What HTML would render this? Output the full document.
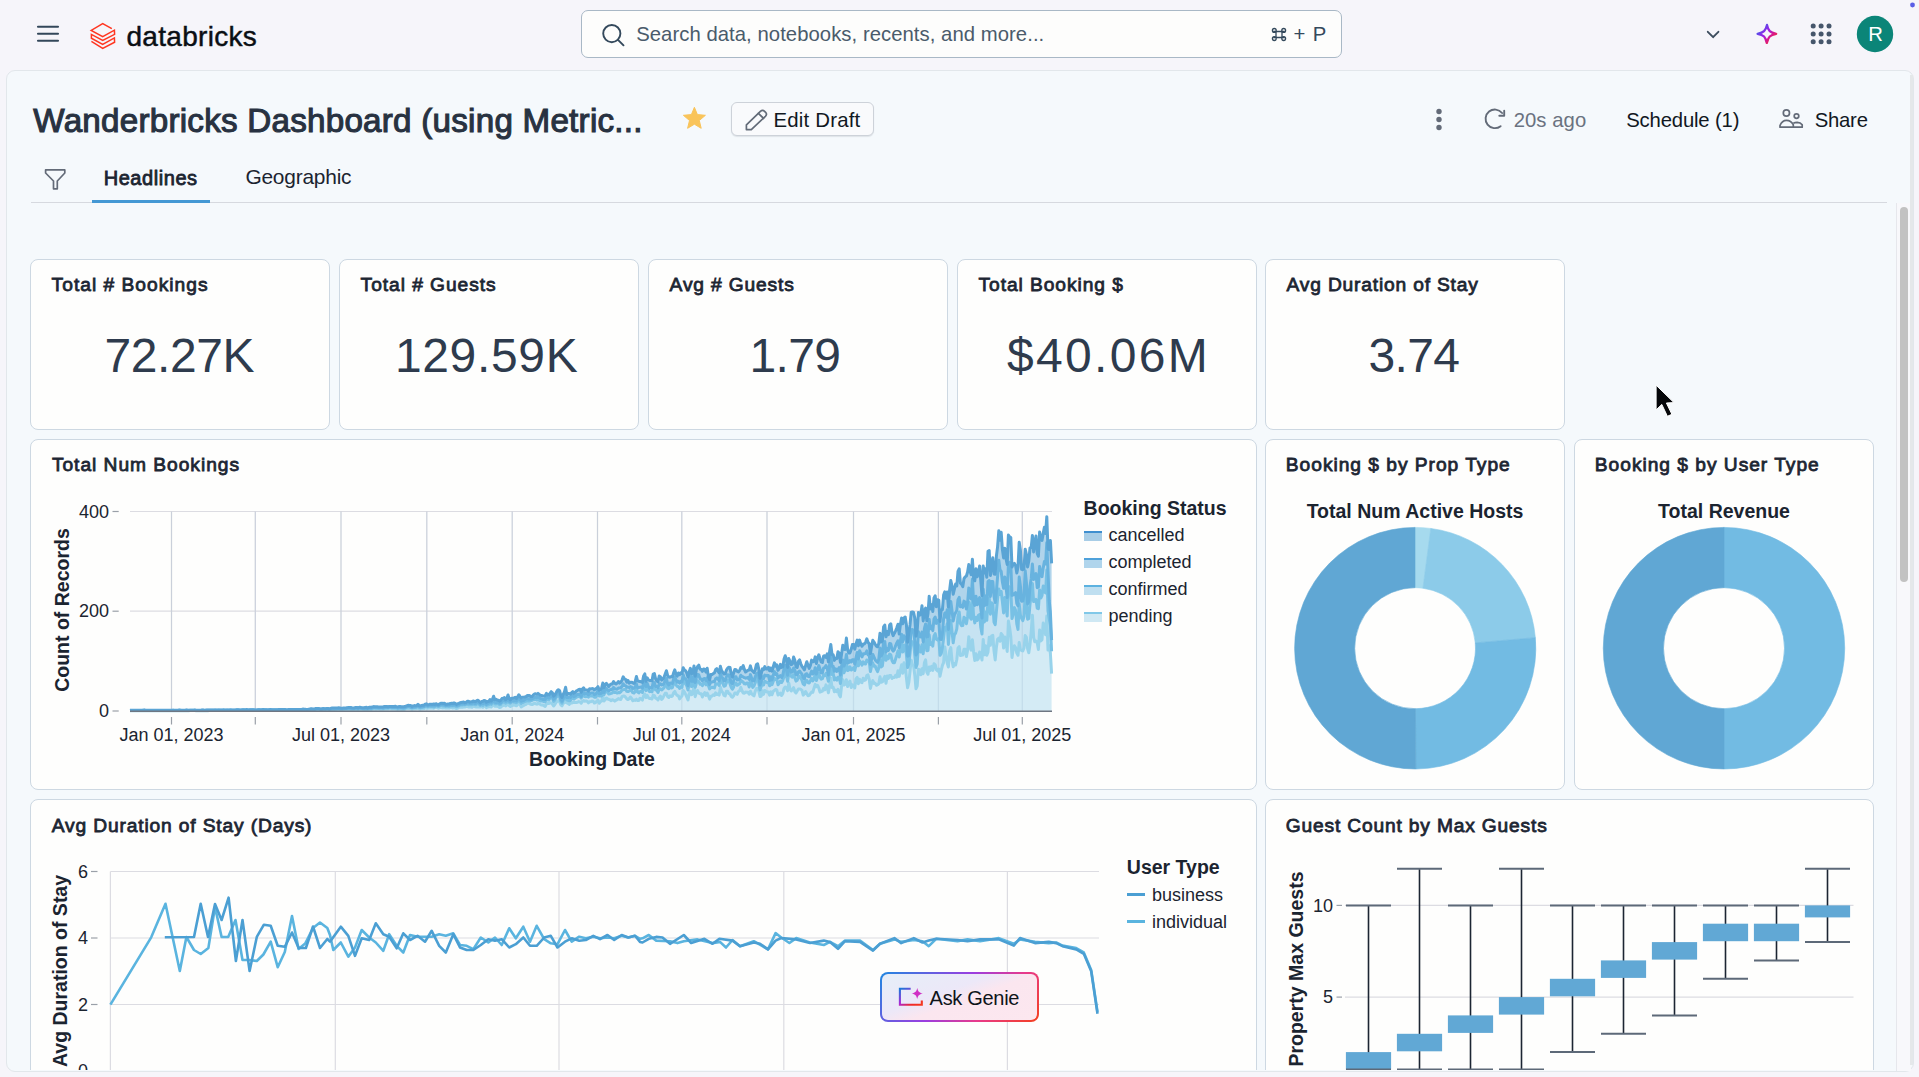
<!DOCTYPE html><html><head><meta charset="utf-8"><title>Wanderbricks Dashboard</title><style>
*{margin:0;padding:0;box-sizing:border-box}
html,body{width:1919px;height:1077px;overflow:hidden;background:#f6f5fa;font-family:"Liberation Sans",sans-serif}
.t{position:absolute;white-space:nowrap;line-height:1}
.a{position:absolute}
.card{position:absolute;background:#fefefd;border:1px solid #cdd8e2;border-radius:8px}
svg{position:absolute;left:0;top:0;overflow:visible}
</style></head><body>
<svg width="1919" height="70"><g stroke="#33475a" stroke-width="2.1" stroke-linecap="round"><line x1="38" y1="26.8" x2="58" y2="26.8"/><line x1="38" y1="33.8" x2="58" y2="33.8"/><line x1="38" y1="40.8" x2="58" y2="40.8"/></g><path d="M111.8,28.7 L102.7,23.5 L91.2,30.4 L102.7,36.6 L114.4,30.2 L114.6,34.4 L102.7,40.4 L91.4,34.4 L91.4,38.2 L102.7,44.4 L114.4,37.9 L114.6,42.2 L102.7,48.3 L91.4,41.4" fill="none" stroke="#ff3621" stroke-width="1.5" stroke-linejoin="miter"/></svg>
<div class="t" style="left:126.40px;top:23.00px;font-size:28px;font-weight:400;letter-spacing:0.31px;color:#0b0f14;-webkit-text-stroke:0.45px #0b0f14;">databricks</div>
<div class="a" style="left:581px;top:10px;width:761px;height:48px;border:1.5px solid #a9b8c6;border-radius:7px;background:#fdfdfc"></div>
<svg width="1919" height="70"><circle cx="611.8" cy="33.6" r="8.6" fill="none" stroke="#34495c" stroke-width="1.9"/><line x1="618" y1="39.8" x2="623.5" y2="45.3" stroke="#34495c" stroke-width="1.9" stroke-linecap="round"/><g fill="none" stroke="#34495c" stroke-width="1.3"><path d="M1276,30.9 V38.1 M1282,30.9 V38.1 M1273.2,31.5 H1284.8 M1273.2,37.5 H1284.8"/><circle cx="1274.3" cy="30.4" r="1.9"/><circle cx="1283.7" cy="30.4" r="1.9"/><circle cx="1274.3" cy="38.6" r="1.9"/><circle cx="1283.7" cy="38.6" r="1.9"/></g></svg>
<div class="t" style="left:636.20px;top:24.22px;font-size:20.3px;font-weight:400;letter-spacing:0.05px;color:#4a5b6b;">Search data, notebooks, recents, and more...</div>
<div class="t" style="left:1293.50px;top:24.22px;font-size:20.3px;font-weight:400;letter-spacing:0.9px;color:#34495c;">+ P</div>
<svg width="1919" height="70"><polyline points="1707.8,31.8 1713.1,37.2 1718.4,31.8" fill="none" stroke="#3d4d5e" stroke-width="1.9" stroke-linecap="round" stroke-linejoin="round"/><defs><linearGradient id="spk" gradientUnits="userSpaceOnUse" x1="1758" y1="26" x2="1775" y2="42"><stop offset="0" stop-color="#2a6de8"/><stop offset="0.45" stop-color="#9a1fe6"/><stop offset="0.7" stop-color="#d8188a"/><stop offset="1" stop-color="#f5301a"/></linearGradient><linearGradient id="gb" x1="0" y1="0" x2="1" y2="1"><stop offset="0" stop-color="#1f86e0"/><stop offset="0.5" stop-color="#b02ad8"/><stop offset="1" stop-color="#f53a1e"/></linearGradient></defs><path d="M1767,24.9 C1768.3,31 1770,32.6 1776.2,33.8 C1770,35 1768.3,36.8 1766.8,42.9 C1765.5,36.8 1763.8,35 1757.6,33.8 C1763.8,32.6 1765.5,31 1767,24.9 Z" fill="none" stroke="url(#spk)" stroke-width="2.3" stroke-linejoin="round"/><g fill="#46566b"><circle cx="1813.2" cy="26.0" r="2.5"/><circle cx="1813.2" cy="33.9" r="2.5"/><circle cx="1813.2" cy="41.8" r="2.5"/><circle cx="1821.1" cy="26.0" r="2.5"/><circle cx="1821.1" cy="33.9" r="2.5"/><circle cx="1821.1" cy="41.8" r="2.5"/><circle cx="1829.0" cy="26.0" r="2.5"/><circle cx="1829.0" cy="33.9" r="2.5"/><circle cx="1829.0" cy="41.8" r="2.5"/></g><circle cx="1875" cy="34" r="18.2" fill="#0b8578"/><circle cx="1912.5" cy="5" r="2.4" fill="#5a5ee6"/></svg>
<div class="t" style="left:1868.20px;top:24.32px;font-size:20.3px;font-weight:400;letter-spacing:0px;color:#ffffff;">R</div>
<div class="a" style="left:6px;top:70px;width:1908px;height:1002px;border:1px solid #e2e7eb;border-radius:9px;background:#f5f9fc"></div>
<div class="a" style="left:1896px;top:203px;width:1px;height:868px;background:#e6e7ec"></div>
<div class="a" style="left:1897px;top:203px;width:14px;height:868px;background:#f8f8fb"></div>
<div class="a" style="left:1910px;top:75px;width:3px;height:990px;background:#e5e8ea"></div>
<div class="a" style="left:1900px;top:207px;width:8px;height:375px;border-radius:4px;background:#c2c2c2"></div>
<div class="t" style="left:33.30px;top:103.90px;font-size:33.2px;font-weight:400;letter-spacing:0.24px;color:#283241;-webkit-text-stroke:1.1px #283241;">Wanderbricks Dashboard (using Metric...</div>
<svg width="1919" height="220"><path d="M694.4,107.3 L697.4,114.6 L705.4,115.3 L699.3,120.5 L701.2,128.3 L694.4,124.2 L687.6,128.3 L689.5,120.5 L683.4,115.3 L691.4,114.6 Z" fill="#f9c45a" stroke="#f9c45a" stroke-width="1" stroke-linejoin="round"/></svg>
<div class="a" style="left:731px;top:102px;width:143px;height:34px;border:1px solid #cdd2d9;border-radius:6px;background:#f9fafc;box-shadow:0 1px 1px rgba(60,70,90,0.12)"></div>
<svg width="1919" height="220"><g fill="none" stroke="#626b78" stroke-width="1.7" stroke-linejoin="round" stroke-linecap="round"><path d="M746.4,124.9 L760.4,111.3 Q762.6,109.3 764.6,111.3 L765.6,112.3 Q767.4,114.3 765.4,116.3 L751.3,129.6 L746.4,129.6 Z"/><line x1="758.4" y1="113.4" x2="763.5" y2="118.3"/></g><g fill="#636b78"><circle cx="1439" cy="111.5" r="2.7"/><circle cx="1439" cy="119.5" r="2.7"/><circle cx="1439" cy="127.5" r="2.7"/></g><g fill="none" stroke="#636b78" stroke-width="1.9" stroke-linecap="round" stroke-linejoin="round"><path d="M1502.1,113 A9.3,9.3 0 1 0 1500.6,126.2"/><path d="M1499.3,115.7 L1504.2,115.7 L1504.2,110.8"/></g><g fill="none" stroke="#636b78" stroke-width="1.7" stroke-linejoin="round"><circle cx="1786.4" cy="113" r="3.1"/><circle cx="1796.5" cy="116.1" r="2.3"/><path d="M1780,127.2 L1780,125.5 Q1782,120.3 1786.5,120.3 Q1791,120.3 1793.3,124.7 L1793.3,127.2 Z"/><path d="M1793.3,123.2 Q1795,122.4 1797.2,122.4 Q1800.5,122.5 1802.2,124.8 L1802.2,127.2 L1793.3,127.2"/></g><path d="M45.6,169.9 L64.8,169.9 L64.8,173 L57.3,181 L57.3,188.8 L53.5,188.8 L53.5,181 L45.6,173 Z" fill="none" stroke="#636b78" stroke-width="1.7" stroke-linejoin="round"/></svg>
<div class="t" style="left:773.50px;top:109.63px;font-size:20.4px;font-weight:400;letter-spacing:0.2px;color:#11181f;">Edit Draft</div>
<div class="t" style="left:1513.70px;top:109.72px;font-size:20.3px;font-weight:400;letter-spacing:0.05px;color:#6a7280;">20s ago</div>
<div class="t" style="left:1626.20px;top:109.62px;font-size:20.3px;font-weight:400;letter-spacing:-0.16px;color:#11181f;">Schedule (1)</div>
<div class="t" style="left:1814.70px;top:109.62px;font-size:20.3px;font-weight:400;letter-spacing:-0.22px;color:#11181f;">Share</div>
<div class="t" style="left:103.70px;top:167.67px;font-size:20px;font-weight:400;letter-spacing:0.56px;color:#1b2430;-webkit-text-stroke:0.8px #1b2430;">Headlines</div>
<div class="t" style="left:245.40px;top:167.41px;font-size:20.9px;font-weight:400;letter-spacing:-0.21px;color:#1b2430;">Geographic</div>
<div class="a" style="left:31px;top:202px;width:1856px;height:1px;background:#d6d9df"></div>
<div class="a" style="left:91.5px;top:200px;width:118.5px;height:3px;background:#4498d4"></div>
<div class="a" style="left:7px;top:203px;width:1889px;height:867px;overflow:hidden">
<div class="a" style="left:-7px;top:-203px;width:1919px;height:1077px">
<div class="card" style="left:30px;top:259px;width:300px;height:171px"></div>
<div class="card" style="left:339px;top:259px;width:300px;height:171px"></div>
<div class="card" style="left:648px;top:259px;width:300px;height:171px"></div>
<div class="card" style="left:957px;top:259px;width:300px;height:171px"></div>
<div class="card" style="left:1265px;top:259px;width:300px;height:171px"></div>
<div class="t" style="left:51.60px;top:275.05px;font-size:19.2px;font-weight:400;letter-spacing:1.01px;color:#1d2633;-webkit-text-stroke:0.8px #1d2633;">Total # Bookings</div>
<div class="t" style="left:104.50px;top:331.97px;font-size:48px;font-weight:400;letter-spacing:-0.4px;color:#2e3b4d;">72.27K</div>
<div class="t" style="left:360.60px;top:275.05px;font-size:19.2px;font-weight:400;letter-spacing:0.95px;color:#1d2633;-webkit-text-stroke:0.8px #1d2633;">Total # Guests</div>
<div class="t" style="left:394.90px;top:331.97px;font-size:48px;font-weight:400;letter-spacing:0.67px;color:#2e3b4d;">129.59K</div>
<div class="t" style="left:669.60px;top:275.05px;font-size:19.2px;font-weight:400;letter-spacing:0.85px;color:#1d2633;-webkit-text-stroke:0.8px #1d2633;">Avg # Guests</div>
<div class="t" style="left:749.50px;top:331.97px;font-size:48px;font-weight:400;letter-spacing:-0.7px;color:#2e3b4d;">1.79</div>
<div class="t" style="left:978.60px;top:275.05px;font-size:19.2px;font-weight:400;letter-spacing:0.93px;color:#1d2633;-webkit-text-stroke:0.8px #1d2633;">Total Booking $</div>
<div class="t" style="left:1007.00px;top:331.97px;font-size:48px;font-weight:400;letter-spacing:2.33px;color:#2e3b4d;">$40.06M</div>
<div class="t" style="left:1286.60px;top:275.05px;font-size:19.2px;font-weight:400;letter-spacing:0.82px;color:#1d2633;-webkit-text-stroke:0.8px #1d2633;">Avg Duration of Stay</div>
<div class="t" style="left:1368.60px;top:331.97px;font-size:48px;font-weight:400;letter-spacing:-0.67px;color:#2e3b4d;">3.74</div>
<div class="card" style="left:30px;top:439px;width:1227px;height:351px"></div>
<div class="card" style="left:1265px;top:439px;width:300px;height:351px"></div>
<div class="card" style="left:1574px;top:439px;width:300px;height:351px"></div>
<div class="t" style="left:51.90px;top:455.05px;font-size:19.2px;font-weight:400;letter-spacing:0.97px;color:#1d2633;-webkit-text-stroke:0.8px #1d2633;">Total Num Bookings</div>
<div class="t" style="left:1285.80px;top:455.05px;font-size:19.2px;font-weight:400;letter-spacing:0.98px;color:#1d2633;-webkit-text-stroke:0.8px #1d2633;">Booking $ by Prop Type</div>
<div class="t" style="left:1594.80px;top:455.05px;font-size:19.2px;font-weight:400;letter-spacing:0.98px;color:#1d2633;-webkit-text-stroke:0.8px #1d2633;">Booking $ by User Type</div>
<div class="card" style="left:30px;top:799px;width:1227px;height:400px"></div>
<div class="card" style="left:1265px;top:799px;width:609px;height:400px"></div>
<div class="t" style="left:51.70px;top:815.55px;font-size:19.2px;font-weight:400;letter-spacing:0.86px;color:#1d2633;-webkit-text-stroke:0.8px #1d2633;">Avg Duration of Stay (Days)</div>
<div class="t" style="left:1285.80px;top:815.55px;font-size:19.2px;font-weight:400;letter-spacing:0.83px;color:#1d2633;-webkit-text-stroke:0.8px #1d2633;">Guest Count by Max Guests</div>
<svg width="1919" height="1077"><line x1="130" y1="511.5" x2="1052" y2="511.5" stroke="#dcdce2" stroke-width="1.2"/><line x1="130" y1="611.2" x2="1052" y2="611.2" stroke="#dcdce2" stroke-width="1.2"/><line x1="171.5" y1="511.5" x2="171.5" y2="711" stroke="#dcdce2" stroke-width="1.2"/><line x1="171.5" y1="717" x2="171.5" y2="724.5" stroke="#9aa0a8" stroke-width="1.2"/><line x1="255.3" y1="511.5" x2="255.3" y2="711" stroke="#dcdce2" stroke-width="1.2"/><line x1="255.3" y1="717" x2="255.3" y2="724.5" stroke="#9aa0a8" stroke-width="1.2"/><line x1="341" y1="511.5" x2="341" y2="711" stroke="#dcdce2" stroke-width="1.2"/><line x1="341" y1="717" x2="341" y2="724.5" stroke="#9aa0a8" stroke-width="1.2"/><line x1="426.8" y1="511.5" x2="426.8" y2="711" stroke="#dcdce2" stroke-width="1.2"/><line x1="426.8" y1="717" x2="426.8" y2="724.5" stroke="#9aa0a8" stroke-width="1.2"/><line x1="512.2" y1="511.5" x2="512.2" y2="711" stroke="#dcdce2" stroke-width="1.2"/><line x1="512.2" y1="717" x2="512.2" y2="724.5" stroke="#9aa0a8" stroke-width="1.2"/><line x1="597.5" y1="511.5" x2="597.5" y2="711" stroke="#dcdce2" stroke-width="1.2"/><line x1="597.5" y1="717" x2="597.5" y2="724.5" stroke="#9aa0a8" stroke-width="1.2"/><line x1="681.8" y1="511.5" x2="681.8" y2="711" stroke="#dcdce2" stroke-width="1.2"/><line x1="681.8" y1="717" x2="681.8" y2="724.5" stroke="#9aa0a8" stroke-width="1.2"/><line x1="767" y1="511.5" x2="767" y2="711" stroke="#dcdce2" stroke-width="1.2"/><line x1="767" y1="717" x2="767" y2="724.5" stroke="#9aa0a8" stroke-width="1.2"/><line x1="853.5" y1="511.5" x2="853.5" y2="711" stroke="#dcdce2" stroke-width="1.2"/><line x1="853.5" y1="717" x2="853.5" y2="724.5" stroke="#9aa0a8" stroke-width="1.2"/><line x1="938.4" y1="511.5" x2="938.4" y2="711" stroke="#dcdce2" stroke-width="1.2"/><line x1="938.4" y1="717" x2="938.4" y2="724.5" stroke="#9aa0a8" stroke-width="1.2"/><line x1="1022.3" y1="511.5" x2="1022.3" y2="711" stroke="#dcdce2" stroke-width="1.2"/><line x1="1022.3" y1="717" x2="1022.3" y2="724.5" stroke="#9aa0a8" stroke-width="1.2"/><line x1="112.5" y1="511.5" x2="118.7" y2="511.5" stroke="#9aa0a8" stroke-width="1.2"/><line x1="112.5" y1="611.2" x2="118.7" y2="611.2" stroke="#9aa0a8" stroke-width="1.2"/><line x1="112.5" y1="711.0" x2="118.7" y2="711.0" stroke="#9aa0a8" stroke-width="1.2"/><polygon points="130.0,710.7 131.2,710.7 132.4,710.7 133.6,710.7 134.8,710.8 136.0,710.8 137.2,710.7 138.4,710.7 139.6,710.7 140.8,710.8 142.0,710.7 143.2,710.7 144.4,710.7 145.6,710.7 146.8,710.7 148.0,710.7 149.2,710.7 150.4,710.7 151.6,710.7 152.8,710.7 154.0,710.8 155.2,710.8 156.4,710.7 157.6,710.8 158.8,710.8 160.0,710.8 161.2,710.8 162.4,710.8 163.6,710.8 164.8,710.7 166.0,710.7 167.2,710.7 168.4,710.7 169.6,710.7 170.8,710.7 172.0,710.7 173.2,710.7 174.4,710.7 175.6,710.7 176.8,710.7 178.0,710.7 179.2,710.7 180.4,710.7 181.6,710.7 182.8,710.7 184.0,710.8 185.2,710.8 186.4,710.6 187.6,710.7 188.8,710.7 190.0,710.6 191.2,710.6 192.4,710.6 193.6,710.6 194.8,710.6 196.0,710.7 197.2,710.7 198.4,710.7 199.6,710.7 200.8,710.7 202.0,710.7 203.2,710.6 204.4,710.7 205.6,710.7 206.8,710.7 208.0,710.7 209.2,710.6 210.4,710.6 211.6,710.6 212.8,710.6 214.0,710.6 215.2,710.6 216.4,710.6 217.6,710.6 218.8,710.5 220.0,710.5 221.2,710.6 222.4,710.6 223.6,710.6 224.8,710.6 226.0,710.6 227.2,710.6 228.4,710.6 229.6,710.6 230.8,710.5 232.0,710.6 233.2,710.6 234.4,710.6 235.6,710.5 236.8,710.4 238.0,710.4 239.2,710.5 240.4,710.6 241.6,710.5 242.8,710.4 244.0,710.5 245.2,710.6 246.4,710.4 247.6,710.5 248.8,710.6 250.0,710.6 251.2,710.5 252.4,710.5 253.6,710.5 254.8,710.5 256.0,710.6 257.2,710.5 258.4,710.4 259.6,710.5 260.8,710.6 262.0,710.4 263.2,710.3 264.4,710.3 265.6,710.4 266.8,710.5 268.0,710.5 269.2,710.3 270.4,710.3 271.6,710.5 272.8,710.5 274.0,710.4 275.2,710.5 276.4,710.5 277.6,710.5 278.8,710.4 280.0,710.3 281.2,710.4 282.4,710.4 283.6,710.4 284.8,710.4 286.0,710.6 287.2,710.5 288.4,710.4 289.6,710.4 290.8,710.3 292.0,710.3 293.2,710.2 294.4,710.2 295.6,710.3 296.8,710.4 298.0,710.4 299.2,710.5 300.4,710.4 301.6,710.5 302.8,710.2 304.0,710.3 305.2,710.3 306.4,710.3 307.6,710.4 308.8,710.3 310.0,710.1 311.2,710.0 312.4,710.0 313.6,710.2 314.8,710.1 316.0,709.9 317.2,709.8 318.4,709.7 319.6,709.7 320.8,710.0 322.0,710.0 323.2,709.9 324.4,709.8 325.6,709.8 326.8,709.9 328.0,709.9 329.2,710.1 330.4,710.0 331.6,710.0 332.8,709.9 334.0,709.8 335.2,709.7 336.4,709.6 337.6,709.6 338.8,709.7 340.0,709.7 341.2,709.8 342.4,709.8 343.6,709.7 344.8,709.6 346.0,709.6 347.2,709.6 348.4,709.8 349.6,709.6 350.8,709.7 352.0,709.8 353.2,709.7 354.4,709.7 355.6,709.6 356.8,709.7 358.0,709.8 359.2,709.7 360.4,709.3 361.6,709.5 362.8,709.7 364.0,709.6 365.2,709.6 366.4,709.3 367.6,709.6 368.8,709.4 370.0,709.3 371.2,709.6 372.4,709.3 373.6,709.1 374.8,709.1 376.0,709.2 377.2,709.1 378.4,709.1 379.6,709.2 380.8,709.2 382.0,709.2 383.2,709.3 384.4,709.1 385.6,708.9 386.8,709.0 388.0,709.0 389.2,708.6 390.4,708.8 391.6,709.1 392.8,709.0 394.0,709.1 395.2,709.1 396.4,709.2 397.6,709.6 398.8,709.2 400.0,709.3 401.2,709.4 402.4,709.5 403.6,709.5 404.8,709.2 406.0,708.6 407.2,708.3 408.4,708.6 409.6,708.5 410.8,708.9 412.0,709.3 413.2,708.9 414.4,708.6 415.6,708.8 416.8,708.6 418.0,707.7 419.2,709.0 420.4,709.2 421.6,708.8 422.8,708.7 424.0,708.6 425.2,708.0 426.4,707.8 427.6,708.3 428.8,708.1 430.0,707.9 431.2,707.8 432.4,707.9 433.6,708.2 434.8,707.7 436.0,707.2 437.2,707.7 438.4,708.2 439.6,707.8 440.8,707.4 442.0,707.8 443.2,707.9 444.4,707.6 445.6,708.1 446.8,707.8 448.0,707.9 449.2,708.1 450.4,707.4 451.6,707.6 452.8,708.1 454.0,707.6 455.2,708.0 456.4,708.6 457.6,708.1 458.8,707.4 460.0,707.1 461.2,707.2 462.4,707.2 463.6,707.0 464.8,707.1 466.0,706.7 467.2,706.3 468.4,706.9 469.6,707.0 470.8,706.9 472.0,707.3 473.2,705.7 474.4,706.5 475.6,706.9 476.8,706.8 478.0,707.0 479.2,706.8 480.4,707.0 481.6,706.3 482.8,707.3 484.0,706.2 485.2,706.1 486.4,707.6 487.6,707.0 488.8,706.7 490.0,706.6 491.2,707.0 492.4,705.6 493.6,702.9 494.8,706.2 496.0,706.3 497.2,706.2 498.4,706.5 499.6,707.5 500.8,707.1 502.0,705.9 503.2,705.5 504.4,704.9 505.6,705.9 506.8,705.1 508.0,703.8 509.2,705.7 510.4,706.4 511.6,705.8 512.8,705.3 514.0,704.8 515.2,705.3 516.4,705.8 517.6,704.7 518.8,702.9 520.0,704.3 521.2,707.0 522.4,706.1 523.6,705.6 524.8,704.8 526.0,704.4 527.2,703.1 528.4,703.3 529.6,703.7 530.8,704.3 532.0,704.5 533.2,704.0 534.4,703.2 535.6,703.8 536.8,704.2 538.0,703.3 539.2,703.8 540.4,704.5 541.6,705.1 542.8,705.1 544.0,705.7 545.2,706.5 546.4,703.8 547.6,703.2 548.8,703.6 550.0,702.8 551.2,703.0 552.4,704.1 553.6,706.0 554.8,704.5 556.0,702.6 557.2,701.2 558.4,700.7 559.6,701.8 560.8,704.8 562.0,705.8 563.2,703.4 564.4,702.7 565.6,697.6 566.8,702.9 568.0,703.4 569.2,704.4 570.4,703.2 571.6,703.1 572.8,702.5 574.0,702.2 575.2,702.6 576.4,702.4 577.6,702.3 578.8,701.6 580.0,701.9 581.2,703.1 582.4,701.3 583.6,700.6 584.8,701.3 586.0,700.9 587.2,701.4 588.4,702.8 589.6,701.7 590.8,701.8 592.0,701.1 593.2,701.2 594.4,703.1 595.6,702.7 596.8,701.0 598.0,700.2 599.2,703.3 600.4,701.7 601.6,701.2 602.8,696.7 604.0,701.0 605.2,699.6 606.4,698.0 607.6,699.0 608.8,699.3 610.0,699.8 611.2,700.7 612.4,699.7 613.6,700.3 614.8,701.1 616.0,700.3 617.2,699.6 618.4,698.5 619.6,699.3 620.8,699.4 622.0,696.7 623.2,696.1 624.4,696.1 625.6,697.3 626.8,698.9 628.0,699.6 629.2,698.8 630.4,697.0 631.6,698.5 632.8,700.7 634.0,699.9 635.2,700.4 636.4,699.2 637.6,700.6 638.8,700.6 640.0,698.3 641.2,698.7 642.4,700.1 643.6,695.9 644.8,694.0 646.0,697.6 647.2,695.3 648.4,697.7 649.6,698.6 650.8,698.6 652.0,699.0 653.2,695.1 654.4,695.6 655.6,698.1 656.8,698.7 658.0,699.9 659.2,697.6 660.4,696.1 661.6,699.4 662.8,698.2 664.0,695.7 665.2,693.3 666.4,693.2 667.6,696.6 668.8,697.5 670.0,695.8 671.2,696.5 672.4,696.0 673.6,692.7 674.8,691.4 676.0,694.1 677.2,695.4 678.4,695.8 679.6,698.9 680.8,697.4 682.0,695.9 683.2,690.5 684.4,691.9 685.6,694.4 686.8,697.1 688.0,699.9 689.2,694.0 690.4,691.4 691.6,694.7 692.8,693.2 694.0,686.2 695.2,696.7 696.4,692.6 697.6,690.6 698.8,692.9 700.0,693.7 701.2,693.7 702.4,697.0 703.6,694.3 704.8,692.7 706.0,695.4 707.2,693.1 708.4,695.8 709.6,699.1 710.8,696.5 712.0,696.0 713.2,694.8 714.4,695.5 715.6,692.9 716.8,694.5 718.0,694.0 719.2,695.1 720.4,687.3 721.6,691.1 722.8,692.6 724.0,695.4 725.2,695.9 726.4,691.3 727.6,691.2 728.8,693.5 730.0,694.0 731.2,696.4 732.4,697.2 733.6,695.8 734.8,693.0 736.0,693.0 737.2,694.3 738.4,691.5 739.6,690.7 740.8,687.4 742.0,690.8 743.2,693.1 744.4,693.3 745.6,692.1 746.8,692.2 748.0,692.2 749.2,694.2 750.4,691.2 751.6,693.8 752.8,695.0 754.0,695.8 755.2,691.5 756.4,688.4 757.6,688.5 758.8,691.2 760.0,696.4 761.2,696.2 762.4,690.8 763.6,694.4 764.8,690.5 766.0,691.2 767.2,692.1 768.4,692.1 769.6,695.1 770.8,691.9 772.0,694.8 773.2,691.4 774.4,690.4 775.6,689.5 776.8,690.0 778.0,695.0 779.2,694.3 780.4,693.1 781.6,695.5 782.8,693.4 784.0,688.6 785.2,687.0 786.4,687.8 787.6,690.6 788.8,683.1 790.0,689.1 791.2,691.0 792.4,689.5 793.6,687.7 794.8,691.5 796.0,693.0 797.2,691.0 798.4,688.9 799.6,688.9 800.8,689.4 802.0,690.4 803.2,695.1 804.4,694.0 805.6,691.5 806.8,693.8 808.0,695.7 809.2,695.4 810.4,693.7 811.6,692.0 812.8,692.4 814.0,688.2 815.2,684.4 816.4,686.8 817.6,685.3 818.8,688.0 820.0,692.1 821.2,691.6 822.4,691.1 823.6,688.4 824.8,689.8 826.0,684.9 827.2,687.2 828.4,692.8 829.6,686.1 830.8,678.0 832.0,687.6 833.2,687.2 834.4,691.8 835.6,690.2 836.8,691.7 838.0,689.3 839.2,695.0 840.4,696.8 841.6,685.9 842.8,679.6 844.0,685.1 845.2,684.3 846.4,679.7 847.6,686.5 848.8,682.6 850.0,681.2 851.2,687.5 852.4,684.9 853.6,685.4 854.8,687.9 856.0,679.0 857.2,677.4 858.4,683.7 859.6,679.3 860.8,682.1 862.0,682.6 863.2,678.2 864.4,680.4 865.6,679.9 866.8,675.3 868.0,674.9 869.2,679.3 870.4,688.4 871.6,683.5 872.8,680.6 874.0,683.5 875.2,683.3 876.4,685.3 877.6,684.7 878.8,683.8 880.0,676.8 881.2,682.2 882.4,681.9 883.6,678.8 884.8,676.4 886.0,683.3 887.2,675.9 888.4,678.5 889.6,675.4 890.8,675.6 892.0,678.5 893.2,677.4 894.4,677.6 895.6,675.3 896.8,677.1 898.0,670.7 899.2,676.4 900.4,670.3 901.6,664.7 902.8,673.2 904.0,662.8 905.2,665.7 906.4,677.9 907.6,687.7 908.8,682.5 910.0,671.7 911.2,660.2 912.4,664.4 913.6,665.7 914.8,675.2 916.0,688.8 917.2,685.9 918.4,669.2 919.6,670.0 920.8,674.8 922.0,668.8 923.2,673.7 924.4,662.9 925.6,659.9 926.8,672.0 928.0,674.2 929.2,667.0 930.4,670.4 931.6,666.4 932.8,670.4 934.0,663.7 935.2,664.6 936.4,669.8 937.6,671.0 938.8,669.1 940.0,676.2 941.2,670.5 942.4,665.4 943.6,662.6 944.8,647.1 946.0,655.0 947.2,663.0 948.4,667.0 949.6,651.3 950.8,647.6 952.0,660.3 953.2,666.8 954.4,663.5 955.6,665.0 956.8,659.5 958.0,648.0 959.2,646.7 960.4,655.5 961.6,655.2 962.8,655.1 964.0,649.2 965.2,649.3 966.4,656.6 967.6,650.3 968.8,636.7 970.0,646.7 971.2,650.2 972.4,639.8 973.6,651.9 974.8,660.6 976.0,653.7 977.2,659.9 978.4,658.5 979.6,652.0 980.8,654.7 982.0,660.0 983.2,639.4 984.4,654.8 985.6,645.7 986.8,655.3 988.0,651.9 989.2,637.3 990.4,645.3 991.6,635.9 992.8,635.4 994.0,650.9 995.2,659.9 996.4,647.1 997.6,639.1 998.8,638.2 1000.0,641.3 1001.2,633.5 1002.4,635.2 1003.6,648.0 1004.8,637.1 1006.0,642.5 1007.2,651.4 1008.4,621.1 1009.6,627.4 1010.8,636.4 1012.0,657.4 1013.2,649.5 1014.4,645.8 1015.6,647.5 1016.8,653.1 1018.0,655.3 1019.2,642.5 1020.4,649.8 1021.6,650.5 1022.8,650.9 1024.0,648.0 1025.2,635.6 1026.4,637.3 1027.6,648.7 1028.8,652.7 1030.0,644.3 1031.2,631.6 1032.4,615.2 1033.6,637.3 1034.8,641.8 1036.0,641.0 1037.2,642.5 1038.4,649.5 1039.6,630.0 1040.8,640.9 1042.0,639.7 1043.2,623.0 1044.4,627.7 1045.6,634.7 1046.8,615.9 1048.0,650.1 1049.2,645.6 1050.4,653.5 1051.6,673.7 1051.6,711.0 1050.4,711.0 1049.2,711.0 1048.0,711.0 1046.8,711.0 1045.6,711.0 1044.4,711.0 1043.2,711.0 1042.0,711.0 1040.8,711.0 1039.6,711.0 1038.4,711.0 1037.2,711.0 1036.0,711.0 1034.8,711.0 1033.6,711.0 1032.4,711.0 1031.2,711.0 1030.0,711.0 1028.8,711.0 1027.6,711.0 1026.4,711.0 1025.2,711.0 1024.0,711.0 1022.8,711.0 1021.6,711.0 1020.4,711.0 1019.2,711.0 1018.0,711.0 1016.8,711.0 1015.6,711.0 1014.4,711.0 1013.2,711.0 1012.0,711.0 1010.8,711.0 1009.6,711.0 1008.4,711.0 1007.2,711.0 1006.0,711.0 1004.8,711.0 1003.6,711.0 1002.4,711.0 1001.2,711.0 1000.0,711.0 998.8,711.0 997.6,711.0 996.4,711.0 995.2,711.0 994.0,711.0 992.8,711.0 991.6,711.0 990.4,711.0 989.2,711.0 988.0,711.0 986.8,711.0 985.6,711.0 984.4,711.0 983.2,711.0 982.0,711.0 980.8,711.0 979.6,711.0 978.4,711.0 977.2,711.0 976.0,711.0 974.8,711.0 973.6,711.0 972.4,711.0 971.2,711.0 970.0,711.0 968.8,711.0 967.6,711.0 966.4,711.0 965.2,711.0 964.0,711.0 962.8,711.0 961.6,711.0 960.4,711.0 959.2,711.0 958.0,711.0 956.8,711.0 955.6,711.0 954.4,711.0 953.2,711.0 952.0,711.0 950.8,711.0 949.6,711.0 948.4,711.0 947.2,711.0 946.0,711.0 944.8,711.0 943.6,711.0 942.4,711.0 941.2,711.0 940.0,711.0 938.8,711.0 937.6,711.0 936.4,711.0 935.2,711.0 934.0,711.0 932.8,711.0 931.6,711.0 930.4,711.0 929.2,711.0 928.0,711.0 926.8,711.0 925.6,711.0 924.4,711.0 923.2,711.0 922.0,711.0 920.8,711.0 919.6,711.0 918.4,711.0 917.2,711.0 916.0,711.0 914.8,711.0 913.6,711.0 912.4,711.0 911.2,711.0 910.0,711.0 908.8,711.0 907.6,711.0 906.4,711.0 905.2,711.0 904.0,711.0 902.8,711.0 901.6,711.0 900.4,711.0 899.2,711.0 898.0,711.0 896.8,711.0 895.6,711.0 894.4,711.0 893.2,711.0 892.0,711.0 890.8,711.0 889.6,711.0 888.4,711.0 887.2,711.0 886.0,711.0 884.8,711.0 883.6,711.0 882.4,711.0 881.2,711.0 880.0,711.0 878.8,711.0 877.6,711.0 876.4,711.0 875.2,711.0 874.0,711.0 872.8,711.0 871.6,711.0 870.4,711.0 869.2,711.0 868.0,711.0 866.8,711.0 865.6,711.0 864.4,711.0 863.2,711.0 862.0,711.0 860.8,711.0 859.6,711.0 858.4,711.0 857.2,711.0 856.0,711.0 854.8,711.0 853.6,711.0 852.4,711.0 851.2,711.0 850.0,711.0 848.8,711.0 847.6,711.0 846.4,711.0 845.2,711.0 844.0,711.0 842.8,711.0 841.6,711.0 840.4,711.0 839.2,711.0 838.0,711.0 836.8,711.0 835.6,711.0 834.4,711.0 833.2,711.0 832.0,711.0 830.8,711.0 829.6,711.0 828.4,711.0 827.2,711.0 826.0,711.0 824.8,711.0 823.6,711.0 822.4,711.0 821.2,711.0 820.0,711.0 818.8,711.0 817.6,711.0 816.4,711.0 815.2,711.0 814.0,711.0 812.8,711.0 811.6,711.0 810.4,711.0 809.2,711.0 808.0,711.0 806.8,711.0 805.6,711.0 804.4,711.0 803.2,711.0 802.0,711.0 800.8,711.0 799.6,711.0 798.4,711.0 797.2,711.0 796.0,711.0 794.8,711.0 793.6,711.0 792.4,711.0 791.2,711.0 790.0,711.0 788.8,711.0 787.6,711.0 786.4,711.0 785.2,711.0 784.0,711.0 782.8,711.0 781.6,711.0 780.4,711.0 779.2,711.0 778.0,711.0 776.8,711.0 775.6,711.0 774.4,711.0 773.2,711.0 772.0,711.0 770.8,711.0 769.6,711.0 768.4,711.0 767.2,711.0 766.0,711.0 764.8,711.0 763.6,711.0 762.4,711.0 761.2,711.0 760.0,711.0 758.8,711.0 757.6,711.0 756.4,711.0 755.2,711.0 754.0,711.0 752.8,711.0 751.6,711.0 750.4,711.0 749.2,711.0 748.0,711.0 746.8,711.0 745.6,711.0 744.4,711.0 743.2,711.0 742.0,711.0 740.8,711.0 739.6,711.0 738.4,711.0 737.2,711.0 736.0,711.0 734.8,711.0 733.6,711.0 732.4,711.0 731.2,711.0 730.0,711.0 728.8,711.0 727.6,711.0 726.4,711.0 725.2,711.0 724.0,711.0 722.8,711.0 721.6,711.0 720.4,711.0 719.2,711.0 718.0,711.0 716.8,711.0 715.6,711.0 714.4,711.0 713.2,711.0 712.0,711.0 710.8,711.0 709.6,711.0 708.4,711.0 707.2,711.0 706.0,711.0 704.8,711.0 703.6,711.0 702.4,711.0 701.2,711.0 700.0,711.0 698.8,711.0 697.6,711.0 696.4,711.0 695.2,711.0 694.0,711.0 692.8,711.0 691.6,711.0 690.4,711.0 689.2,711.0 688.0,711.0 686.8,711.0 685.6,711.0 684.4,711.0 683.2,711.0 682.0,711.0 680.8,711.0 679.6,711.0 678.4,711.0 677.2,711.0 676.0,711.0 674.8,711.0 673.6,711.0 672.4,711.0 671.2,711.0 670.0,711.0 668.8,711.0 667.6,711.0 666.4,711.0 665.2,711.0 664.0,711.0 662.8,711.0 661.6,711.0 660.4,711.0 659.2,711.0 658.0,711.0 656.8,711.0 655.6,711.0 654.4,711.0 653.2,711.0 652.0,711.0 650.8,711.0 649.6,711.0 648.4,711.0 647.2,711.0 646.0,711.0 644.8,711.0 643.6,711.0 642.4,711.0 641.2,711.0 640.0,711.0 638.8,711.0 637.6,711.0 636.4,711.0 635.2,711.0 634.0,711.0 632.8,711.0 631.6,711.0 630.4,711.0 629.2,711.0 628.0,711.0 626.8,711.0 625.6,711.0 624.4,711.0 623.2,711.0 622.0,711.0 620.8,711.0 619.6,711.0 618.4,711.0 617.2,711.0 616.0,711.0 614.8,711.0 613.6,711.0 612.4,711.0 611.2,711.0 610.0,711.0 608.8,711.0 607.6,711.0 606.4,711.0 605.2,711.0 604.0,711.0 602.8,711.0 601.6,711.0 600.4,711.0 599.2,711.0 598.0,711.0 596.8,711.0 595.6,711.0 594.4,711.0 593.2,711.0 592.0,711.0 590.8,711.0 589.6,711.0 588.4,711.0 587.2,711.0 586.0,711.0 584.8,711.0 583.6,711.0 582.4,711.0 581.2,711.0 580.0,711.0 578.8,711.0 577.6,711.0 576.4,711.0 575.2,711.0 574.0,711.0 572.8,711.0 571.6,711.0 570.4,711.0 569.2,711.0 568.0,711.0 566.8,711.0 565.6,711.0 564.4,711.0 563.2,711.0 562.0,711.0 560.8,711.0 559.6,711.0 558.4,711.0 557.2,711.0 556.0,711.0 554.8,711.0 553.6,711.0 552.4,711.0 551.2,711.0 550.0,711.0 548.8,711.0 547.6,711.0 546.4,711.0 545.2,711.0 544.0,711.0 542.8,711.0 541.6,711.0 540.4,711.0 539.2,711.0 538.0,711.0 536.8,711.0 535.6,711.0 534.4,711.0 533.2,711.0 532.0,711.0 530.8,711.0 529.6,711.0 528.4,711.0 527.2,711.0 526.0,711.0 524.8,711.0 523.6,711.0 522.4,711.0 521.2,711.0 520.0,711.0 518.8,711.0 517.6,711.0 516.4,711.0 515.2,711.0 514.0,711.0 512.8,711.0 511.6,711.0 510.4,711.0 509.2,711.0 508.0,711.0 506.8,711.0 505.6,711.0 504.4,711.0 503.2,711.0 502.0,711.0 500.8,711.0 499.6,711.0 498.4,711.0 497.2,711.0 496.0,711.0 494.8,711.0 493.6,711.0 492.4,711.0 491.2,711.0 490.0,711.0 488.8,711.0 487.6,711.0 486.4,711.0 485.2,711.0 484.0,711.0 482.8,711.0 481.6,711.0 480.4,711.0 479.2,711.0 478.0,711.0 476.8,711.0 475.6,711.0 474.4,711.0 473.2,711.0 472.0,711.0 470.8,711.0 469.6,711.0 468.4,711.0 467.2,711.0 466.0,711.0 464.8,711.0 463.6,711.0 462.4,711.0 461.2,711.0 460.0,711.0 458.8,711.0 457.6,711.0 456.4,711.0 455.2,711.0 454.0,711.0 452.8,711.0 451.6,711.0 450.4,711.0 449.2,711.0 448.0,711.0 446.8,711.0 445.6,711.0 444.4,711.0 443.2,711.0 442.0,711.0 440.8,711.0 439.6,711.0 438.4,711.0 437.2,711.0 436.0,711.0 434.8,711.0 433.6,711.0 432.4,711.0 431.2,711.0 430.0,711.0 428.8,711.0 427.6,711.0 426.4,711.0 425.2,711.0 424.0,711.0 422.8,711.0 421.6,711.0 420.4,711.0 419.2,711.0 418.0,711.0 416.8,711.0 415.6,711.0 414.4,711.0 413.2,711.0 412.0,711.0 410.8,711.0 409.6,711.0 408.4,711.0 407.2,711.0 406.0,711.0 404.8,711.0 403.6,711.0 402.4,711.0 401.2,711.0 400.0,711.0 398.8,711.0 397.6,711.0 396.4,711.0 395.2,711.0 394.0,711.0 392.8,711.0 391.6,711.0 390.4,711.0 389.2,711.0 388.0,711.0 386.8,711.0 385.6,711.0 384.4,711.0 383.2,711.0 382.0,711.0 380.8,711.0 379.6,711.0 378.4,711.0 377.2,711.0 376.0,711.0 374.8,711.0 373.6,711.0 372.4,711.0 371.2,711.0 370.0,711.0 368.8,711.0 367.6,711.0 366.4,711.0 365.2,711.0 364.0,711.0 362.8,711.0 361.6,711.0 360.4,711.0 359.2,711.0 358.0,711.0 356.8,711.0 355.6,711.0 354.4,711.0 353.2,711.0 352.0,711.0 350.8,711.0 349.6,711.0 348.4,711.0 347.2,711.0 346.0,711.0 344.8,711.0 343.6,711.0 342.4,711.0 341.2,711.0 340.0,711.0 338.8,711.0 337.6,711.0 336.4,711.0 335.2,711.0 334.0,711.0 332.8,711.0 331.6,711.0 330.4,711.0 329.2,711.0 328.0,711.0 326.8,711.0 325.6,711.0 324.4,711.0 323.2,711.0 322.0,711.0 320.8,711.0 319.6,711.0 318.4,711.0 317.2,711.0 316.0,711.0 314.8,711.0 313.6,711.0 312.4,711.0 311.2,711.0 310.0,711.0 308.8,711.0 307.6,711.0 306.4,711.0 305.2,711.0 304.0,711.0 302.8,711.0 301.6,711.0 300.4,711.0 299.2,711.0 298.0,711.0 296.8,711.0 295.6,711.0 294.4,711.0 293.2,711.0 292.0,711.0 290.8,711.0 289.6,711.0 288.4,711.0 287.2,711.0 286.0,711.0 284.8,711.0 283.6,711.0 282.4,711.0 281.2,711.0 280.0,711.0 278.8,711.0 277.6,711.0 276.4,711.0 275.2,711.0 274.0,711.0 272.8,711.0 271.6,711.0 270.4,711.0 269.2,711.0 268.0,711.0 266.8,711.0 265.6,711.0 264.4,711.0 263.2,711.0 262.0,711.0 260.8,711.0 259.6,711.0 258.4,711.0 257.2,711.0 256.0,711.0 254.8,711.0 253.6,711.0 252.4,711.0 251.2,711.0 250.0,711.0 248.8,711.0 247.6,711.0 246.4,711.0 245.2,711.0 244.0,711.0 242.8,711.0 241.6,711.0 240.4,711.0 239.2,711.0 238.0,711.0 236.8,711.0 235.6,711.0 234.4,711.0 233.2,711.0 232.0,711.0 230.8,711.0 229.6,711.0 228.4,711.0 227.2,711.0 226.0,711.0 224.8,711.0 223.6,711.0 222.4,711.0 221.2,711.0 220.0,711.0 218.8,711.0 217.6,711.0 216.4,711.0 215.2,711.0 214.0,711.0 212.8,711.0 211.6,711.0 210.4,711.0 209.2,711.0 208.0,711.0 206.8,711.0 205.6,711.0 204.4,711.0 203.2,711.0 202.0,711.0 200.8,711.0 199.6,711.0 198.4,711.0 197.2,711.0 196.0,711.0 194.8,711.0 193.6,711.0 192.4,711.0 191.2,711.0 190.0,711.0 188.8,711.0 187.6,711.0 186.4,711.0 185.2,711.0 184.0,711.0 182.8,711.0 181.6,711.0 180.4,711.0 179.2,711.0 178.0,711.0 176.8,711.0 175.6,711.0 174.4,711.0 173.2,711.0 172.0,711.0 170.8,711.0 169.6,711.0 168.4,711.0 167.2,711.0 166.0,711.0 164.8,711.0 163.6,711.0 162.4,711.0 161.2,711.0 160.0,711.0 158.8,711.0 157.6,711.0 156.4,711.0 155.2,711.0 154.0,711.0 152.8,711.0 151.6,711.0 150.4,711.0 149.2,711.0 148.0,711.0 146.8,711.0 145.6,711.0 144.4,711.0 143.2,711.0 142.0,711.0 140.8,711.0 139.6,711.0 138.4,711.0 137.2,711.0 136.0,711.0 134.8,711.0 133.6,711.0 132.4,711.0 131.2,711.0 130.0,711.0" fill="#d4ebf5"/><polygon points="130.0,710.6 131.2,710.5 132.4,710.5 133.6,710.6 134.8,710.6 136.0,710.6 137.2,710.6 138.4,710.5 139.6,710.6 140.8,710.6 142.0,710.5 143.2,710.5 144.4,710.5 145.6,710.6 146.8,710.6 148.0,710.5 149.2,710.5 150.4,710.6 151.6,710.5 152.8,710.6 154.0,710.6 155.2,710.6 156.4,710.6 157.6,710.6 158.8,710.6 160.0,710.6 161.2,710.6 162.4,710.6 163.6,710.6 164.8,710.6 166.0,710.5 167.2,710.5 168.4,710.5 169.6,710.5 170.8,710.5 172.0,710.5 173.2,710.5 174.4,710.5 175.6,710.5 176.8,710.6 178.0,710.5 179.2,710.4 180.4,710.5 181.6,710.6 182.8,710.6 184.0,710.6 185.2,710.6 186.4,710.4 187.6,710.5 188.8,710.5 190.0,710.5 191.2,710.5 192.4,710.5 193.6,710.5 194.8,710.4 196.0,710.6 197.2,710.5 198.4,710.5 199.6,710.6 200.8,710.5 202.0,710.5 203.2,710.4 204.4,710.5 205.6,710.5 206.8,710.4 208.0,710.4 209.2,710.4 210.4,710.5 211.6,710.5 212.8,710.4 214.0,710.4 215.2,710.3 216.4,710.4 217.6,710.4 218.8,710.3 220.0,710.4 221.2,710.5 222.4,710.4 223.6,710.3 224.8,710.4 226.0,710.4 227.2,710.3 228.4,710.4 229.6,710.3 230.8,710.3 232.0,710.4 233.2,710.4 234.4,710.4 235.6,710.3 236.8,710.2 238.0,710.2 239.2,710.3 240.4,710.4 241.6,710.2 242.8,710.2 244.0,710.3 245.2,710.3 246.4,710.0 247.6,710.2 248.8,710.2 250.0,710.3 251.2,710.2 252.4,710.1 253.6,710.2 254.8,710.2 256.0,710.3 257.2,710.2 258.4,710.1 259.6,710.1 260.8,710.3 262.0,710.1 263.2,710.0 264.4,710.0 265.6,710.1 266.8,710.2 268.0,710.2 269.2,710.0 270.4,710.0 271.6,710.1 272.8,710.2 274.0,710.2 275.2,710.2 276.4,710.2 277.6,710.2 278.8,710.0 280.0,710.0 281.2,710.0 282.4,710.0 283.6,710.0 284.8,710.0 286.0,710.3 287.2,710.3 288.4,710.1 289.6,710.1 290.8,710.0 292.0,710.0 293.2,709.9 294.4,709.9 295.6,710.0 296.8,710.0 298.0,710.1 299.2,710.0 300.4,710.0 301.6,710.1 302.8,709.7 304.0,709.9 305.2,709.9 306.4,710.0 307.6,710.0 308.8,709.8 310.0,709.7 311.2,709.5 312.4,709.4 313.6,709.7 314.8,709.6 316.0,709.3 317.2,709.4 318.4,709.3 319.6,709.4 320.8,709.6 322.0,709.4 323.2,709.3 324.4,709.3 325.6,709.4 326.8,709.3 328.0,709.3 329.2,709.5 330.4,709.4 331.6,709.2 332.8,709.2 334.0,709.2 335.2,709.0 336.4,709.0 337.6,709.0 338.8,708.8 340.0,709.1 341.2,709.1 342.4,709.0 343.6,709.0 344.8,708.8 346.0,708.8 347.2,708.6 348.4,708.8 349.6,708.6 350.8,708.9 352.0,709.0 353.2,709.0 354.4,708.8 355.6,708.7 356.8,708.8 358.0,709.1 359.2,708.6 360.4,708.5 361.6,708.6 362.8,708.8 364.0,708.9 365.2,709.0 366.4,708.7 367.6,709.0 368.8,708.8 370.0,708.4 371.2,708.7 372.4,708.4 373.6,708.0 374.8,708.0 376.0,708.2 377.2,708.2 378.4,708.2 379.6,708.3 380.8,708.1 382.0,708.1 383.2,708.4 384.4,708.2 385.6,707.9 386.8,707.7 388.0,708.0 389.2,707.5 390.4,707.5 391.6,707.9 392.8,708.1 394.0,708.1 395.2,707.8 396.4,708.1 397.6,708.4 398.8,708.2 400.0,708.0 401.2,708.2 402.4,708.3 403.6,708.4 404.8,708.3 406.0,707.7 407.2,707.2 408.4,707.1 409.6,707.1 410.8,707.6 412.0,708.1 413.2,707.7 414.4,707.5 415.6,707.4 416.8,707.2 418.0,706.1 419.2,707.6 420.4,707.9 421.6,707.5 422.8,707.4 424.0,707.1 425.2,706.2 426.4,705.9 427.6,706.9 428.8,706.6 430.0,706.3 431.2,706.5 432.4,706.6 433.6,706.9 434.8,706.7 436.0,705.7 437.2,706.0 438.4,706.6 439.6,706.1 440.8,705.5 442.0,705.6 443.2,706.0 444.4,705.7 445.6,706.4 446.8,706.1 448.0,706.2 449.2,706.5 450.4,705.9 451.6,706.0 452.8,706.1 454.0,705.5 455.2,706.0 456.4,706.8 457.6,706.3 458.8,705.9 460.0,705.1 461.2,705.1 462.4,705.0 463.6,704.6 464.8,704.9 466.0,704.4 467.2,704.1 468.4,704.7 469.6,704.8 470.8,704.5 472.0,704.7 473.2,703.6 474.4,704.6 475.6,704.8 476.8,704.2 478.0,703.8 479.2,704.6 480.4,705.4 481.6,704.4 482.8,705.5 484.0,704.1 485.2,703.8 486.4,705.5 487.6,704.9 488.8,704.8 490.0,703.4 491.2,704.5 492.4,702.5 493.6,699.8 494.8,703.8 496.0,703.9 497.2,703.5 498.4,703.6 499.6,704.7 500.8,704.3 502.0,702.4 503.2,702.4 504.4,702.0 505.6,703.1 506.8,702.5 508.0,699.4 509.2,702.5 510.4,703.2 511.6,701.7 512.8,702.1 514.0,702.3 515.2,702.3 516.4,702.8 517.6,701.6 518.8,700.0 520.0,701.3 521.2,703.4 522.4,702.7 523.6,702.4 524.8,701.5 526.0,701.0 527.2,700.0 528.4,701.0 529.6,701.0 530.8,700.9 532.0,700.4 533.2,699.7 534.4,699.5 535.6,699.3 536.8,700.1 538.0,699.4 539.2,700.3 540.4,700.9 541.6,700.7 542.8,701.1 544.0,701.7 545.2,701.7 546.4,698.3 547.6,699.7 548.8,700.0 550.0,698.5 551.2,697.5 552.4,698.3 553.6,701.4 554.8,700.0 556.0,697.7 557.2,696.2 558.4,696.2 559.6,697.2 560.8,701.2 562.0,703.3 563.2,700.3 564.4,698.3 565.6,693.1 566.8,699.9 568.0,700.4 569.2,700.9 570.4,700.5 571.6,698.6 572.8,697.7 574.0,699.0 575.2,698.1 576.4,697.3 577.6,696.6 578.8,696.4 580.0,696.2 581.2,698.1 582.4,695.8 583.6,695.4 584.8,696.6 586.0,696.7 587.2,696.3 588.4,697.1 589.6,695.2 590.8,696.1 592.0,695.9 593.2,696.1 594.4,697.3 595.6,697.3 596.8,695.5 598.0,693.1 599.2,696.0 600.4,696.1 601.6,696.0 602.8,690.4 604.0,694.7 605.2,691.7 606.4,691.0 607.6,692.5 608.8,693.9 610.0,693.7 611.2,693.4 612.4,692.8 613.6,691.5 614.8,692.6 616.0,692.5 617.2,693.1 618.4,692.5 619.6,692.7 620.8,691.8 622.0,690.1 623.2,689.7 624.4,689.6 625.6,689.5 626.8,691.3 628.0,691.6 629.2,691.0 630.4,690.0 631.6,690.5 632.8,692.7 634.0,693.1 635.2,691.6 636.4,688.2 637.6,692.0 638.8,692.9 640.0,691.6 641.2,691.1 642.4,692.5 643.6,687.5 644.8,686.3 646.0,690.6 647.2,686.7 648.4,689.9 649.6,691.7 650.8,691.2 652.0,691.8 653.2,687.0 654.4,687.5 655.6,690.1 656.8,690.3 658.0,692.4 659.2,689.5 660.4,688.9 661.6,690.0 662.8,689.1 664.0,687.7 665.2,685.4 666.4,684.3 667.6,688.1 668.8,688.8 670.0,686.2 671.2,688.0 672.4,687.5 673.6,683.1 674.8,681.2 676.0,684.9 677.2,686.4 678.4,686.4 679.6,688.5 680.8,686.8 682.0,687.4 683.2,679.3 684.4,682.6 685.6,684.0 686.8,685.9 688.0,690.0 689.2,684.0 690.4,681.1 691.6,686.6 692.8,685.4 694.0,677.6 695.2,687.3 696.4,683.0 697.6,680.8 698.8,681.6 700.0,684.2 701.2,684.1 702.4,685.7 703.6,683.2 704.8,682.5 706.0,684.8 707.2,682.2 708.4,685.4 709.6,688.9 710.8,687.6 712.0,687.2 713.2,687.4 714.4,688.0 715.6,684.4 716.8,683.7 718.0,684.0 719.2,685.4 720.4,678.5 721.6,681.9 722.8,683.4 724.0,686.2 725.2,685.9 726.4,682.8 727.6,680.0 728.8,680.1 730.0,683.8 731.2,687.4 732.4,689.2 733.6,687.2 734.8,683.1 736.0,683.0 737.2,685.3 738.4,684.6 739.6,683.8 740.8,680.1 742.0,681.4 743.2,682.1 744.4,683.8 745.6,684.0 746.8,683.0 748.0,683.3 749.2,687.0 750.4,681.1 751.6,683.9 752.8,687.4 754.0,685.8 755.2,683.0 756.4,678.7 757.6,677.5 758.8,683.4 760.0,689.9 761.2,686.5 762.4,682.6 763.6,685.0 764.8,681.1 766.0,682.0 767.2,682.6 768.4,682.5 769.6,685.8 770.8,681.4 772.0,684.6 773.2,681.5 774.4,678.3 775.6,679.4 776.8,679.2 778.0,684.8 779.2,683.2 780.4,681.0 781.6,682.5 782.8,680.4 784.0,676.8 785.2,672.1 786.4,675.2 787.6,681.3 788.8,673.2 790.0,674.4 791.2,676.3 792.4,677.2 793.6,674.7 794.8,677.8 796.0,681.1 797.2,680.3 798.4,677.4 799.6,676.2 800.8,678.1 802.0,680.4 803.2,683.9 804.4,685.0 805.6,681.2 806.8,680.3 808.0,682.7 809.2,682.9 810.4,680.8 811.6,678.3 812.8,680.9 814.0,679.0 815.2,674.5 816.4,680.5 817.6,677.1 818.8,673.5 820.0,677.2 821.2,679.2 822.4,678.7 823.6,675.0 824.8,675.7 826.0,673.3 827.2,676.5 828.4,681.3 829.6,673.0 830.8,664.5 832.0,674.5 833.2,673.5 834.4,679.9 835.6,678.0 836.8,680.1 838.0,677.2 839.2,677.0 840.4,683.6 841.6,674.2 842.8,666.9 844.0,672.7 845.2,669.4 846.4,661.1 847.6,670.6 848.8,670.0 850.0,666.8 851.2,670.0 852.4,669.0 853.6,667.7 854.8,670.5 856.0,665.2 857.2,660.6 858.4,665.8 859.6,660.8 860.8,662.5 862.0,665.1 863.2,661.8 864.4,663.7 865.6,664.0 866.8,660.0 868.0,661.6 869.2,661.2 870.4,671.6 871.6,666.0 872.8,662.9 874.0,666.2 875.2,666.1 876.4,669.3 877.6,671.6 878.8,668.1 880.0,657.9 881.2,666.9 882.4,665.8 883.6,655.7 884.8,652.5 886.0,660.3 887.2,656.1 888.4,658.7 889.6,654.1 890.8,654.8 892.0,660.5 893.2,662.7 894.4,662.7 895.6,659.0 896.8,655.1 898.0,650.8 899.2,657.0 900.4,649.6 901.6,643.7 902.8,652.0 904.0,644.9 905.2,648.1 906.4,654.3 907.6,667.5 908.8,664.1 910.0,653.7 911.2,641.0 912.4,642.5 913.6,642.7 914.8,655.2 916.0,667.4 917.2,663.9 918.4,644.8 919.6,649.6 920.8,652.0 922.0,644.7 923.2,653.7 924.4,640.3 925.6,636.4 926.8,650.7 928.0,650.5 929.2,634.8 930.4,644.4 931.6,643.0 932.8,646.1 934.0,635.9 935.2,633.6 936.4,639.3 937.6,640.1 938.8,638.7 940.0,655.3 941.2,653.7 942.4,647.6 943.6,638.3 944.8,627.4 946.0,629.9 947.2,623.7 948.4,644.4 949.6,628.1 950.8,620.6 952.0,631.7 953.2,642.8 954.4,634.8 955.6,633.1 956.8,628.9 958.0,616.5 959.2,612.0 960.4,623.5 961.6,625.7 962.8,625.6 964.0,617.2 965.2,618.4 966.4,623.7 967.6,616.7 968.8,602.0 970.0,617.1 971.2,619.2 972.4,596.1 973.6,616.5 974.8,622.9 976.0,617.2 977.2,620.5 978.4,615.3 979.6,614.6 980.8,627.5 982.0,634.0 983.2,606.1 984.4,621.9 985.6,612.0 986.8,620.3 988.0,599.8 989.2,597.9 990.4,614.2 991.6,602.8 992.8,604.1 994.0,622.0 995.2,624.6 996.4,611.4 997.6,598.6 998.8,588.9 1000.0,594.4 1001.2,591.5 1002.4,601.7 1003.6,612.9 1004.8,597.6 1006.0,605.8 1007.2,616.0 1008.4,586.3 1009.6,587.0 1010.8,588.3 1012.0,618.6 1013.2,614.0 1014.4,607.6 1015.6,610.3 1016.8,623.9 1018.0,629.4 1019.2,604.0 1020.4,615.1 1021.6,618.3 1022.8,620.6 1024.0,616.6 1025.2,593.8 1026.4,602.5 1027.6,619.2 1028.8,618.5 1030.0,604.2 1031.2,594.4 1032.4,583.4 1033.6,601.6 1034.8,600.9 1036.0,599.4 1037.2,608.1 1038.4,608.7 1039.6,589.9 1040.8,598.1 1042.0,595.5 1043.2,586.1 1044.4,591.7 1045.6,592.8 1046.8,569.9 1048.0,611.1 1049.2,618.4 1050.4,625.5 1051.6,651.2 1051.6,673.7 1050.4,653.5 1049.2,645.6 1048.0,650.1 1046.8,615.9 1045.6,634.7 1044.4,627.7 1043.2,623.0 1042.0,639.7 1040.8,640.9 1039.6,630.0 1038.4,649.5 1037.2,642.5 1036.0,641.0 1034.8,641.8 1033.6,637.3 1032.4,615.2 1031.2,631.6 1030.0,644.3 1028.8,652.7 1027.6,648.7 1026.4,637.3 1025.2,635.6 1024.0,648.0 1022.8,650.9 1021.6,650.5 1020.4,649.8 1019.2,642.5 1018.0,655.3 1016.8,653.1 1015.6,647.5 1014.4,645.8 1013.2,649.5 1012.0,657.4 1010.8,636.4 1009.6,627.4 1008.4,621.1 1007.2,651.4 1006.0,642.5 1004.8,637.1 1003.6,648.0 1002.4,635.2 1001.2,633.5 1000.0,641.3 998.8,638.2 997.6,639.1 996.4,647.1 995.2,659.9 994.0,650.9 992.8,635.4 991.6,635.9 990.4,645.3 989.2,637.3 988.0,651.9 986.8,655.3 985.6,645.7 984.4,654.8 983.2,639.4 982.0,660.0 980.8,654.7 979.6,652.0 978.4,658.5 977.2,659.9 976.0,653.7 974.8,660.6 973.6,651.9 972.4,639.8 971.2,650.2 970.0,646.7 968.8,636.7 967.6,650.3 966.4,656.6 965.2,649.3 964.0,649.2 962.8,655.1 961.6,655.2 960.4,655.5 959.2,646.7 958.0,648.0 956.8,659.5 955.6,665.0 954.4,663.5 953.2,666.8 952.0,660.3 950.8,647.6 949.6,651.3 948.4,667.0 947.2,663.0 946.0,655.0 944.8,647.1 943.6,662.6 942.4,665.4 941.2,670.5 940.0,676.2 938.8,669.1 937.6,671.0 936.4,669.8 935.2,664.6 934.0,663.7 932.8,670.4 931.6,666.4 930.4,670.4 929.2,667.0 928.0,674.2 926.8,672.0 925.6,659.9 924.4,662.9 923.2,673.7 922.0,668.8 920.8,674.8 919.6,670.0 918.4,669.2 917.2,685.9 916.0,688.8 914.8,675.2 913.6,665.7 912.4,664.4 911.2,660.2 910.0,671.7 908.8,682.5 907.6,687.7 906.4,677.9 905.2,665.7 904.0,662.8 902.8,673.2 901.6,664.7 900.4,670.3 899.2,676.4 898.0,670.7 896.8,677.1 895.6,675.3 894.4,677.6 893.2,677.4 892.0,678.5 890.8,675.6 889.6,675.4 888.4,678.5 887.2,675.9 886.0,683.3 884.8,676.4 883.6,678.8 882.4,681.9 881.2,682.2 880.0,676.8 878.8,683.8 877.6,684.7 876.4,685.3 875.2,683.3 874.0,683.5 872.8,680.6 871.6,683.5 870.4,688.4 869.2,679.3 868.0,674.9 866.8,675.3 865.6,679.9 864.4,680.4 863.2,678.2 862.0,682.6 860.8,682.1 859.6,679.3 858.4,683.7 857.2,677.4 856.0,679.0 854.8,687.9 853.6,685.4 852.4,684.9 851.2,687.5 850.0,681.2 848.8,682.6 847.6,686.5 846.4,679.7 845.2,684.3 844.0,685.1 842.8,679.6 841.6,685.9 840.4,696.8 839.2,695.0 838.0,689.3 836.8,691.7 835.6,690.2 834.4,691.8 833.2,687.2 832.0,687.6 830.8,678.0 829.6,686.1 828.4,692.8 827.2,687.2 826.0,684.9 824.8,689.8 823.6,688.4 822.4,691.1 821.2,691.6 820.0,692.1 818.8,688.0 817.6,685.3 816.4,686.8 815.2,684.4 814.0,688.2 812.8,692.4 811.6,692.0 810.4,693.7 809.2,695.4 808.0,695.7 806.8,693.8 805.6,691.5 804.4,694.0 803.2,695.1 802.0,690.4 800.8,689.4 799.6,688.9 798.4,688.9 797.2,691.0 796.0,693.0 794.8,691.5 793.6,687.7 792.4,689.5 791.2,691.0 790.0,689.1 788.8,683.1 787.6,690.6 786.4,687.8 785.2,687.0 784.0,688.6 782.8,693.4 781.6,695.5 780.4,693.1 779.2,694.3 778.0,695.0 776.8,690.0 775.6,689.5 774.4,690.4 773.2,691.4 772.0,694.8 770.8,691.9 769.6,695.1 768.4,692.1 767.2,692.1 766.0,691.2 764.8,690.5 763.6,694.4 762.4,690.8 761.2,696.2 760.0,696.4 758.8,691.2 757.6,688.5 756.4,688.4 755.2,691.5 754.0,695.8 752.8,695.0 751.6,693.8 750.4,691.2 749.2,694.2 748.0,692.2 746.8,692.2 745.6,692.1 744.4,693.3 743.2,693.1 742.0,690.8 740.8,687.4 739.6,690.7 738.4,691.5 737.2,694.3 736.0,693.0 734.8,693.0 733.6,695.8 732.4,697.2 731.2,696.4 730.0,694.0 728.8,693.5 727.6,691.2 726.4,691.3 725.2,695.9 724.0,695.4 722.8,692.6 721.6,691.1 720.4,687.3 719.2,695.1 718.0,694.0 716.8,694.5 715.6,692.9 714.4,695.5 713.2,694.8 712.0,696.0 710.8,696.5 709.6,699.1 708.4,695.8 707.2,693.1 706.0,695.4 704.8,692.7 703.6,694.3 702.4,697.0 701.2,693.7 700.0,693.7 698.8,692.9 697.6,690.6 696.4,692.6 695.2,696.7 694.0,686.2 692.8,693.2 691.6,694.7 690.4,691.4 689.2,694.0 688.0,699.9 686.8,697.1 685.6,694.4 684.4,691.9 683.2,690.5 682.0,695.9 680.8,697.4 679.6,698.9 678.4,695.8 677.2,695.4 676.0,694.1 674.8,691.4 673.6,692.7 672.4,696.0 671.2,696.5 670.0,695.8 668.8,697.5 667.6,696.6 666.4,693.2 665.2,693.3 664.0,695.7 662.8,698.2 661.6,699.4 660.4,696.1 659.2,697.6 658.0,699.9 656.8,698.7 655.6,698.1 654.4,695.6 653.2,695.1 652.0,699.0 650.8,698.6 649.6,698.6 648.4,697.7 647.2,695.3 646.0,697.6 644.8,694.0 643.6,695.9 642.4,700.1 641.2,698.7 640.0,698.3 638.8,700.6 637.6,700.6 636.4,699.2 635.2,700.4 634.0,699.9 632.8,700.7 631.6,698.5 630.4,697.0 629.2,698.8 628.0,699.6 626.8,698.9 625.6,697.3 624.4,696.1 623.2,696.1 622.0,696.7 620.8,699.4 619.6,699.3 618.4,698.5 617.2,699.6 616.0,700.3 614.8,701.1 613.6,700.3 612.4,699.7 611.2,700.7 610.0,699.8 608.8,699.3 607.6,699.0 606.4,698.0 605.2,699.6 604.0,701.0 602.8,696.7 601.6,701.2 600.4,701.7 599.2,703.3 598.0,700.2 596.8,701.0 595.6,702.7 594.4,703.1 593.2,701.2 592.0,701.1 590.8,701.8 589.6,701.7 588.4,702.8 587.2,701.4 586.0,700.9 584.8,701.3 583.6,700.6 582.4,701.3 581.2,703.1 580.0,701.9 578.8,701.6 577.6,702.3 576.4,702.4 575.2,702.6 574.0,702.2 572.8,702.5 571.6,703.1 570.4,703.2 569.2,704.4 568.0,703.4 566.8,702.9 565.6,697.6 564.4,702.7 563.2,703.4 562.0,705.8 560.8,704.8 559.6,701.8 558.4,700.7 557.2,701.2 556.0,702.6 554.8,704.5 553.6,706.0 552.4,704.1 551.2,703.0 550.0,702.8 548.8,703.6 547.6,703.2 546.4,703.8 545.2,706.5 544.0,705.7 542.8,705.1 541.6,705.1 540.4,704.5 539.2,703.8 538.0,703.3 536.8,704.2 535.6,703.8 534.4,703.2 533.2,704.0 532.0,704.5 530.8,704.3 529.6,703.7 528.4,703.3 527.2,703.1 526.0,704.4 524.8,704.8 523.6,705.6 522.4,706.1 521.2,707.0 520.0,704.3 518.8,702.9 517.6,704.7 516.4,705.8 515.2,705.3 514.0,704.8 512.8,705.3 511.6,705.8 510.4,706.4 509.2,705.7 508.0,703.8 506.8,705.1 505.6,705.9 504.4,704.9 503.2,705.5 502.0,705.9 500.8,707.1 499.6,707.5 498.4,706.5 497.2,706.2 496.0,706.3 494.8,706.2 493.6,702.9 492.4,705.6 491.2,707.0 490.0,706.6 488.8,706.7 487.6,707.0 486.4,707.6 485.2,706.1 484.0,706.2 482.8,707.3 481.6,706.3 480.4,707.0 479.2,706.8 478.0,707.0 476.8,706.8 475.6,706.9 474.4,706.5 473.2,705.7 472.0,707.3 470.8,706.9 469.6,707.0 468.4,706.9 467.2,706.3 466.0,706.7 464.8,707.1 463.6,707.0 462.4,707.2 461.2,707.2 460.0,707.1 458.8,707.4 457.6,708.1 456.4,708.6 455.2,708.0 454.0,707.6 452.8,708.1 451.6,707.6 450.4,707.4 449.2,708.1 448.0,707.9 446.8,707.8 445.6,708.1 444.4,707.6 443.2,707.9 442.0,707.8 440.8,707.4 439.6,707.8 438.4,708.2 437.2,707.7 436.0,707.2 434.8,707.7 433.6,708.2 432.4,707.9 431.2,707.8 430.0,707.9 428.8,708.1 427.6,708.3 426.4,707.8 425.2,708.0 424.0,708.6 422.8,708.7 421.6,708.8 420.4,709.2 419.2,709.0 418.0,707.7 416.8,708.6 415.6,708.8 414.4,708.6 413.2,708.9 412.0,709.3 410.8,708.9 409.6,708.5 408.4,708.6 407.2,708.3 406.0,708.6 404.8,709.2 403.6,709.5 402.4,709.5 401.2,709.4 400.0,709.3 398.8,709.2 397.6,709.6 396.4,709.2 395.2,709.1 394.0,709.1 392.8,709.0 391.6,709.1 390.4,708.8 389.2,708.6 388.0,709.0 386.8,709.0 385.6,708.9 384.4,709.1 383.2,709.3 382.0,709.2 380.8,709.2 379.6,709.2 378.4,709.1 377.2,709.1 376.0,709.2 374.8,709.1 373.6,709.1 372.4,709.3 371.2,709.6 370.0,709.3 368.8,709.4 367.6,709.6 366.4,709.3 365.2,709.6 364.0,709.6 362.8,709.7 361.6,709.5 360.4,709.3 359.2,709.7 358.0,709.8 356.8,709.7 355.6,709.6 354.4,709.7 353.2,709.7 352.0,709.8 350.8,709.7 349.6,709.6 348.4,709.8 347.2,709.6 346.0,709.6 344.8,709.6 343.6,709.7 342.4,709.8 341.2,709.8 340.0,709.7 338.8,709.7 337.6,709.6 336.4,709.6 335.2,709.7 334.0,709.8 332.8,709.9 331.6,710.0 330.4,710.0 329.2,710.1 328.0,709.9 326.8,709.9 325.6,709.8 324.4,709.8 323.2,709.9 322.0,710.0 320.8,710.0 319.6,709.7 318.4,709.7 317.2,709.8 316.0,709.9 314.8,710.1 313.6,710.2 312.4,710.0 311.2,710.0 310.0,710.1 308.8,710.3 307.6,710.4 306.4,710.3 305.2,710.3 304.0,710.3 302.8,710.2 301.6,710.5 300.4,710.4 299.2,710.5 298.0,710.4 296.8,710.4 295.6,710.3 294.4,710.2 293.2,710.2 292.0,710.3 290.8,710.3 289.6,710.4 288.4,710.4 287.2,710.5 286.0,710.6 284.8,710.4 283.6,710.4 282.4,710.4 281.2,710.4 280.0,710.3 278.8,710.4 277.6,710.5 276.4,710.5 275.2,710.5 274.0,710.4 272.8,710.5 271.6,710.5 270.4,710.3 269.2,710.3 268.0,710.5 266.8,710.5 265.6,710.4 264.4,710.3 263.2,710.3 262.0,710.4 260.8,710.6 259.6,710.5 258.4,710.4 257.2,710.5 256.0,710.6 254.8,710.5 253.6,710.5 252.4,710.5 251.2,710.5 250.0,710.6 248.8,710.6 247.6,710.5 246.4,710.4 245.2,710.6 244.0,710.5 242.8,710.4 241.6,710.5 240.4,710.6 239.2,710.5 238.0,710.4 236.8,710.4 235.6,710.5 234.4,710.6 233.2,710.6 232.0,710.6 230.8,710.5 229.6,710.6 228.4,710.6 227.2,710.6 226.0,710.6 224.8,710.6 223.6,710.6 222.4,710.6 221.2,710.6 220.0,710.5 218.8,710.5 217.6,710.6 216.4,710.6 215.2,710.6 214.0,710.6 212.8,710.6 211.6,710.6 210.4,710.6 209.2,710.6 208.0,710.7 206.8,710.7 205.6,710.7 204.4,710.7 203.2,710.6 202.0,710.7 200.8,710.7 199.6,710.7 198.4,710.7 197.2,710.7 196.0,710.7 194.8,710.6 193.6,710.6 192.4,710.6 191.2,710.6 190.0,710.6 188.8,710.7 187.6,710.7 186.4,710.6 185.2,710.8 184.0,710.8 182.8,710.7 181.6,710.7 180.4,710.7 179.2,710.7 178.0,710.7 176.8,710.7 175.6,710.7 174.4,710.7 173.2,710.7 172.0,710.7 170.8,710.7 169.6,710.7 168.4,710.7 167.2,710.7 166.0,710.7 164.8,710.7 163.6,710.8 162.4,710.8 161.2,710.8 160.0,710.8 158.8,710.8 157.6,710.8 156.4,710.7 155.2,710.8 154.0,710.8 152.8,710.7 151.6,710.7 150.4,710.7 149.2,710.7 148.0,710.7 146.8,710.7 145.6,710.7 144.4,710.7 143.2,710.7 142.0,710.7 140.8,710.8 139.6,710.7 138.4,710.7 137.2,710.7 136.0,710.8 134.8,710.8 133.6,710.7 132.4,710.7 131.2,710.7 130.0,710.7" fill="#c6e3f2"/><polygon points="130.0,710.4 131.2,710.4 132.4,710.4 133.6,710.4 134.8,710.5 136.0,710.5 137.2,710.4 138.4,710.4 139.6,710.4 140.8,710.5 142.0,710.4 143.2,710.3 144.4,710.3 145.6,710.4 146.8,710.4 148.0,710.4 149.2,710.4 150.4,710.4 151.6,710.4 152.8,710.4 154.0,710.5 155.2,710.5 156.4,710.4 157.6,710.4 158.8,710.5 160.0,710.5 161.2,710.5 162.4,710.4 163.6,710.5 164.8,710.4 166.0,710.4 167.2,710.4 168.4,710.4 169.6,710.4 170.8,710.4 172.0,710.4 173.2,710.3 174.4,710.4 175.6,710.4 176.8,710.4 178.0,710.4 179.2,710.3 180.4,710.3 181.6,710.4 182.8,710.4 184.0,710.4 185.2,710.4 186.4,710.3 187.6,710.3 188.8,710.4 190.0,710.3 191.2,710.3 192.4,710.3 193.6,710.3 194.8,710.3 196.0,710.4 197.2,710.4 198.4,710.4 199.6,710.4 200.8,710.4 202.0,710.3 203.2,710.3 204.4,710.4 205.6,710.3 206.8,710.3 208.0,710.3 209.2,710.3 210.4,710.3 211.6,710.3 212.8,710.3 214.0,710.2 215.2,710.2 216.4,710.2 217.6,710.2 218.8,710.2 220.0,710.2 221.2,710.3 222.4,710.2 223.6,710.1 224.8,710.2 226.0,710.2 227.2,710.2 228.4,710.3 229.6,710.2 230.8,710.1 232.0,710.2 233.2,710.2 234.4,710.3 235.6,710.2 236.8,710.0 238.0,710.0 239.2,710.1 240.4,710.2 241.6,710.1 242.8,710.0 244.0,710.1 245.2,710.1 246.4,709.9 247.6,710.0 248.8,710.1 250.0,710.1 251.2,710.1 252.4,710.0 253.6,710.0 254.8,710.1 256.0,710.2 257.2,710.1 258.4,709.9 259.6,709.9 260.8,710.1 262.0,709.9 263.2,709.8 264.4,709.9 265.6,709.9 266.8,710.0 268.0,710.0 269.2,709.9 270.4,709.8 271.6,710.0 272.8,710.0 274.0,710.0 275.2,710.0 276.4,710.0 277.6,710.0 278.8,709.9 280.0,709.8 281.2,709.8 282.4,709.9 283.6,709.8 284.8,709.8 286.0,710.1 287.2,710.1 288.4,709.9 289.6,709.9 290.8,709.8 292.0,709.8 293.2,709.7 294.4,709.7 295.6,709.8 296.8,709.8 298.0,709.9 299.2,709.8 300.4,709.8 301.6,709.8 302.8,709.5 304.0,709.7 305.2,709.7 306.4,709.8 307.6,709.7 308.8,709.5 310.0,709.4 311.2,709.2 312.4,709.2 313.6,709.5 314.8,709.4 316.0,709.0 317.2,709.1 318.4,708.9 319.6,709.1 320.8,709.4 322.0,709.2 323.2,709.0 324.4,709.0 325.6,709.1 326.8,709.0 328.0,708.9 329.2,709.2 330.4,709.0 331.6,708.8 332.8,708.8 334.0,708.8 335.2,708.6 336.4,708.7 337.6,708.6 338.8,708.4 340.0,708.7 341.2,708.8 342.4,708.7 343.6,708.6 344.8,708.5 346.0,708.5 347.2,708.3 348.4,708.3 349.6,708.2 350.8,708.4 352.0,708.6 353.2,708.6 354.4,708.5 355.6,708.3 356.8,708.3 358.0,708.6 359.2,708.1 360.4,708.0 361.6,708.3 362.8,708.4 364.0,708.5 365.2,708.4 366.4,708.3 367.6,708.6 368.8,708.3 370.0,708.0 371.2,708.2 372.4,707.9 373.6,707.4 374.8,707.4 376.0,707.6 377.2,707.6 378.4,707.7 379.6,707.8 380.8,707.7 382.0,707.7 383.2,707.9 384.4,707.6 385.6,707.4 386.8,707.2 388.0,707.5 389.2,707.0 390.4,707.0 391.6,707.2 392.8,707.4 394.0,707.5 395.2,707.3 396.4,707.5 397.6,707.7 398.8,707.5 400.0,707.2 401.2,707.6 402.4,707.7 403.6,707.8 404.8,707.6 406.0,707.0 407.2,706.6 408.4,706.4 409.6,706.5 410.8,707.1 412.0,707.5 413.2,707.1 414.4,706.9 415.6,706.8 416.8,706.4 418.0,705.4 419.2,706.8 420.4,707.1 421.6,706.7 422.8,706.6 424.0,706.6 425.2,705.5 426.4,705.1 427.6,706.1 428.8,705.6 430.0,705.4 431.2,705.8 432.4,705.7 433.6,705.6 434.8,705.8 436.0,704.8 437.2,705.3 438.4,705.8 439.6,705.2 440.8,704.6 442.0,704.6 443.2,704.9 444.4,704.5 445.6,705.6 446.8,705.4 448.0,705.3 449.2,705.3 450.4,705.0 451.6,704.9 452.8,705.2 454.0,704.7 455.2,704.9 456.4,705.5 457.6,705.0 458.8,705.0 460.0,704.3 461.2,704.0 462.4,704.0 463.6,703.5 464.8,704.0 466.0,703.5 467.2,703.1 468.4,702.8 469.6,703.5 470.8,703.4 472.0,703.4 473.2,702.3 474.4,703.4 475.6,703.6 476.8,702.8 478.0,702.1 479.2,703.2 480.4,704.3 481.6,703.2 482.8,703.7 484.0,702.8 485.2,702.8 486.4,704.4 487.6,703.5 488.8,703.1 490.0,701.6 491.2,703.0 492.4,701.3 493.6,698.5 494.8,702.3 496.0,702.7 497.2,702.0 498.4,702.3 499.6,703.3 500.8,702.8 502.0,701.1 503.2,700.7 504.4,699.9 505.6,701.3 506.8,700.7 508.0,697.7 509.2,701.2 510.4,702.0 511.6,700.3 512.8,700.9 514.0,700.7 515.2,700.5 516.4,700.9 517.6,699.6 518.8,698.0 520.0,699.4 521.2,701.3 522.4,700.6 523.6,700.4 524.8,699.6 526.0,699.0 527.2,698.2 528.4,698.9 529.6,698.8 530.8,699.2 532.0,698.9 533.2,698.1 534.4,697.6 535.6,697.2 536.8,697.7 538.0,696.7 539.2,697.7 540.4,698.5 541.6,698.9 542.8,699.4 544.0,699.5 545.2,699.4 546.4,696.2 547.6,697.7 548.8,698.1 550.0,697.1 551.2,695.5 552.4,696.0 553.6,699.3 554.8,698.1 556.0,695.5 557.2,693.6 558.4,693.2 559.6,694.4 560.8,698.6 562.0,701.1 563.2,698.4 564.4,696.3 565.6,691.2 566.8,697.6 568.0,697.6 569.2,696.9 570.4,697.7 571.6,696.0 572.8,694.9 574.0,696.7 575.2,696.2 576.4,695.0 577.6,694.2 578.8,694.5 580.0,694.3 581.2,696.4 582.4,693.5 583.6,692.5 584.8,693.9 586.0,693.6 587.2,693.4 588.4,694.8 589.6,693.1 590.8,693.2 592.0,692.9 593.2,693.1 594.4,694.6 595.6,694.1 596.8,692.7 598.0,690.3 599.2,693.8 600.4,693.6 601.6,692.9 602.8,687.9 604.0,692.5 605.2,689.3 606.4,688.4 607.6,690.0 608.8,690.9 610.0,689.9 611.2,689.4 612.4,689.2 613.6,687.4 614.8,688.7 616.0,689.0 617.2,689.2 618.4,688.0 619.6,688.1 620.8,687.6 622.0,686.4 623.2,683.9 624.4,685.6 625.6,685.7 626.8,687.2 628.0,687.1 629.2,687.5 630.4,686.6 631.6,687.1 632.8,688.4 634.0,688.2 635.2,686.8 636.4,683.9 637.6,687.9 638.8,687.6 640.0,687.2 641.2,686.9 642.4,688.2 643.6,683.2 644.8,682.2 646.0,686.5 647.2,683.4 648.4,686.5 649.6,688.3 650.8,687.4 652.0,687.8 653.2,682.3 654.4,682.6 655.6,686.4 656.8,686.6 658.0,687.8 659.2,684.0 660.4,683.7 661.6,685.1 662.8,684.7 664.0,683.4 665.2,680.7 666.4,678.3 667.6,683.5 668.8,684.9 670.0,682.9 671.2,683.2 672.4,683.5 673.6,679.2 674.8,676.9 676.0,679.8 677.2,682.1 678.4,681.4 679.6,683.1 680.8,681.4 682.0,681.9 683.2,674.8 684.4,678.2 685.6,678.8 686.8,681.4 688.0,685.8 689.2,680.0 690.4,675.6 691.6,681.2 692.8,681.2 694.0,673.9 695.2,682.5 696.4,677.5 697.6,674.5 698.8,675.0 700.0,678.6 701.2,679.2 702.4,680.9 703.6,678.7 704.8,678.6 706.0,680.6 707.2,677.7 708.4,681.7 709.6,684.7 710.8,682.0 712.0,682.0 713.2,681.6 714.4,681.9 715.6,678.7 716.8,677.9 718.0,679.0 719.2,680.8 720.4,673.5 721.6,676.6 722.8,678.1 724.0,681.0 725.2,680.6 726.4,676.9 727.6,674.7 728.8,674.9 730.0,678.2 731.2,682.5 732.4,683.7 733.6,680.8 734.8,677.0 736.0,676.7 737.2,679.9 738.4,679.7 739.6,678.8 740.8,675.2 742.0,676.5 743.2,676.9 744.4,677.7 745.6,678.2 746.8,677.8 748.0,677.6 749.2,679.4 750.4,674.6 751.6,677.9 752.8,681.1 754.0,680.8 755.2,677.0 756.4,673.9 757.6,673.0 758.8,676.3 760.0,685.0 761.2,681.3 762.4,676.7 763.6,678.6 764.8,675.1 766.0,675.8 767.2,675.6 768.4,675.6 769.6,680.5 770.8,676.7 772.0,679.9 773.2,675.3 774.4,671.6 775.6,674.5 776.8,673.6 778.0,677.9 779.2,677.0 780.4,675.6 781.6,677.6 782.8,674.9 784.0,669.1 785.2,665.4 786.4,669.3 787.6,675.2 788.8,666.8 790.0,669.4 791.2,672.2 792.4,672.0 793.6,668.0 794.8,669.8 796.0,674.7 797.2,674.9 798.4,671.9 799.6,671.0 800.8,672.8 802.0,674.2 803.2,677.5 804.4,678.9 805.6,674.1 806.8,673.7 808.0,676.4 809.2,676.8 810.4,674.1 811.6,671.1 812.8,673.9 814.0,672.8 815.2,667.7 816.4,674.1 817.6,670.3 818.8,665.6 820.0,669.1 821.2,672.7 822.4,673.0 823.6,668.0 824.8,667.7 826.0,665.6 827.2,668.0 828.4,674.9 829.6,664.8 830.8,655.6 832.0,666.2 833.2,666.3 834.4,671.3 835.6,668.8 836.8,671.4 838.0,669.8 839.2,667.5 840.4,674.9 841.6,666.1 842.8,660.0 844.0,666.1 845.2,662.3 846.4,654.6 847.6,662.9 848.8,662.5 850.0,660.5 851.2,662.0 852.4,659.8 853.6,659.7 854.8,664.2 856.0,658.1 857.2,652.4 858.4,659.0 859.6,650.7 860.8,653.3 862.0,656.9 863.2,653.8 864.4,653.9 865.6,653.3 866.8,650.9 868.0,654.9 869.2,654.9 870.4,664.4 871.6,659.4 872.8,654.4 874.0,657.2 875.2,659.9 876.4,661.3 877.6,662.3 878.8,659.2 880.0,648.0 881.2,656.2 882.4,653.6 883.6,642.1 884.8,641.6 886.0,652.0 887.2,648.5 888.4,650.5 889.6,643.5 890.8,643.7 892.0,649.4 893.2,651.1 894.4,649.5 895.6,645.8 896.8,642.9 898.0,640.8 899.2,647.7 900.4,641.1 901.6,634.3 902.8,641.7 904.0,635.8 905.2,637.5 906.4,640.5 907.6,656.2 908.8,655.6 910.0,644.8 911.2,629.7 912.4,629.5 913.6,630.1 914.8,641.7 916.0,654.9 917.2,652.8 918.4,631.7 919.6,636.3 920.8,637.0 922.0,632.1 923.2,641.9 924.4,628.6 925.6,624.0 926.8,637.1 928.0,636.7 929.2,619.4 930.4,628.7 931.6,626.4 932.8,630.7 934.0,619.1 935.2,617.0 936.4,623.4 937.6,620.6 938.8,619.9 940.0,639.2 941.2,639.4 942.4,633.5 943.6,618.3 944.8,613.0 946.0,617.1 947.2,609.8 948.4,629.4 949.6,609.5 950.8,601.5 952.0,610.8 953.2,621.0 954.4,615.2 955.6,612.6 956.8,610.4 958.0,599.6 959.2,597.4 960.4,606.7 961.6,605.9 962.8,607.3 964.0,601.1 965.2,602.5 966.4,609.0 967.6,602.8 968.8,587.9 970.0,597.7 971.2,598.8 972.4,579.2 973.6,602.4 974.8,605.4 976.0,596.2 977.2,604.8 978.4,600.1 979.6,597.6 980.8,609.0 982.0,618.1 983.2,589.0 984.4,605.7 985.6,596.1 986.8,604.6 988.0,581.4 989.2,580.6 990.4,596.5 991.6,581.5 992.8,581.6 994.0,596.5 995.2,602.5 996.4,591.6 997.6,576.6 998.8,560.2 1000.0,569.7 1001.2,571.4 1002.4,582.0 1003.6,588.3 1004.8,577.0 1006.0,587.1 1007.2,597.5 1008.4,564.4 1009.6,562.2 1010.8,564.0 1012.0,595.4 1013.2,594.9 1014.4,593.6 1015.6,592.5 1016.8,603.5 1018.0,605.8 1019.2,577.1 1020.4,586.2 1021.6,601.3 1022.8,601.1 1024.0,595.3 1025.2,570.7 1026.4,582.3 1027.6,603.9 1028.8,601.5 1030.0,586.1 1031.2,578.7 1032.4,564.0 1033.6,579.4 1034.8,576.0 1036.0,573.5 1037.2,587.7 1038.4,587.2 1039.6,566.4 1040.8,573.3 1042.0,576.7 1043.2,567.9 1044.4,561.4 1045.6,563.9 1046.8,542.7 1048.0,571.2 1049.2,600.2 1050.4,612.6 1051.6,640.1 1051.6,651.2 1050.4,625.5 1049.2,618.4 1048.0,611.1 1046.8,569.9 1045.6,592.8 1044.4,591.7 1043.2,586.1 1042.0,595.5 1040.8,598.1 1039.6,589.9 1038.4,608.7 1037.2,608.1 1036.0,599.4 1034.8,600.9 1033.6,601.6 1032.4,583.4 1031.2,594.4 1030.0,604.2 1028.8,618.5 1027.6,619.2 1026.4,602.5 1025.2,593.8 1024.0,616.6 1022.8,620.6 1021.6,618.3 1020.4,615.1 1019.2,604.0 1018.0,629.4 1016.8,623.9 1015.6,610.3 1014.4,607.6 1013.2,614.0 1012.0,618.6 1010.8,588.3 1009.6,587.0 1008.4,586.3 1007.2,616.0 1006.0,605.8 1004.8,597.6 1003.6,612.9 1002.4,601.7 1001.2,591.5 1000.0,594.4 998.8,588.9 997.6,598.6 996.4,611.4 995.2,624.6 994.0,622.0 992.8,604.1 991.6,602.8 990.4,614.2 989.2,597.9 988.0,599.8 986.8,620.3 985.6,612.0 984.4,621.9 983.2,606.1 982.0,634.0 980.8,627.5 979.6,614.6 978.4,615.3 977.2,620.5 976.0,617.2 974.8,622.9 973.6,616.5 972.4,596.1 971.2,619.2 970.0,617.1 968.8,602.0 967.6,616.7 966.4,623.7 965.2,618.4 964.0,617.2 962.8,625.6 961.6,625.7 960.4,623.5 959.2,612.0 958.0,616.5 956.8,628.9 955.6,633.1 954.4,634.8 953.2,642.8 952.0,631.7 950.8,620.6 949.6,628.1 948.4,644.4 947.2,623.7 946.0,629.9 944.8,627.4 943.6,638.3 942.4,647.6 941.2,653.7 940.0,655.3 938.8,638.7 937.6,640.1 936.4,639.3 935.2,633.6 934.0,635.9 932.8,646.1 931.6,643.0 930.4,644.4 929.2,634.8 928.0,650.5 926.8,650.7 925.6,636.4 924.4,640.3 923.2,653.7 922.0,644.7 920.8,652.0 919.6,649.6 918.4,644.8 917.2,663.9 916.0,667.4 914.8,655.2 913.6,642.7 912.4,642.5 911.2,641.0 910.0,653.7 908.8,664.1 907.6,667.5 906.4,654.3 905.2,648.1 904.0,644.9 902.8,652.0 901.6,643.7 900.4,649.6 899.2,657.0 898.0,650.8 896.8,655.1 895.6,659.0 894.4,662.7 893.2,662.7 892.0,660.5 890.8,654.8 889.6,654.1 888.4,658.7 887.2,656.1 886.0,660.3 884.8,652.5 883.6,655.7 882.4,665.8 881.2,666.9 880.0,657.9 878.8,668.1 877.6,671.6 876.4,669.3 875.2,666.1 874.0,666.2 872.8,662.9 871.6,666.0 870.4,671.6 869.2,661.2 868.0,661.6 866.8,660.0 865.6,664.0 864.4,663.7 863.2,661.8 862.0,665.1 860.8,662.5 859.6,660.8 858.4,665.8 857.2,660.6 856.0,665.2 854.8,670.5 853.6,667.7 852.4,669.0 851.2,670.0 850.0,666.8 848.8,670.0 847.6,670.6 846.4,661.1 845.2,669.4 844.0,672.7 842.8,666.9 841.6,674.2 840.4,683.6 839.2,677.0 838.0,677.2 836.8,680.1 835.6,678.0 834.4,679.9 833.2,673.5 832.0,674.5 830.8,664.5 829.6,673.0 828.4,681.3 827.2,676.5 826.0,673.3 824.8,675.7 823.6,675.0 822.4,678.7 821.2,679.2 820.0,677.2 818.8,673.5 817.6,677.1 816.4,680.5 815.2,674.5 814.0,679.0 812.8,680.9 811.6,678.3 810.4,680.8 809.2,682.9 808.0,682.7 806.8,680.3 805.6,681.2 804.4,685.0 803.2,683.9 802.0,680.4 800.8,678.1 799.6,676.2 798.4,677.4 797.2,680.3 796.0,681.1 794.8,677.8 793.6,674.7 792.4,677.2 791.2,676.3 790.0,674.4 788.8,673.2 787.6,681.3 786.4,675.2 785.2,672.1 784.0,676.8 782.8,680.4 781.6,682.5 780.4,681.0 779.2,683.2 778.0,684.8 776.8,679.2 775.6,679.4 774.4,678.3 773.2,681.5 772.0,684.6 770.8,681.4 769.6,685.8 768.4,682.5 767.2,682.6 766.0,682.0 764.8,681.1 763.6,685.0 762.4,682.6 761.2,686.5 760.0,689.9 758.8,683.4 757.6,677.5 756.4,678.7 755.2,683.0 754.0,685.8 752.8,687.4 751.6,683.9 750.4,681.1 749.2,687.0 748.0,683.3 746.8,683.0 745.6,684.0 744.4,683.8 743.2,682.1 742.0,681.4 740.8,680.1 739.6,683.8 738.4,684.6 737.2,685.3 736.0,683.0 734.8,683.1 733.6,687.2 732.4,689.2 731.2,687.4 730.0,683.8 728.8,680.1 727.6,680.0 726.4,682.8 725.2,685.9 724.0,686.2 722.8,683.4 721.6,681.9 720.4,678.5 719.2,685.4 718.0,684.0 716.8,683.7 715.6,684.4 714.4,688.0 713.2,687.4 712.0,687.2 710.8,687.6 709.6,688.9 708.4,685.4 707.2,682.2 706.0,684.8 704.8,682.5 703.6,683.2 702.4,685.7 701.2,684.1 700.0,684.2 698.8,681.6 697.6,680.8 696.4,683.0 695.2,687.3 694.0,677.6 692.8,685.4 691.6,686.6 690.4,681.1 689.2,684.0 688.0,690.0 686.8,685.9 685.6,684.0 684.4,682.6 683.2,679.3 682.0,687.4 680.8,686.8 679.6,688.5 678.4,686.4 677.2,686.4 676.0,684.9 674.8,681.2 673.6,683.1 672.4,687.5 671.2,688.0 670.0,686.2 668.8,688.8 667.6,688.1 666.4,684.3 665.2,685.4 664.0,687.7 662.8,689.1 661.6,690.0 660.4,688.9 659.2,689.5 658.0,692.4 656.8,690.3 655.6,690.1 654.4,687.5 653.2,687.0 652.0,691.8 650.8,691.2 649.6,691.7 648.4,689.9 647.2,686.7 646.0,690.6 644.8,686.3 643.6,687.5 642.4,692.5 641.2,691.1 640.0,691.6 638.8,692.9 637.6,692.0 636.4,688.2 635.2,691.6 634.0,693.1 632.8,692.7 631.6,690.5 630.4,690.0 629.2,691.0 628.0,691.6 626.8,691.3 625.6,689.5 624.4,689.6 623.2,689.7 622.0,690.1 620.8,691.8 619.6,692.7 618.4,692.5 617.2,693.1 616.0,692.5 614.8,692.6 613.6,691.5 612.4,692.8 611.2,693.4 610.0,693.7 608.8,693.9 607.6,692.5 606.4,691.0 605.2,691.7 604.0,694.7 602.8,690.4 601.6,696.0 600.4,696.1 599.2,696.0 598.0,693.1 596.8,695.5 595.6,697.3 594.4,697.3 593.2,696.1 592.0,695.9 590.8,696.1 589.6,695.2 588.4,697.1 587.2,696.3 586.0,696.7 584.8,696.6 583.6,695.4 582.4,695.8 581.2,698.1 580.0,696.2 578.8,696.4 577.6,696.6 576.4,697.3 575.2,698.1 574.0,699.0 572.8,697.7 571.6,698.6 570.4,700.5 569.2,700.9 568.0,700.4 566.8,699.9 565.6,693.1 564.4,698.3 563.2,700.3 562.0,703.3 560.8,701.2 559.6,697.2 558.4,696.2 557.2,696.2 556.0,697.7 554.8,700.0 553.6,701.4 552.4,698.3 551.2,697.5 550.0,698.5 548.8,700.0 547.6,699.7 546.4,698.3 545.2,701.7 544.0,701.7 542.8,701.1 541.6,700.7 540.4,700.9 539.2,700.3 538.0,699.4 536.8,700.1 535.6,699.3 534.4,699.5 533.2,699.7 532.0,700.4 530.8,700.9 529.6,701.0 528.4,701.0 527.2,700.0 526.0,701.0 524.8,701.5 523.6,702.4 522.4,702.7 521.2,703.4 520.0,701.3 518.8,700.0 517.6,701.6 516.4,702.8 515.2,702.3 514.0,702.3 512.8,702.1 511.6,701.7 510.4,703.2 509.2,702.5 508.0,699.4 506.8,702.5 505.6,703.1 504.4,702.0 503.2,702.4 502.0,702.4 500.8,704.3 499.6,704.7 498.4,703.6 497.2,703.5 496.0,703.9 494.8,703.8 493.6,699.8 492.4,702.5 491.2,704.5 490.0,703.4 488.8,704.8 487.6,704.9 486.4,705.5 485.2,703.8 484.0,704.1 482.8,705.5 481.6,704.4 480.4,705.4 479.2,704.6 478.0,703.8 476.8,704.2 475.6,704.8 474.4,704.6 473.2,703.6 472.0,704.7 470.8,704.5 469.6,704.8 468.4,704.7 467.2,704.1 466.0,704.4 464.8,704.9 463.6,704.6 462.4,705.0 461.2,705.1 460.0,705.1 458.8,705.9 457.6,706.3 456.4,706.8 455.2,706.0 454.0,705.5 452.8,706.1 451.6,706.0 450.4,705.9 449.2,706.5 448.0,706.2 446.8,706.1 445.6,706.4 444.4,705.7 443.2,706.0 442.0,705.6 440.8,705.5 439.6,706.1 438.4,706.6 437.2,706.0 436.0,705.7 434.8,706.7 433.6,706.9 432.4,706.6 431.2,706.5 430.0,706.3 428.8,706.6 427.6,706.9 426.4,705.9 425.2,706.2 424.0,707.1 422.8,707.4 421.6,707.5 420.4,707.9 419.2,707.6 418.0,706.1 416.8,707.2 415.6,707.4 414.4,707.5 413.2,707.7 412.0,708.1 410.8,707.6 409.6,707.1 408.4,707.1 407.2,707.2 406.0,707.7 404.8,708.3 403.6,708.4 402.4,708.3 401.2,708.2 400.0,708.0 398.8,708.2 397.6,708.4 396.4,708.1 395.2,707.8 394.0,708.1 392.8,708.1 391.6,707.9 390.4,707.5 389.2,707.5 388.0,708.0 386.8,707.7 385.6,707.9 384.4,708.2 383.2,708.4 382.0,708.1 380.8,708.1 379.6,708.3 378.4,708.2 377.2,708.2 376.0,708.2 374.8,708.0 373.6,708.0 372.4,708.4 371.2,708.7 370.0,708.4 368.8,708.8 367.6,709.0 366.4,708.7 365.2,709.0 364.0,708.9 362.8,708.8 361.6,708.6 360.4,708.5 359.2,708.6 358.0,709.1 356.8,708.8 355.6,708.7 354.4,708.8 353.2,709.0 352.0,709.0 350.8,708.9 349.6,708.6 348.4,708.8 347.2,708.6 346.0,708.8 344.8,708.8 343.6,709.0 342.4,709.0 341.2,709.1 340.0,709.1 338.8,708.8 337.6,709.0 336.4,709.0 335.2,709.0 334.0,709.2 332.8,709.2 331.6,709.2 330.4,709.4 329.2,709.5 328.0,709.3 326.8,709.3 325.6,709.4 324.4,709.3 323.2,709.3 322.0,709.4 320.8,709.6 319.6,709.4 318.4,709.3 317.2,709.4 316.0,709.3 314.8,709.6 313.6,709.7 312.4,709.4 311.2,709.5 310.0,709.7 308.8,709.8 307.6,710.0 306.4,710.0 305.2,709.9 304.0,709.9 302.8,709.7 301.6,710.1 300.4,710.0 299.2,710.0 298.0,710.1 296.8,710.0 295.6,710.0 294.4,709.9 293.2,709.9 292.0,710.0 290.8,710.0 289.6,710.1 288.4,710.1 287.2,710.3 286.0,710.3 284.8,710.0 283.6,710.0 282.4,710.0 281.2,710.0 280.0,710.0 278.8,710.0 277.6,710.2 276.4,710.2 275.2,710.2 274.0,710.2 272.8,710.2 271.6,710.1 270.4,710.0 269.2,710.0 268.0,710.2 266.8,710.2 265.6,710.1 264.4,710.0 263.2,710.0 262.0,710.1 260.8,710.3 259.6,710.1 258.4,710.1 257.2,710.2 256.0,710.3 254.8,710.2 253.6,710.2 252.4,710.1 251.2,710.2 250.0,710.3 248.8,710.2 247.6,710.2 246.4,710.0 245.2,710.3 244.0,710.3 242.8,710.2 241.6,710.2 240.4,710.4 239.2,710.3 238.0,710.2 236.8,710.2 235.6,710.3 234.4,710.4 233.2,710.4 232.0,710.4 230.8,710.3 229.6,710.3 228.4,710.4 227.2,710.3 226.0,710.4 224.8,710.4 223.6,710.3 222.4,710.4 221.2,710.5 220.0,710.4 218.8,710.3 217.6,710.4 216.4,710.4 215.2,710.3 214.0,710.4 212.8,710.4 211.6,710.5 210.4,710.5 209.2,710.4 208.0,710.4 206.8,710.4 205.6,710.5 204.4,710.5 203.2,710.4 202.0,710.5 200.8,710.5 199.6,710.6 198.4,710.5 197.2,710.5 196.0,710.6 194.8,710.4 193.6,710.5 192.4,710.5 191.2,710.5 190.0,710.5 188.8,710.5 187.6,710.5 186.4,710.4 185.2,710.6 184.0,710.6 182.8,710.6 181.6,710.6 180.4,710.5 179.2,710.4 178.0,710.5 176.8,710.6 175.6,710.5 174.4,710.5 173.2,710.5 172.0,710.5 170.8,710.5 169.6,710.5 168.4,710.5 167.2,710.5 166.0,710.5 164.8,710.6 163.6,710.6 162.4,710.6 161.2,710.6 160.0,710.6 158.8,710.6 157.6,710.6 156.4,710.6 155.2,710.6 154.0,710.6 152.8,710.6 151.6,710.5 150.4,710.6 149.2,710.5 148.0,710.5 146.8,710.6 145.6,710.6 144.4,710.5 143.2,710.5 142.0,710.5 140.8,710.6 139.6,710.6 138.4,710.5 137.2,710.6 136.0,710.6 134.8,710.6 133.6,710.6 132.4,710.5 131.2,710.5 130.0,710.6" fill="#bcdcef"/><polygon points="130.0,710.3 131.2,710.2 132.4,710.2 133.6,710.3 134.8,710.3 136.0,710.3 137.2,710.3 138.4,710.2 139.6,710.3 140.8,710.3 142.0,710.2 143.2,710.2 144.4,710.1 145.6,710.3 146.8,710.3 148.0,710.2 149.2,710.2 150.4,710.3 151.6,710.2 152.8,710.3 154.0,710.3 155.2,710.3 156.4,710.3 157.6,710.3 158.8,710.3 160.0,710.3 161.2,710.3 162.4,710.3 163.6,710.3 164.8,710.3 166.0,710.2 167.2,710.2 168.4,710.2 169.6,710.2 170.8,710.2 172.0,710.2 173.2,710.2 174.4,710.2 175.6,710.2 176.8,710.3 178.0,710.2 179.2,710.1 180.4,710.2 181.6,710.3 182.8,710.3 184.0,710.3 185.2,710.3 186.4,710.1 187.6,710.2 188.8,710.2 190.0,710.2 191.2,710.2 192.4,710.2 193.6,710.2 194.8,710.1 196.0,710.3 197.2,710.2 198.4,710.2 199.6,710.3 200.8,710.2 202.0,710.1 203.2,710.1 204.4,710.2 205.6,710.2 206.8,710.1 208.0,710.1 209.2,710.1 210.4,710.1 211.6,710.1 212.8,710.1 214.0,710.1 215.2,710.0 216.4,710.1 217.6,710.0 218.8,710.0 220.0,710.0 221.2,710.1 222.4,710.1 223.6,709.9 224.8,710.0 226.0,710.0 227.2,710.0 228.4,710.1 229.6,710.0 230.8,710.0 232.0,710.0 233.2,710.0 234.4,710.0 235.6,709.9 236.8,709.8 238.0,709.8 239.2,709.9 240.4,710.0 241.6,709.9 242.8,709.8 244.0,709.8 245.2,709.9 246.4,709.6 247.6,709.8 248.8,709.9 250.0,709.8 251.2,709.8 252.4,709.7 253.6,709.8 254.8,709.9 256.0,710.0 257.2,709.9 258.4,709.7 259.6,709.7 260.8,709.9 262.0,709.7 263.2,709.6 264.4,709.7 265.6,709.7 266.8,709.8 268.0,709.9 269.2,709.7 270.4,709.6 271.6,709.7 272.8,709.8 274.0,709.7 275.2,709.8 276.4,709.7 277.6,709.7 278.8,709.6 280.0,709.5 281.2,709.6 282.4,709.6 283.6,709.5 284.8,709.5 286.0,709.8 287.2,709.9 288.4,709.6 289.6,709.5 290.8,709.5 292.0,709.5 293.2,709.4 294.4,709.4 295.6,709.5 296.8,709.5 298.0,709.6 299.2,709.6 300.4,709.5 301.6,709.5 302.8,709.1 304.0,709.3 305.2,709.3 306.4,709.4 307.6,709.4 308.8,709.2 310.0,709.0 311.2,708.8 312.4,708.9 313.6,709.1 314.8,709.0 316.0,708.5 317.2,708.6 318.4,708.4 319.6,708.7 320.8,709.0 322.0,708.7 323.2,708.6 324.4,708.7 325.6,708.7 326.8,708.6 328.0,708.5 329.2,708.7 330.4,708.5 331.6,708.1 332.8,708.1 334.0,708.1 335.2,707.9 336.4,708.1 337.6,708.0 338.8,707.7 340.0,708.1 341.2,708.2 342.4,708.2 343.6,707.9 344.8,707.9 346.0,708.0 347.2,707.7 348.4,707.6 349.6,707.5 350.8,707.6 352.0,707.8 353.2,707.9 354.4,707.9 355.6,707.5 356.8,707.4 358.0,707.8 359.2,707.3 360.4,707.3 361.6,707.7 362.8,707.8 364.0,707.8 365.2,707.6 366.4,707.2 367.6,707.9 368.8,707.5 370.0,707.1 371.2,707.4 372.4,706.9 373.6,706.6 374.8,706.7 376.0,706.7 377.2,706.7 378.4,706.9 379.6,707.0 380.8,707.0 382.0,707.0 383.2,706.9 384.4,706.5 385.6,706.5 386.8,706.6 388.0,706.8 389.2,706.4 390.4,706.4 391.6,706.4 392.8,706.6 394.0,706.6 395.2,706.3 396.4,706.6 397.6,706.9 398.8,706.6 400.0,706.4 401.2,706.8 402.4,706.8 403.6,706.8 404.8,706.6 406.0,706.1 407.2,705.6 408.4,705.3 409.6,705.4 410.8,705.6 412.0,706.5 413.2,705.9 414.4,705.6 415.6,705.7 416.8,705.6 418.0,704.3 419.2,705.7 420.4,705.9 421.6,705.5 422.8,705.3 424.0,705.2 425.2,704.2 426.4,703.8 427.6,705.1 428.8,704.7 430.0,704.2 431.2,704.3 432.4,704.5 433.6,703.9 434.8,704.5 436.0,703.7 437.2,704.3 438.4,704.8 439.6,703.9 440.8,703.3 442.0,703.2 443.2,703.5 444.4,703.2 445.6,704.3 446.8,704.3 448.0,704.0 449.2,704.0 450.4,703.5 451.6,703.3 452.8,703.5 454.0,703.0 455.2,703.5 456.4,704.4 457.6,703.7 458.8,703.4 460.0,702.8 461.2,702.5 462.4,702.3 463.6,701.9 464.8,702.7 466.0,702.3 467.2,701.3 468.4,701.2 469.6,702.2 470.8,701.8 472.0,701.8 473.2,700.9 474.4,701.6 475.6,701.7 476.8,700.7 478.0,700.2 479.2,701.6 480.4,702.8 481.6,701.5 482.8,701.4 484.0,700.4 485.2,700.7 486.4,702.3 487.6,701.5 488.8,701.4 490.0,699.5 491.2,701.1 492.4,699.6 493.6,696.2 494.8,699.7 496.0,699.2 497.2,700.0 498.4,700.3 499.6,701.1 500.8,700.2 502.0,698.5 503.2,698.1 504.4,697.6 505.6,699.8 506.8,698.5 508.0,695.0 509.2,698.7 510.4,700.0 511.6,698.2 512.8,698.2 514.0,697.9 515.2,697.3 516.4,698.6 517.6,696.9 518.8,694.7 520.0,696.4 521.2,698.0 522.4,697.3 523.6,697.3 524.8,697.1 526.0,696.6 527.2,695.5 528.4,695.6 529.6,695.5 530.8,696.6 532.0,696.6 533.2,695.1 534.4,694.0 535.6,693.8 536.8,694.3 538.0,693.3 539.2,694.3 540.4,695.3 541.6,695.5 542.8,695.9 544.0,696.0 545.2,695.7 546.4,693.3 547.6,694.9 548.8,695.1 550.0,693.3 551.2,691.7 552.4,692.9 553.6,696.1 554.8,695.1 556.0,692.9 557.2,690.7 558.4,689.7 559.6,690.6 560.8,695.4 562.0,697.5 563.2,694.3 564.4,691.9 565.6,687.3 566.8,694.5 568.0,693.6 569.2,693.5 570.4,694.2 571.6,692.7 572.8,691.7 574.0,693.3 575.2,692.3 576.4,690.9 577.6,690.4 578.8,689.5 580.0,689.3 581.2,692.3 582.4,689.1 583.6,687.8 584.8,690.1 586.0,690.1 587.2,689.9 588.4,691.1 589.6,688.7 590.8,688.9 592.0,688.6 593.2,688.7 594.4,690.0 595.6,688.8 596.8,688.2 598.0,686.6 599.2,690.2 600.4,689.6 601.6,688.2 602.8,683.0 604.0,687.6 605.2,684.6 606.4,683.3 607.6,684.9 608.8,686.5 610.0,684.8 611.2,684.1 612.4,683.9 613.6,681.5 614.8,683.4 616.0,684.0 617.2,683.1 618.4,681.5 619.6,683.1 620.8,682.3 622.0,680.1 623.2,676.8 624.4,678.9 625.6,679.3 626.8,682.3 628.0,680.4 629.2,683.1 630.4,682.2 631.6,682.2 632.8,682.8 634.0,683.4 635.2,681.6 636.4,676.5 637.6,680.8 638.8,681.3 640.0,681.5 641.2,681.8 642.4,682.4 643.6,676.0 644.8,673.9 646.0,681.2 647.2,677.8 648.4,679.9 649.6,680.5 650.8,680.4 652.0,680.7 653.2,674.1 654.4,673.6 655.6,678.8 656.8,681.0 658.0,681.8 659.2,676.0 660.4,676.7 661.6,680.1 662.8,679.1 664.0,677.3 665.2,674.1 666.4,670.7 667.6,675.4 668.8,677.1 670.0,677.2 671.2,676.6 672.4,676.9 673.6,672.9 674.8,669.8 676.0,674.1 677.2,676.1 678.4,673.0 679.6,674.7 680.8,672.8 682.0,673.5 683.2,667.8 684.4,669.9 685.6,670.7 686.8,673.1 688.0,677.1 689.2,671.8 690.4,668.3 691.6,673.7 692.8,673.1 694.0,665.9 695.2,676.2 696.4,669.4 697.6,666.6 698.8,665.2 700.0,669.0 701.2,669.5 702.4,671.3 703.6,669.0 704.8,669.5 706.0,672.0 707.2,668.2 708.4,676.8 709.6,679.8 710.8,674.5 712.0,674.6 713.2,673.6 714.4,673.0 715.6,669.7 716.8,668.7 718.0,671.1 719.2,672.9 720.4,666.3 721.6,670.6 722.8,672.4 724.0,674.0 725.2,673.7 726.4,670.1 727.6,668.2 728.8,667.3 730.0,667.4 731.2,673.8 732.4,677.1 733.6,673.3 734.8,669.4 736.0,669.7 737.2,671.4 738.4,671.9 739.6,670.5 740.8,667.6 742.0,668.1 743.2,665.6 744.4,669.5 745.6,672.0 746.8,671.0 748.0,670.2 749.2,670.1 750.4,665.9 751.6,670.1 752.8,671.3 754.0,672.6 755.2,669.8 756.4,664.5 757.6,663.8 758.8,669.2 760.0,678.3 761.2,673.8 762.4,668.9 763.6,669.7 764.8,666.6 766.0,669.0 767.2,668.9 768.4,667.3 769.6,670.8 770.8,668.1 772.0,671.1 773.2,667.0 774.4,662.9 775.6,666.1 776.8,664.9 778.0,670.3 779.2,668.7 780.4,664.4 781.6,667.4 782.8,666.7 784.0,659.3 785.2,655.7 786.4,659.3 787.6,667.4 788.8,658.6 790.0,661.2 791.2,664.7 792.4,663.9 793.6,657.0 794.8,660.1 796.0,666.6 797.2,667.5 798.4,661.5 799.6,659.9 800.8,663.8 802.0,666.4 803.2,668.0 804.4,669.8 805.6,665.6 806.8,661.7 808.0,665.3 809.2,668.4 810.4,665.5 811.6,660.1 812.8,661.8 814.0,661.3 815.2,656.9 816.4,663.4 817.6,657.6 818.8,654.8 820.0,658.5 821.2,661.9 822.4,662.5 823.6,655.9 824.8,655.7 826.0,657.5 827.2,653.9 828.4,661.8 829.6,651.6 830.8,644.5 832.0,654.5 833.2,654.8 834.4,660.4 835.6,658.2 836.8,658.6 838.0,651.8 839.2,653.2 840.4,662.4 841.6,653.9 842.8,645.2 844.0,649.2 845.2,649.5 846.4,638.1 847.6,649.2 848.8,653.0 850.0,652.9 851.2,649.3 852.4,644.6 853.6,644.4 854.8,649.2 856.0,644.0 857.2,640.1 858.4,645.8 859.6,640.1 860.8,644.0 862.0,646.2 863.2,644.0 864.4,644.0 865.6,642.3 866.8,638.8 868.0,642.2 869.2,643.7 870.4,653.7 871.6,646.4 872.8,640.3 874.0,642.0 875.2,644.2 876.4,646.2 877.6,646.8 878.8,643.4 880.0,633.2 881.2,642.0 882.4,640.5 883.6,626.9 884.8,625.1 886.0,636.8 887.2,631.5 888.4,634.7 889.6,625.1 890.8,623.8 892.0,632.4 893.2,635.7 894.4,633.2 895.6,630.9 896.8,627.8 898.0,624.2 899.2,634.0 900.4,624.5 901.6,618.0 902.8,623.8 904.0,617.9 905.2,617.0 906.4,624.7 907.6,642.2 908.8,633.0 910.0,625.0 911.2,612.2 912.4,612.0 913.6,612.5 914.8,618.1 916.0,636.3 917.2,630.1 918.4,612.4 919.6,615.3 920.8,614.1 922.0,605.8 923.2,620.9 924.4,610.6 925.6,608.1 926.8,620.8 928.0,613.6 929.2,596.2 930.4,608.9 931.6,604.8 932.8,611.4 934.0,598.0 935.2,595.8 936.4,606.8 937.6,599.8 938.8,600.1 940.0,621.5 941.2,609.8 942.4,609.7 943.6,595.1 944.8,591.8 946.0,598.3 947.2,592.0 948.4,607.1 949.6,590.5 950.8,580.5 952.0,585.9 953.2,594.2 954.4,589.1 955.6,584.0 956.8,586.0 958.0,571.4 959.2,568.8 960.4,583.1 961.6,584.3 962.8,586.6 964.0,578.7 965.2,576.9 966.4,576.0 967.6,572.0 968.8,564.4 970.0,571.1 971.2,574.7 972.4,559.2 973.6,578.1 974.8,580.8 976.0,568.8 977.2,576.7 978.4,573.2 979.6,565.9 980.8,580.6 982.0,595.6 983.2,566.0 984.4,573.1 985.6,568.7 986.8,577.3 988.0,551.3 989.2,550.6 990.4,575.5 991.6,564.1 992.8,557.8 994.0,574.0 995.2,574.2 996.4,556.0 997.6,546.6 998.8,530.8 1000.0,540.2 1001.2,532.3 1002.4,549.6 1003.6,557.9 1004.8,548.2 1006.0,558.6 1007.2,564.4 1008.4,535.1 1009.6,536.8 1010.8,537.5 1012.0,566.9 1013.2,564.2 1014.4,563.4 1015.6,565.6 1016.8,573.0 1018.0,567.1 1019.2,542.3 1020.4,550.1 1021.6,569.4 1022.8,569.7 1024.0,568.7 1025.2,549.2 1026.4,554.4 1027.6,567.0 1028.8,560.9 1030.0,548.0 1031.2,547.6 1032.4,535.4 1033.6,551.9 1034.8,542.4 1036.0,536.0 1037.2,553.4 1038.4,556.3 1039.6,532.0 1040.8,537.8 1042.0,540.5 1043.2,533.4 1044.4,527.2 1045.6,533.5 1046.8,516.7 1048.0,549.0 1049.2,549.5 1050.4,540.5 1051.6,563.4 1051.6,640.1 1050.4,612.6 1049.2,600.2 1048.0,571.2 1046.8,542.7 1045.6,563.9 1044.4,561.4 1043.2,567.9 1042.0,576.7 1040.8,573.3 1039.6,566.4 1038.4,587.2 1037.2,587.7 1036.0,573.5 1034.8,576.0 1033.6,579.4 1032.4,564.0 1031.2,578.7 1030.0,586.1 1028.8,601.5 1027.6,603.9 1026.4,582.3 1025.2,570.7 1024.0,595.3 1022.8,601.1 1021.6,601.3 1020.4,586.2 1019.2,577.1 1018.0,605.8 1016.8,603.5 1015.6,592.5 1014.4,593.6 1013.2,594.9 1012.0,595.4 1010.8,564.0 1009.6,562.2 1008.4,564.4 1007.2,597.5 1006.0,587.1 1004.8,577.0 1003.6,588.3 1002.4,582.0 1001.2,571.4 1000.0,569.7 998.8,560.2 997.6,576.6 996.4,591.6 995.2,602.5 994.0,596.5 992.8,581.6 991.6,581.5 990.4,596.5 989.2,580.6 988.0,581.4 986.8,604.6 985.6,596.1 984.4,605.7 983.2,589.0 982.0,618.1 980.8,609.0 979.6,597.6 978.4,600.1 977.2,604.8 976.0,596.2 974.8,605.4 973.6,602.4 972.4,579.2 971.2,598.8 970.0,597.7 968.8,587.9 967.6,602.8 966.4,609.0 965.2,602.5 964.0,601.1 962.8,607.3 961.6,605.9 960.4,606.7 959.2,597.4 958.0,599.6 956.8,610.4 955.6,612.6 954.4,615.2 953.2,621.0 952.0,610.8 950.8,601.5 949.6,609.5 948.4,629.4 947.2,609.8 946.0,617.1 944.8,613.0 943.6,618.3 942.4,633.5 941.2,639.4 940.0,639.2 938.8,619.9 937.6,620.6 936.4,623.4 935.2,617.0 934.0,619.1 932.8,630.7 931.6,626.4 930.4,628.7 929.2,619.4 928.0,636.7 926.8,637.1 925.6,624.0 924.4,628.6 923.2,641.9 922.0,632.1 920.8,637.0 919.6,636.3 918.4,631.7 917.2,652.8 916.0,654.9 914.8,641.7 913.6,630.1 912.4,629.5 911.2,629.7 910.0,644.8 908.8,655.6 907.6,656.2 906.4,640.5 905.2,637.5 904.0,635.8 902.8,641.7 901.6,634.3 900.4,641.1 899.2,647.7 898.0,640.8 896.8,642.9 895.6,645.8 894.4,649.5 893.2,651.1 892.0,649.4 890.8,643.7 889.6,643.5 888.4,650.5 887.2,648.5 886.0,652.0 884.8,641.6 883.6,642.1 882.4,653.6 881.2,656.2 880.0,648.0 878.8,659.2 877.6,662.3 876.4,661.3 875.2,659.9 874.0,657.2 872.8,654.4 871.6,659.4 870.4,664.4 869.2,654.9 868.0,654.9 866.8,650.9 865.6,653.3 864.4,653.9 863.2,653.8 862.0,656.9 860.8,653.3 859.6,650.7 858.4,659.0 857.2,652.4 856.0,658.1 854.8,664.2 853.6,659.7 852.4,659.8 851.2,662.0 850.0,660.5 848.8,662.5 847.6,662.9 846.4,654.6 845.2,662.3 844.0,666.1 842.8,660.0 841.6,666.1 840.4,674.9 839.2,667.5 838.0,669.8 836.8,671.4 835.6,668.8 834.4,671.3 833.2,666.3 832.0,666.2 830.8,655.6 829.6,664.8 828.4,674.9 827.2,668.0 826.0,665.6 824.8,667.7 823.6,668.0 822.4,673.0 821.2,672.7 820.0,669.1 818.8,665.6 817.6,670.3 816.4,674.1 815.2,667.7 814.0,672.8 812.8,673.9 811.6,671.1 810.4,674.1 809.2,676.8 808.0,676.4 806.8,673.7 805.6,674.1 804.4,678.9 803.2,677.5 802.0,674.2 800.8,672.8 799.6,671.0 798.4,671.9 797.2,674.9 796.0,674.7 794.8,669.8 793.6,668.0 792.4,672.0 791.2,672.2 790.0,669.4 788.8,666.8 787.6,675.2 786.4,669.3 785.2,665.4 784.0,669.1 782.8,674.9 781.6,677.6 780.4,675.6 779.2,677.0 778.0,677.9 776.8,673.6 775.6,674.5 774.4,671.6 773.2,675.3 772.0,679.9 770.8,676.7 769.6,680.5 768.4,675.6 767.2,675.6 766.0,675.8 764.8,675.1 763.6,678.6 762.4,676.7 761.2,681.3 760.0,685.0 758.8,676.3 757.6,673.0 756.4,673.9 755.2,677.0 754.0,680.8 752.8,681.1 751.6,677.9 750.4,674.6 749.2,679.4 748.0,677.6 746.8,677.8 745.6,678.2 744.4,677.7 743.2,676.9 742.0,676.5 740.8,675.2 739.6,678.8 738.4,679.7 737.2,679.9 736.0,676.7 734.8,677.0 733.6,680.8 732.4,683.7 731.2,682.5 730.0,678.2 728.8,674.9 727.6,674.7 726.4,676.9 725.2,680.6 724.0,681.0 722.8,678.1 721.6,676.6 720.4,673.5 719.2,680.8 718.0,679.0 716.8,677.9 715.6,678.7 714.4,681.9 713.2,681.6 712.0,682.0 710.8,682.0 709.6,684.7 708.4,681.7 707.2,677.7 706.0,680.6 704.8,678.6 703.6,678.7 702.4,680.9 701.2,679.2 700.0,678.6 698.8,675.0 697.6,674.5 696.4,677.5 695.2,682.5 694.0,673.9 692.8,681.2 691.6,681.2 690.4,675.6 689.2,680.0 688.0,685.8 686.8,681.4 685.6,678.8 684.4,678.2 683.2,674.8 682.0,681.9 680.8,681.4 679.6,683.1 678.4,681.4 677.2,682.1 676.0,679.8 674.8,676.9 673.6,679.2 672.4,683.5 671.2,683.2 670.0,682.9 668.8,684.9 667.6,683.5 666.4,678.3 665.2,680.7 664.0,683.4 662.8,684.7 661.6,685.1 660.4,683.7 659.2,684.0 658.0,687.8 656.8,686.6 655.6,686.4 654.4,682.6 653.2,682.3 652.0,687.8 650.8,687.4 649.6,688.3 648.4,686.5 647.2,683.4 646.0,686.5 644.8,682.2 643.6,683.2 642.4,688.2 641.2,686.9 640.0,687.2 638.8,687.6 637.6,687.9 636.4,683.9 635.2,686.8 634.0,688.2 632.8,688.4 631.6,687.1 630.4,686.6 629.2,687.5 628.0,687.1 626.8,687.2 625.6,685.7 624.4,685.6 623.2,683.9 622.0,686.4 620.8,687.6 619.6,688.1 618.4,688.0 617.2,689.2 616.0,689.0 614.8,688.7 613.6,687.4 612.4,689.2 611.2,689.4 610.0,689.9 608.8,690.9 607.6,690.0 606.4,688.4 605.2,689.3 604.0,692.5 602.8,687.9 601.6,692.9 600.4,693.6 599.2,693.8 598.0,690.3 596.8,692.7 595.6,694.1 594.4,694.6 593.2,693.1 592.0,692.9 590.8,693.2 589.6,693.1 588.4,694.8 587.2,693.4 586.0,693.6 584.8,693.9 583.6,692.5 582.4,693.5 581.2,696.4 580.0,694.3 578.8,694.5 577.6,694.2 576.4,695.0 575.2,696.2 574.0,696.7 572.8,694.9 571.6,696.0 570.4,697.7 569.2,696.9 568.0,697.6 566.8,697.6 565.6,691.2 564.4,696.3 563.2,698.4 562.0,701.1 560.8,698.6 559.6,694.4 558.4,693.2 557.2,693.6 556.0,695.5 554.8,698.1 553.6,699.3 552.4,696.0 551.2,695.5 550.0,697.1 548.8,698.1 547.6,697.7 546.4,696.2 545.2,699.4 544.0,699.5 542.8,699.4 541.6,698.9 540.4,698.5 539.2,697.7 538.0,696.7 536.8,697.7 535.6,697.2 534.4,697.6 533.2,698.1 532.0,698.9 530.8,699.2 529.6,698.8 528.4,698.9 527.2,698.2 526.0,699.0 524.8,699.6 523.6,700.4 522.4,700.6 521.2,701.3 520.0,699.4 518.8,698.0 517.6,699.6 516.4,700.9 515.2,700.5 514.0,700.7 512.8,700.9 511.6,700.3 510.4,702.0 509.2,701.2 508.0,697.7 506.8,700.7 505.6,701.3 504.4,699.9 503.2,700.7 502.0,701.1 500.8,702.8 499.6,703.3 498.4,702.3 497.2,702.0 496.0,702.7 494.8,702.3 493.6,698.5 492.4,701.3 491.2,703.0 490.0,701.6 488.8,703.1 487.6,703.5 486.4,704.4 485.2,702.8 484.0,702.8 482.8,703.7 481.6,703.2 480.4,704.3 479.2,703.2 478.0,702.1 476.8,702.8 475.6,703.6 474.4,703.4 473.2,702.3 472.0,703.4 470.8,703.4 469.6,703.5 468.4,702.8 467.2,703.1 466.0,703.5 464.8,704.0 463.6,703.5 462.4,704.0 461.2,704.0 460.0,704.3 458.8,705.0 457.6,705.0 456.4,705.5 455.2,704.9 454.0,704.7 452.8,705.2 451.6,704.9 450.4,705.0 449.2,705.3 448.0,705.3 446.8,705.4 445.6,705.6 444.4,704.5 443.2,704.9 442.0,704.6 440.8,704.6 439.6,705.2 438.4,705.8 437.2,705.3 436.0,704.8 434.8,705.8 433.6,705.6 432.4,705.7 431.2,705.8 430.0,705.4 428.8,705.6 427.6,706.1 426.4,705.1 425.2,705.5 424.0,706.6 422.8,706.6 421.6,706.7 420.4,707.1 419.2,706.8 418.0,705.4 416.8,706.4 415.6,706.8 414.4,706.9 413.2,707.1 412.0,707.5 410.8,707.1 409.6,706.5 408.4,706.4 407.2,706.6 406.0,707.0 404.8,707.6 403.6,707.8 402.4,707.7 401.2,707.6 400.0,707.2 398.8,707.5 397.6,707.7 396.4,707.5 395.2,707.3 394.0,707.5 392.8,707.4 391.6,707.2 390.4,707.0 389.2,707.0 388.0,707.5 386.8,707.2 385.6,707.4 384.4,707.6 383.2,707.9 382.0,707.7 380.8,707.7 379.6,707.8 378.4,707.7 377.2,707.6 376.0,707.6 374.8,707.4 373.6,707.4 372.4,707.9 371.2,708.2 370.0,708.0 368.8,708.3 367.6,708.6 366.4,708.3 365.2,708.4 364.0,708.5 362.8,708.4 361.6,708.3 360.4,708.0 359.2,708.1 358.0,708.6 356.8,708.3 355.6,708.3 354.4,708.5 353.2,708.6 352.0,708.6 350.8,708.4 349.6,708.2 348.4,708.3 347.2,708.3 346.0,708.5 344.8,708.5 343.6,708.6 342.4,708.7 341.2,708.8 340.0,708.7 338.8,708.4 337.6,708.6 336.4,708.7 335.2,708.6 334.0,708.8 332.8,708.8 331.6,708.8 330.4,709.0 329.2,709.2 328.0,708.9 326.8,709.0 325.6,709.1 324.4,709.0 323.2,709.0 322.0,709.2 320.8,709.4 319.6,709.1 318.4,708.9 317.2,709.1 316.0,709.0 314.8,709.4 313.6,709.5 312.4,709.2 311.2,709.2 310.0,709.4 308.8,709.5 307.6,709.7 306.4,709.8 305.2,709.7 304.0,709.7 302.8,709.5 301.6,709.8 300.4,709.8 299.2,709.8 298.0,709.9 296.8,709.8 295.6,709.8 294.4,709.7 293.2,709.7 292.0,709.8 290.8,709.8 289.6,709.9 288.4,709.9 287.2,710.1 286.0,710.1 284.8,709.8 283.6,709.8 282.4,709.9 281.2,709.8 280.0,709.8 278.8,709.9 277.6,710.0 276.4,710.0 275.2,710.0 274.0,710.0 272.8,710.0 271.6,710.0 270.4,709.8 269.2,709.9 268.0,710.0 266.8,710.0 265.6,709.9 264.4,709.9 263.2,709.8 262.0,709.9 260.8,710.1 259.6,709.9 258.4,709.9 257.2,710.1 256.0,710.2 254.8,710.1 253.6,710.0 252.4,710.0 251.2,710.1 250.0,710.1 248.8,710.1 247.6,710.0 246.4,709.9 245.2,710.1 244.0,710.1 242.8,710.0 241.6,710.1 240.4,710.2 239.2,710.1 238.0,710.0 236.8,710.0 235.6,710.2 234.4,710.3 233.2,710.2 232.0,710.2 230.8,710.1 229.6,710.2 228.4,710.3 227.2,710.2 226.0,710.2 224.8,710.2 223.6,710.1 222.4,710.2 221.2,710.3 220.0,710.2 218.8,710.2 217.6,710.2 216.4,710.2 215.2,710.2 214.0,710.2 212.8,710.3 211.6,710.3 210.4,710.3 209.2,710.3 208.0,710.3 206.8,710.3 205.6,710.3 204.4,710.4 203.2,710.3 202.0,710.3 200.8,710.4 199.6,710.4 198.4,710.4 197.2,710.4 196.0,710.4 194.8,710.3 193.6,710.3 192.4,710.3 191.2,710.3 190.0,710.3 188.8,710.4 187.6,710.3 186.4,710.3 185.2,710.4 184.0,710.4 182.8,710.4 181.6,710.4 180.4,710.3 179.2,710.3 178.0,710.4 176.8,710.4 175.6,710.4 174.4,710.4 173.2,710.3 172.0,710.4 170.8,710.4 169.6,710.4 168.4,710.4 167.2,710.4 166.0,710.4 164.8,710.4 163.6,710.5 162.4,710.4 161.2,710.5 160.0,710.5 158.8,710.5 157.6,710.4 156.4,710.4 155.2,710.5 154.0,710.5 152.8,710.4 151.6,710.4 150.4,710.4 149.2,710.4 148.0,710.4 146.8,710.4 145.6,710.4 144.4,710.3 143.2,710.3 142.0,710.4 140.8,710.5 139.6,710.4 138.4,710.4 137.2,710.4 136.0,710.5 134.8,710.5 133.6,710.4 132.4,710.4 131.2,710.4 130.0,710.4" fill="#b0d4eb"/><line x1="171.5" y1="511.5" x2="171.5" y2="711" stroke="rgba(130,160,190,0.2)" stroke-width="1.2"/><line x1="255.3" y1="511.5" x2="255.3" y2="711" stroke="rgba(130,160,190,0.2)" stroke-width="1.2"/><line x1="341" y1="511.5" x2="341" y2="711" stroke="rgba(130,160,190,0.2)" stroke-width="1.2"/><line x1="426.8" y1="511.5" x2="426.8" y2="711" stroke="rgba(130,160,190,0.2)" stroke-width="1.2"/><line x1="512.2" y1="511.5" x2="512.2" y2="711" stroke="rgba(130,160,190,0.2)" stroke-width="1.2"/><line x1="597.5" y1="511.5" x2="597.5" y2="711" stroke="rgba(130,160,190,0.2)" stroke-width="1.2"/><line x1="681.8" y1="511.5" x2="681.8" y2="711" stroke="rgba(130,160,190,0.2)" stroke-width="1.2"/><line x1="767" y1="511.5" x2="767" y2="711" stroke="rgba(130,160,190,0.2)" stroke-width="1.2"/><line x1="853.5" y1="511.5" x2="853.5" y2="711" stroke="rgba(130,160,190,0.2)" stroke-width="1.2"/><line x1="938.4" y1="511.5" x2="938.4" y2="711" stroke="rgba(130,160,190,0.2)" stroke-width="1.2"/><line x1="1022.3" y1="511.5" x2="1022.3" y2="711" stroke="rgba(130,160,190,0.2)" stroke-width="1.2"/><polyline points="130.0,710.7 131.2,710.7 132.4,710.7 133.6,710.7 134.8,710.8 136.0,710.8 137.2,710.7 138.4,710.7 139.6,710.7 140.8,710.8 142.0,710.7 143.2,710.7 144.4,710.7 145.6,710.7 146.8,710.7 148.0,710.7 149.2,710.7 150.4,710.7 151.6,710.7 152.8,710.7 154.0,710.8 155.2,710.8 156.4,710.7 157.6,710.8 158.8,710.8 160.0,710.8 161.2,710.8 162.4,710.8 163.6,710.8 164.8,710.7 166.0,710.7 167.2,710.7 168.4,710.7 169.6,710.7 170.8,710.7 172.0,710.7 173.2,710.7 174.4,710.7 175.6,710.7 176.8,710.7 178.0,710.7 179.2,710.7 180.4,710.7 181.6,710.7 182.8,710.7 184.0,710.8 185.2,710.8 186.4,710.6 187.6,710.7 188.8,710.7 190.0,710.6 191.2,710.6 192.4,710.6 193.6,710.6 194.8,710.6 196.0,710.7 197.2,710.7 198.4,710.7 199.6,710.7 200.8,710.7 202.0,710.7 203.2,710.6 204.4,710.7 205.6,710.7 206.8,710.7 208.0,710.7 209.2,710.6 210.4,710.6 211.6,710.6 212.8,710.6 214.0,710.6 215.2,710.6 216.4,710.6 217.6,710.6 218.8,710.5 220.0,710.5 221.2,710.6 222.4,710.6 223.6,710.6 224.8,710.6 226.0,710.6 227.2,710.6 228.4,710.6 229.6,710.6 230.8,710.5 232.0,710.6 233.2,710.6 234.4,710.6 235.6,710.5 236.8,710.4 238.0,710.4 239.2,710.5 240.4,710.6 241.6,710.5 242.8,710.4 244.0,710.5 245.2,710.6 246.4,710.4 247.6,710.5 248.8,710.6 250.0,710.6 251.2,710.5 252.4,710.5 253.6,710.5 254.8,710.5 256.0,710.6 257.2,710.5 258.4,710.4 259.6,710.5 260.8,710.6 262.0,710.4 263.2,710.3 264.4,710.3 265.6,710.4 266.8,710.5 268.0,710.5 269.2,710.3 270.4,710.3 271.6,710.5 272.8,710.5 274.0,710.4 275.2,710.5 276.4,710.5 277.6,710.5 278.8,710.4 280.0,710.3 281.2,710.4 282.4,710.4 283.6,710.4 284.8,710.4 286.0,710.6 287.2,710.5 288.4,710.4 289.6,710.4 290.8,710.3 292.0,710.3 293.2,710.2 294.4,710.2 295.6,710.3 296.8,710.4 298.0,710.4 299.2,710.5 300.4,710.4 301.6,710.5 302.8,710.2 304.0,710.3 305.2,710.3 306.4,710.3 307.6,710.4 308.8,710.3 310.0,710.1 311.2,710.0 312.4,710.0 313.6,710.2 314.8,710.1 316.0,709.9 317.2,709.8 318.4,709.7 319.6,709.7 320.8,710.0 322.0,710.0 323.2,709.9 324.4,709.8 325.6,709.8 326.8,709.9 328.0,709.9 329.2,710.1 330.4,710.0 331.6,710.0 332.8,709.9 334.0,709.8 335.2,709.7 336.4,709.6 337.6,709.6 338.8,709.7 340.0,709.7 341.2,709.8 342.4,709.8 343.6,709.7 344.8,709.6 346.0,709.6 347.2,709.6 348.4,709.8 349.6,709.6 350.8,709.7 352.0,709.8 353.2,709.7 354.4,709.7 355.6,709.6 356.8,709.7 358.0,709.8 359.2,709.7 360.4,709.3 361.6,709.5 362.8,709.7 364.0,709.6 365.2,709.6 366.4,709.3 367.6,709.6 368.8,709.4 370.0,709.3 371.2,709.6 372.4,709.3 373.6,709.1 374.8,709.1 376.0,709.2 377.2,709.1 378.4,709.1 379.6,709.2 380.8,709.2 382.0,709.2 383.2,709.3 384.4,709.1 385.6,708.9 386.8,709.0 388.0,709.0 389.2,708.6 390.4,708.8 391.6,709.1 392.8,709.0 394.0,709.1 395.2,709.1 396.4,709.2 397.6,709.6 398.8,709.2 400.0,709.3 401.2,709.4 402.4,709.5 403.6,709.5 404.8,709.2 406.0,708.6 407.2,708.3 408.4,708.6 409.6,708.5 410.8,708.9 412.0,709.3 413.2,708.9 414.4,708.6 415.6,708.8 416.8,708.6 418.0,707.7 419.2,709.0 420.4,709.2 421.6,708.8 422.8,708.7 424.0,708.6 425.2,708.0 426.4,707.8 427.6,708.3 428.8,708.1 430.0,707.9 431.2,707.8 432.4,707.9 433.6,708.2 434.8,707.7 436.0,707.2 437.2,707.7 438.4,708.2 439.6,707.8 440.8,707.4 442.0,707.8 443.2,707.9 444.4,707.6 445.6,708.1 446.8,707.8 448.0,707.9 449.2,708.1 450.4,707.4 451.6,707.6 452.8,708.1 454.0,707.6 455.2,708.0 456.4,708.6 457.6,708.1 458.8,707.4 460.0,707.1 461.2,707.2 462.4,707.2 463.6,707.0 464.8,707.1 466.0,706.7 467.2,706.3 468.4,706.9 469.6,707.0 470.8,706.9 472.0,707.3 473.2,705.7 474.4,706.5 475.6,706.9 476.8,706.8 478.0,707.0 479.2,706.8 480.4,707.0 481.6,706.3 482.8,707.3 484.0,706.2 485.2,706.1 486.4,707.6 487.6,707.0 488.8,706.7 490.0,706.6 491.2,707.0 492.4,705.6 493.6,702.9 494.8,706.2 496.0,706.3 497.2,706.2 498.4,706.5 499.6,707.5 500.8,707.1 502.0,705.9 503.2,705.5 504.4,704.9 505.6,705.9 506.8,705.1 508.0,703.8 509.2,705.7 510.4,706.4 511.6,705.8 512.8,705.3 514.0,704.8 515.2,705.3 516.4,705.8 517.6,704.7 518.8,702.9 520.0,704.3 521.2,707.0 522.4,706.1 523.6,705.6 524.8,704.8 526.0,704.4 527.2,703.1 528.4,703.3 529.6,703.7 530.8,704.3 532.0,704.5 533.2,704.0 534.4,703.2 535.6,703.8 536.8,704.2 538.0,703.3 539.2,703.8 540.4,704.5 541.6,705.1 542.8,705.1 544.0,705.7 545.2,706.5 546.4,703.8 547.6,703.2 548.8,703.6 550.0,702.8 551.2,703.0 552.4,704.1 553.6,706.0 554.8,704.5 556.0,702.6 557.2,701.2 558.4,700.7 559.6,701.8 560.8,704.8 562.0,705.8 563.2,703.4 564.4,702.7 565.6,697.6 566.8,702.9 568.0,703.4 569.2,704.4 570.4,703.2 571.6,703.1 572.8,702.5 574.0,702.2 575.2,702.6 576.4,702.4 577.6,702.3 578.8,701.6 580.0,701.9 581.2,703.1 582.4,701.3 583.6,700.6 584.8,701.3 586.0,700.9 587.2,701.4 588.4,702.8 589.6,701.7 590.8,701.8 592.0,701.1 593.2,701.2 594.4,703.1 595.6,702.7 596.8,701.0 598.0,700.2 599.2,703.3 600.4,701.7 601.6,701.2 602.8,696.7 604.0,701.0 605.2,699.6 606.4,698.0 607.6,699.0 608.8,699.3 610.0,699.8 611.2,700.7 612.4,699.7 613.6,700.3 614.8,701.1 616.0,700.3 617.2,699.6 618.4,698.5 619.6,699.3 620.8,699.4 622.0,696.7 623.2,696.1 624.4,696.1 625.6,697.3 626.8,698.9 628.0,699.6 629.2,698.8 630.4,697.0 631.6,698.5 632.8,700.7 634.0,699.9 635.2,700.4 636.4,699.2 637.6,700.6 638.8,700.6 640.0,698.3 641.2,698.7 642.4,700.1 643.6,695.9 644.8,694.0 646.0,697.6 647.2,695.3 648.4,697.7 649.6,698.6 650.8,698.6 652.0,699.0 653.2,695.1 654.4,695.6 655.6,698.1 656.8,698.7 658.0,699.9 659.2,697.6 660.4,696.1 661.6,699.4 662.8,698.2 664.0,695.7 665.2,693.3 666.4,693.2 667.6,696.6 668.8,697.5 670.0,695.8 671.2,696.5 672.4,696.0 673.6,692.7 674.8,691.4 676.0,694.1 677.2,695.4 678.4,695.8 679.6,698.9 680.8,697.4 682.0,695.9 683.2,690.5 684.4,691.9 685.6,694.4 686.8,697.1 688.0,699.9 689.2,694.0 690.4,691.4 691.6,694.7 692.8,693.2 694.0,686.2 695.2,696.7 696.4,692.6 697.6,690.6 698.8,692.9 700.0,693.7 701.2,693.7 702.4,697.0 703.6,694.3 704.8,692.7 706.0,695.4 707.2,693.1 708.4,695.8 709.6,699.1 710.8,696.5 712.0,696.0 713.2,694.8 714.4,695.5 715.6,692.9 716.8,694.5 718.0,694.0 719.2,695.1 720.4,687.3 721.6,691.1 722.8,692.6 724.0,695.4 725.2,695.9 726.4,691.3 727.6,691.2 728.8,693.5 730.0,694.0 731.2,696.4 732.4,697.2 733.6,695.8 734.8,693.0 736.0,693.0 737.2,694.3 738.4,691.5 739.6,690.7 740.8,687.4 742.0,690.8 743.2,693.1 744.4,693.3 745.6,692.1 746.8,692.2 748.0,692.2 749.2,694.2 750.4,691.2 751.6,693.8 752.8,695.0 754.0,695.8 755.2,691.5 756.4,688.4 757.6,688.5 758.8,691.2 760.0,696.4 761.2,696.2 762.4,690.8 763.6,694.4 764.8,690.5 766.0,691.2 767.2,692.1 768.4,692.1 769.6,695.1 770.8,691.9 772.0,694.8 773.2,691.4 774.4,690.4 775.6,689.5 776.8,690.0 778.0,695.0 779.2,694.3 780.4,693.1 781.6,695.5 782.8,693.4 784.0,688.6 785.2,687.0 786.4,687.8 787.6,690.6 788.8,683.1 790.0,689.1 791.2,691.0 792.4,689.5 793.6,687.7 794.8,691.5 796.0,693.0 797.2,691.0 798.4,688.9 799.6,688.9 800.8,689.4 802.0,690.4 803.2,695.1 804.4,694.0 805.6,691.5 806.8,693.8 808.0,695.7 809.2,695.4 810.4,693.7 811.6,692.0 812.8,692.4 814.0,688.2 815.2,684.4 816.4,686.8 817.6,685.3 818.8,688.0 820.0,692.1 821.2,691.6 822.4,691.1 823.6,688.4 824.8,689.8 826.0,684.9 827.2,687.2 828.4,692.8 829.6,686.1 830.8,678.0 832.0,687.6 833.2,687.2 834.4,691.8 835.6,690.2 836.8,691.7 838.0,689.3 839.2,695.0 840.4,696.8 841.6,685.9 842.8,679.6 844.0,685.1 845.2,684.3 846.4,679.7 847.6,686.5 848.8,682.6 850.0,681.2 851.2,687.5 852.4,684.9 853.6,685.4 854.8,687.9 856.0,679.0 857.2,677.4 858.4,683.7 859.6,679.3 860.8,682.1 862.0,682.6 863.2,678.2 864.4,680.4 865.6,679.9 866.8,675.3 868.0,674.9 869.2,679.3 870.4,688.4 871.6,683.5 872.8,680.6 874.0,683.5 875.2,683.3 876.4,685.3 877.6,684.7 878.8,683.8 880.0,676.8 881.2,682.2 882.4,681.9 883.6,678.8 884.8,676.4 886.0,683.3 887.2,675.9 888.4,678.5 889.6,675.4 890.8,675.6 892.0,678.5 893.2,677.4 894.4,677.6 895.6,675.3 896.8,677.1 898.0,670.7 899.2,676.4 900.4,670.3 901.6,664.7 902.8,673.2 904.0,662.8 905.2,665.7 906.4,677.9 907.6,687.7 908.8,682.5 910.0,671.7 911.2,660.2 912.4,664.4 913.6,665.7 914.8,675.2 916.0,688.8 917.2,685.9 918.4,669.2 919.6,670.0 920.8,674.8 922.0,668.8 923.2,673.7 924.4,662.9 925.6,659.9 926.8,672.0 928.0,674.2 929.2,667.0 930.4,670.4 931.6,666.4 932.8,670.4 934.0,663.7 935.2,664.6 936.4,669.8 937.6,671.0 938.8,669.1 940.0,676.2 941.2,670.5 942.4,665.4 943.6,662.6 944.8,647.1 946.0,655.0 947.2,663.0 948.4,667.0 949.6,651.3 950.8,647.6 952.0,660.3 953.2,666.8 954.4,663.5 955.6,665.0 956.8,659.5 958.0,648.0 959.2,646.7 960.4,655.5 961.6,655.2 962.8,655.1 964.0,649.2 965.2,649.3 966.4,656.6 967.6,650.3 968.8,636.7 970.0,646.7 971.2,650.2 972.4,639.8 973.6,651.9 974.8,660.6 976.0,653.7 977.2,659.9 978.4,658.5 979.6,652.0 980.8,654.7 982.0,660.0 983.2,639.4 984.4,654.8 985.6,645.7 986.8,655.3 988.0,651.9 989.2,637.3 990.4,645.3 991.6,635.9 992.8,635.4 994.0,650.9 995.2,659.9 996.4,647.1 997.6,639.1 998.8,638.2 1000.0,641.3 1001.2,633.5 1002.4,635.2 1003.6,648.0 1004.8,637.1 1006.0,642.5 1007.2,651.4 1008.4,621.1 1009.6,627.4 1010.8,636.4 1012.0,657.4 1013.2,649.5 1014.4,645.8 1015.6,647.5 1016.8,653.1 1018.0,655.3 1019.2,642.5 1020.4,649.8 1021.6,650.5 1022.8,650.9 1024.0,648.0 1025.2,635.6 1026.4,637.3 1027.6,648.7 1028.8,652.7 1030.0,644.3 1031.2,631.6 1032.4,615.2 1033.6,637.3 1034.8,641.8 1036.0,641.0 1037.2,642.5 1038.4,649.5 1039.6,630.0 1040.8,640.9 1042.0,639.7 1043.2,623.0 1044.4,627.7 1045.6,634.7 1046.8,615.9 1048.0,650.1 1049.2,645.6 1050.4,653.5 1051.6,673.7" fill="none" stroke="#98d3eb" stroke-width="3" stroke-linejoin="round"/><polyline points="130.0,710.6 131.2,710.5 132.4,710.5 133.6,710.6 134.8,710.6 136.0,710.6 137.2,710.6 138.4,710.5 139.6,710.6 140.8,710.6 142.0,710.5 143.2,710.5 144.4,710.5 145.6,710.6 146.8,710.6 148.0,710.5 149.2,710.5 150.4,710.6 151.6,710.5 152.8,710.6 154.0,710.6 155.2,710.6 156.4,710.6 157.6,710.6 158.8,710.6 160.0,710.6 161.2,710.6 162.4,710.6 163.6,710.6 164.8,710.6 166.0,710.5 167.2,710.5 168.4,710.5 169.6,710.5 170.8,710.5 172.0,710.5 173.2,710.5 174.4,710.5 175.6,710.5 176.8,710.6 178.0,710.5 179.2,710.4 180.4,710.5 181.6,710.6 182.8,710.6 184.0,710.6 185.2,710.6 186.4,710.4 187.6,710.5 188.8,710.5 190.0,710.5 191.2,710.5 192.4,710.5 193.6,710.5 194.8,710.4 196.0,710.6 197.2,710.5 198.4,710.5 199.6,710.6 200.8,710.5 202.0,710.5 203.2,710.4 204.4,710.5 205.6,710.5 206.8,710.4 208.0,710.4 209.2,710.4 210.4,710.5 211.6,710.5 212.8,710.4 214.0,710.4 215.2,710.3 216.4,710.4 217.6,710.4 218.8,710.3 220.0,710.4 221.2,710.5 222.4,710.4 223.6,710.3 224.8,710.4 226.0,710.4 227.2,710.3 228.4,710.4 229.6,710.3 230.8,710.3 232.0,710.4 233.2,710.4 234.4,710.4 235.6,710.3 236.8,710.2 238.0,710.2 239.2,710.3 240.4,710.4 241.6,710.2 242.8,710.2 244.0,710.3 245.2,710.3 246.4,710.0 247.6,710.2 248.8,710.2 250.0,710.3 251.2,710.2 252.4,710.1 253.6,710.2 254.8,710.2 256.0,710.3 257.2,710.2 258.4,710.1 259.6,710.1 260.8,710.3 262.0,710.1 263.2,710.0 264.4,710.0 265.6,710.1 266.8,710.2 268.0,710.2 269.2,710.0 270.4,710.0 271.6,710.1 272.8,710.2 274.0,710.2 275.2,710.2 276.4,710.2 277.6,710.2 278.8,710.0 280.0,710.0 281.2,710.0 282.4,710.0 283.6,710.0 284.8,710.0 286.0,710.3 287.2,710.3 288.4,710.1 289.6,710.1 290.8,710.0 292.0,710.0 293.2,709.9 294.4,709.9 295.6,710.0 296.8,710.0 298.0,710.1 299.2,710.0 300.4,710.0 301.6,710.1 302.8,709.7 304.0,709.9 305.2,709.9 306.4,710.0 307.6,710.0 308.8,709.8 310.0,709.7 311.2,709.5 312.4,709.4 313.6,709.7 314.8,709.6 316.0,709.3 317.2,709.4 318.4,709.3 319.6,709.4 320.8,709.6 322.0,709.4 323.2,709.3 324.4,709.3 325.6,709.4 326.8,709.3 328.0,709.3 329.2,709.5 330.4,709.4 331.6,709.2 332.8,709.2 334.0,709.2 335.2,709.0 336.4,709.0 337.6,709.0 338.8,708.8 340.0,709.1 341.2,709.1 342.4,709.0 343.6,709.0 344.8,708.8 346.0,708.8 347.2,708.6 348.4,708.8 349.6,708.6 350.8,708.9 352.0,709.0 353.2,709.0 354.4,708.8 355.6,708.7 356.8,708.8 358.0,709.1 359.2,708.6 360.4,708.5 361.6,708.6 362.8,708.8 364.0,708.9 365.2,709.0 366.4,708.7 367.6,709.0 368.8,708.8 370.0,708.4 371.2,708.7 372.4,708.4 373.6,708.0 374.8,708.0 376.0,708.2 377.2,708.2 378.4,708.2 379.6,708.3 380.8,708.1 382.0,708.1 383.2,708.4 384.4,708.2 385.6,707.9 386.8,707.7 388.0,708.0 389.2,707.5 390.4,707.5 391.6,707.9 392.8,708.1 394.0,708.1 395.2,707.8 396.4,708.1 397.6,708.4 398.8,708.2 400.0,708.0 401.2,708.2 402.4,708.3 403.6,708.4 404.8,708.3 406.0,707.7 407.2,707.2 408.4,707.1 409.6,707.1 410.8,707.6 412.0,708.1 413.2,707.7 414.4,707.5 415.6,707.4 416.8,707.2 418.0,706.1 419.2,707.6 420.4,707.9 421.6,707.5 422.8,707.4 424.0,707.1 425.2,706.2 426.4,705.9 427.6,706.9 428.8,706.6 430.0,706.3 431.2,706.5 432.4,706.6 433.6,706.9 434.8,706.7 436.0,705.7 437.2,706.0 438.4,706.6 439.6,706.1 440.8,705.5 442.0,705.6 443.2,706.0 444.4,705.7 445.6,706.4 446.8,706.1 448.0,706.2 449.2,706.5 450.4,705.9 451.6,706.0 452.8,706.1 454.0,705.5 455.2,706.0 456.4,706.8 457.6,706.3 458.8,705.9 460.0,705.1 461.2,705.1 462.4,705.0 463.6,704.6 464.8,704.9 466.0,704.4 467.2,704.1 468.4,704.7 469.6,704.8 470.8,704.5 472.0,704.7 473.2,703.6 474.4,704.6 475.6,704.8 476.8,704.2 478.0,703.8 479.2,704.6 480.4,705.4 481.6,704.4 482.8,705.5 484.0,704.1 485.2,703.8 486.4,705.5 487.6,704.9 488.8,704.8 490.0,703.4 491.2,704.5 492.4,702.5 493.6,699.8 494.8,703.8 496.0,703.9 497.2,703.5 498.4,703.6 499.6,704.7 500.8,704.3 502.0,702.4 503.2,702.4 504.4,702.0 505.6,703.1 506.8,702.5 508.0,699.4 509.2,702.5 510.4,703.2 511.6,701.7 512.8,702.1 514.0,702.3 515.2,702.3 516.4,702.8 517.6,701.6 518.8,700.0 520.0,701.3 521.2,703.4 522.4,702.7 523.6,702.4 524.8,701.5 526.0,701.0 527.2,700.0 528.4,701.0 529.6,701.0 530.8,700.9 532.0,700.4 533.2,699.7 534.4,699.5 535.6,699.3 536.8,700.1 538.0,699.4 539.2,700.3 540.4,700.9 541.6,700.7 542.8,701.1 544.0,701.7 545.2,701.7 546.4,698.3 547.6,699.7 548.8,700.0 550.0,698.5 551.2,697.5 552.4,698.3 553.6,701.4 554.8,700.0 556.0,697.7 557.2,696.2 558.4,696.2 559.6,697.2 560.8,701.2 562.0,703.3 563.2,700.3 564.4,698.3 565.6,693.1 566.8,699.9 568.0,700.4 569.2,700.9 570.4,700.5 571.6,698.6 572.8,697.7 574.0,699.0 575.2,698.1 576.4,697.3 577.6,696.6 578.8,696.4 580.0,696.2 581.2,698.1 582.4,695.8 583.6,695.4 584.8,696.6 586.0,696.7 587.2,696.3 588.4,697.1 589.6,695.2 590.8,696.1 592.0,695.9 593.2,696.1 594.4,697.3 595.6,697.3 596.8,695.5 598.0,693.1 599.2,696.0 600.4,696.1 601.6,696.0 602.8,690.4 604.0,694.7 605.2,691.7 606.4,691.0 607.6,692.5 608.8,693.9 610.0,693.7 611.2,693.4 612.4,692.8 613.6,691.5 614.8,692.6 616.0,692.5 617.2,693.1 618.4,692.5 619.6,692.7 620.8,691.8 622.0,690.1 623.2,689.7 624.4,689.6 625.6,689.5 626.8,691.3 628.0,691.6 629.2,691.0 630.4,690.0 631.6,690.5 632.8,692.7 634.0,693.1 635.2,691.6 636.4,688.2 637.6,692.0 638.8,692.9 640.0,691.6 641.2,691.1 642.4,692.5 643.6,687.5 644.8,686.3 646.0,690.6 647.2,686.7 648.4,689.9 649.6,691.7 650.8,691.2 652.0,691.8 653.2,687.0 654.4,687.5 655.6,690.1 656.8,690.3 658.0,692.4 659.2,689.5 660.4,688.9 661.6,690.0 662.8,689.1 664.0,687.7 665.2,685.4 666.4,684.3 667.6,688.1 668.8,688.8 670.0,686.2 671.2,688.0 672.4,687.5 673.6,683.1 674.8,681.2 676.0,684.9 677.2,686.4 678.4,686.4 679.6,688.5 680.8,686.8 682.0,687.4 683.2,679.3 684.4,682.6 685.6,684.0 686.8,685.9 688.0,690.0 689.2,684.0 690.4,681.1 691.6,686.6 692.8,685.4 694.0,677.6 695.2,687.3 696.4,683.0 697.6,680.8 698.8,681.6 700.0,684.2 701.2,684.1 702.4,685.7 703.6,683.2 704.8,682.5 706.0,684.8 707.2,682.2 708.4,685.4 709.6,688.9 710.8,687.6 712.0,687.2 713.2,687.4 714.4,688.0 715.6,684.4 716.8,683.7 718.0,684.0 719.2,685.4 720.4,678.5 721.6,681.9 722.8,683.4 724.0,686.2 725.2,685.9 726.4,682.8 727.6,680.0 728.8,680.1 730.0,683.8 731.2,687.4 732.4,689.2 733.6,687.2 734.8,683.1 736.0,683.0 737.2,685.3 738.4,684.6 739.6,683.8 740.8,680.1 742.0,681.4 743.2,682.1 744.4,683.8 745.6,684.0 746.8,683.0 748.0,683.3 749.2,687.0 750.4,681.1 751.6,683.9 752.8,687.4 754.0,685.8 755.2,683.0 756.4,678.7 757.6,677.5 758.8,683.4 760.0,689.9 761.2,686.5 762.4,682.6 763.6,685.0 764.8,681.1 766.0,682.0 767.2,682.6 768.4,682.5 769.6,685.8 770.8,681.4 772.0,684.6 773.2,681.5 774.4,678.3 775.6,679.4 776.8,679.2 778.0,684.8 779.2,683.2 780.4,681.0 781.6,682.5 782.8,680.4 784.0,676.8 785.2,672.1 786.4,675.2 787.6,681.3 788.8,673.2 790.0,674.4 791.2,676.3 792.4,677.2 793.6,674.7 794.8,677.8 796.0,681.1 797.2,680.3 798.4,677.4 799.6,676.2 800.8,678.1 802.0,680.4 803.2,683.9 804.4,685.0 805.6,681.2 806.8,680.3 808.0,682.7 809.2,682.9 810.4,680.8 811.6,678.3 812.8,680.9 814.0,679.0 815.2,674.5 816.4,680.5 817.6,677.1 818.8,673.5 820.0,677.2 821.2,679.2 822.4,678.7 823.6,675.0 824.8,675.7 826.0,673.3 827.2,676.5 828.4,681.3 829.6,673.0 830.8,664.5 832.0,674.5 833.2,673.5 834.4,679.9 835.6,678.0 836.8,680.1 838.0,677.2 839.2,677.0 840.4,683.6 841.6,674.2 842.8,666.9 844.0,672.7 845.2,669.4 846.4,661.1 847.6,670.6 848.8,670.0 850.0,666.8 851.2,670.0 852.4,669.0 853.6,667.7 854.8,670.5 856.0,665.2 857.2,660.6 858.4,665.8 859.6,660.8 860.8,662.5 862.0,665.1 863.2,661.8 864.4,663.7 865.6,664.0 866.8,660.0 868.0,661.6 869.2,661.2 870.4,671.6 871.6,666.0 872.8,662.9 874.0,666.2 875.2,666.1 876.4,669.3 877.6,671.6 878.8,668.1 880.0,657.9 881.2,666.9 882.4,665.8 883.6,655.7 884.8,652.5 886.0,660.3 887.2,656.1 888.4,658.7 889.6,654.1 890.8,654.8 892.0,660.5 893.2,662.7 894.4,662.7 895.6,659.0 896.8,655.1 898.0,650.8 899.2,657.0 900.4,649.6 901.6,643.7 902.8,652.0 904.0,644.9 905.2,648.1 906.4,654.3 907.6,667.5 908.8,664.1 910.0,653.7 911.2,641.0 912.4,642.5 913.6,642.7 914.8,655.2 916.0,667.4 917.2,663.9 918.4,644.8 919.6,649.6 920.8,652.0 922.0,644.7 923.2,653.7 924.4,640.3 925.6,636.4 926.8,650.7 928.0,650.5 929.2,634.8 930.4,644.4 931.6,643.0 932.8,646.1 934.0,635.9 935.2,633.6 936.4,639.3 937.6,640.1 938.8,638.7 940.0,655.3 941.2,653.7 942.4,647.6 943.6,638.3 944.8,627.4 946.0,629.9 947.2,623.7 948.4,644.4 949.6,628.1 950.8,620.6 952.0,631.7 953.2,642.8 954.4,634.8 955.6,633.1 956.8,628.9 958.0,616.5 959.2,612.0 960.4,623.5 961.6,625.7 962.8,625.6 964.0,617.2 965.2,618.4 966.4,623.7 967.6,616.7 968.8,602.0 970.0,617.1 971.2,619.2 972.4,596.1 973.6,616.5 974.8,622.9 976.0,617.2 977.2,620.5 978.4,615.3 979.6,614.6 980.8,627.5 982.0,634.0 983.2,606.1 984.4,621.9 985.6,612.0 986.8,620.3 988.0,599.8 989.2,597.9 990.4,614.2 991.6,602.8 992.8,604.1 994.0,622.0 995.2,624.6 996.4,611.4 997.6,598.6 998.8,588.9 1000.0,594.4 1001.2,591.5 1002.4,601.7 1003.6,612.9 1004.8,597.6 1006.0,605.8 1007.2,616.0 1008.4,586.3 1009.6,587.0 1010.8,588.3 1012.0,618.6 1013.2,614.0 1014.4,607.6 1015.6,610.3 1016.8,623.9 1018.0,629.4 1019.2,604.0 1020.4,615.1 1021.6,618.3 1022.8,620.6 1024.0,616.6 1025.2,593.8 1026.4,602.5 1027.6,619.2 1028.8,618.5 1030.0,604.2 1031.2,594.4 1032.4,583.4 1033.6,601.6 1034.8,600.9 1036.0,599.4 1037.2,608.1 1038.4,608.7 1039.6,589.9 1040.8,598.1 1042.0,595.5 1043.2,586.1 1044.4,591.7 1045.6,592.8 1046.8,569.9 1048.0,611.1 1049.2,618.4 1050.4,625.5 1051.6,651.2" fill="none" stroke="#78c1e5" stroke-width="3" stroke-linejoin="round"/><polyline points="130.0,710.4 131.2,710.4 132.4,710.4 133.6,710.4 134.8,710.5 136.0,710.5 137.2,710.4 138.4,710.4 139.6,710.4 140.8,710.5 142.0,710.4 143.2,710.3 144.4,710.3 145.6,710.4 146.8,710.4 148.0,710.4 149.2,710.4 150.4,710.4 151.6,710.4 152.8,710.4 154.0,710.5 155.2,710.5 156.4,710.4 157.6,710.4 158.8,710.5 160.0,710.5 161.2,710.5 162.4,710.4 163.6,710.5 164.8,710.4 166.0,710.4 167.2,710.4 168.4,710.4 169.6,710.4 170.8,710.4 172.0,710.4 173.2,710.3 174.4,710.4 175.6,710.4 176.8,710.4 178.0,710.4 179.2,710.3 180.4,710.3 181.6,710.4 182.8,710.4 184.0,710.4 185.2,710.4 186.4,710.3 187.6,710.3 188.8,710.4 190.0,710.3 191.2,710.3 192.4,710.3 193.6,710.3 194.8,710.3 196.0,710.4 197.2,710.4 198.4,710.4 199.6,710.4 200.8,710.4 202.0,710.3 203.2,710.3 204.4,710.4 205.6,710.3 206.8,710.3 208.0,710.3 209.2,710.3 210.4,710.3 211.6,710.3 212.8,710.3 214.0,710.2 215.2,710.2 216.4,710.2 217.6,710.2 218.8,710.2 220.0,710.2 221.2,710.3 222.4,710.2 223.6,710.1 224.8,710.2 226.0,710.2 227.2,710.2 228.4,710.3 229.6,710.2 230.8,710.1 232.0,710.2 233.2,710.2 234.4,710.3 235.6,710.2 236.8,710.0 238.0,710.0 239.2,710.1 240.4,710.2 241.6,710.1 242.8,710.0 244.0,710.1 245.2,710.1 246.4,709.9 247.6,710.0 248.8,710.1 250.0,710.1 251.2,710.1 252.4,710.0 253.6,710.0 254.8,710.1 256.0,710.2 257.2,710.1 258.4,709.9 259.6,709.9 260.8,710.1 262.0,709.9 263.2,709.8 264.4,709.9 265.6,709.9 266.8,710.0 268.0,710.0 269.2,709.9 270.4,709.8 271.6,710.0 272.8,710.0 274.0,710.0 275.2,710.0 276.4,710.0 277.6,710.0 278.8,709.9 280.0,709.8 281.2,709.8 282.4,709.9 283.6,709.8 284.8,709.8 286.0,710.1 287.2,710.1 288.4,709.9 289.6,709.9 290.8,709.8 292.0,709.8 293.2,709.7 294.4,709.7 295.6,709.8 296.8,709.8 298.0,709.9 299.2,709.8 300.4,709.8 301.6,709.8 302.8,709.5 304.0,709.7 305.2,709.7 306.4,709.8 307.6,709.7 308.8,709.5 310.0,709.4 311.2,709.2 312.4,709.2 313.6,709.5 314.8,709.4 316.0,709.0 317.2,709.1 318.4,708.9 319.6,709.1 320.8,709.4 322.0,709.2 323.2,709.0 324.4,709.0 325.6,709.1 326.8,709.0 328.0,708.9 329.2,709.2 330.4,709.0 331.6,708.8 332.8,708.8 334.0,708.8 335.2,708.6 336.4,708.7 337.6,708.6 338.8,708.4 340.0,708.7 341.2,708.8 342.4,708.7 343.6,708.6 344.8,708.5 346.0,708.5 347.2,708.3 348.4,708.3 349.6,708.2 350.8,708.4 352.0,708.6 353.2,708.6 354.4,708.5 355.6,708.3 356.8,708.3 358.0,708.6 359.2,708.1 360.4,708.0 361.6,708.3 362.8,708.4 364.0,708.5 365.2,708.4 366.4,708.3 367.6,708.6 368.8,708.3 370.0,708.0 371.2,708.2 372.4,707.9 373.6,707.4 374.8,707.4 376.0,707.6 377.2,707.6 378.4,707.7 379.6,707.8 380.8,707.7 382.0,707.7 383.2,707.9 384.4,707.6 385.6,707.4 386.8,707.2 388.0,707.5 389.2,707.0 390.4,707.0 391.6,707.2 392.8,707.4 394.0,707.5 395.2,707.3 396.4,707.5 397.6,707.7 398.8,707.5 400.0,707.2 401.2,707.6 402.4,707.7 403.6,707.8 404.8,707.6 406.0,707.0 407.2,706.6 408.4,706.4 409.6,706.5 410.8,707.1 412.0,707.5 413.2,707.1 414.4,706.9 415.6,706.8 416.8,706.4 418.0,705.4 419.2,706.8 420.4,707.1 421.6,706.7 422.8,706.6 424.0,706.6 425.2,705.5 426.4,705.1 427.6,706.1 428.8,705.6 430.0,705.4 431.2,705.8 432.4,705.7 433.6,705.6 434.8,705.8 436.0,704.8 437.2,705.3 438.4,705.8 439.6,705.2 440.8,704.6 442.0,704.6 443.2,704.9 444.4,704.5 445.6,705.6 446.8,705.4 448.0,705.3 449.2,705.3 450.4,705.0 451.6,704.9 452.8,705.2 454.0,704.7 455.2,704.9 456.4,705.5 457.6,705.0 458.8,705.0 460.0,704.3 461.2,704.0 462.4,704.0 463.6,703.5 464.8,704.0 466.0,703.5 467.2,703.1 468.4,702.8 469.6,703.5 470.8,703.4 472.0,703.4 473.2,702.3 474.4,703.4 475.6,703.6 476.8,702.8 478.0,702.1 479.2,703.2 480.4,704.3 481.6,703.2 482.8,703.7 484.0,702.8 485.2,702.8 486.4,704.4 487.6,703.5 488.8,703.1 490.0,701.6 491.2,703.0 492.4,701.3 493.6,698.5 494.8,702.3 496.0,702.7 497.2,702.0 498.4,702.3 499.6,703.3 500.8,702.8 502.0,701.1 503.2,700.7 504.4,699.9 505.6,701.3 506.8,700.7 508.0,697.7 509.2,701.2 510.4,702.0 511.6,700.3 512.8,700.9 514.0,700.7 515.2,700.5 516.4,700.9 517.6,699.6 518.8,698.0 520.0,699.4 521.2,701.3 522.4,700.6 523.6,700.4 524.8,699.6 526.0,699.0 527.2,698.2 528.4,698.9 529.6,698.8 530.8,699.2 532.0,698.9 533.2,698.1 534.4,697.6 535.6,697.2 536.8,697.7 538.0,696.7 539.2,697.7 540.4,698.5 541.6,698.9 542.8,699.4 544.0,699.5 545.2,699.4 546.4,696.2 547.6,697.7 548.8,698.1 550.0,697.1 551.2,695.5 552.4,696.0 553.6,699.3 554.8,698.1 556.0,695.5 557.2,693.6 558.4,693.2 559.6,694.4 560.8,698.6 562.0,701.1 563.2,698.4 564.4,696.3 565.6,691.2 566.8,697.6 568.0,697.6 569.2,696.9 570.4,697.7 571.6,696.0 572.8,694.9 574.0,696.7 575.2,696.2 576.4,695.0 577.6,694.2 578.8,694.5 580.0,694.3 581.2,696.4 582.4,693.5 583.6,692.5 584.8,693.9 586.0,693.6 587.2,693.4 588.4,694.8 589.6,693.1 590.8,693.2 592.0,692.9 593.2,693.1 594.4,694.6 595.6,694.1 596.8,692.7 598.0,690.3 599.2,693.8 600.4,693.6 601.6,692.9 602.8,687.9 604.0,692.5 605.2,689.3 606.4,688.4 607.6,690.0 608.8,690.9 610.0,689.9 611.2,689.4 612.4,689.2 613.6,687.4 614.8,688.7 616.0,689.0 617.2,689.2 618.4,688.0 619.6,688.1 620.8,687.6 622.0,686.4 623.2,683.9 624.4,685.6 625.6,685.7 626.8,687.2 628.0,687.1 629.2,687.5 630.4,686.6 631.6,687.1 632.8,688.4 634.0,688.2 635.2,686.8 636.4,683.9 637.6,687.9 638.8,687.6 640.0,687.2 641.2,686.9 642.4,688.2 643.6,683.2 644.8,682.2 646.0,686.5 647.2,683.4 648.4,686.5 649.6,688.3 650.8,687.4 652.0,687.8 653.2,682.3 654.4,682.6 655.6,686.4 656.8,686.6 658.0,687.8 659.2,684.0 660.4,683.7 661.6,685.1 662.8,684.7 664.0,683.4 665.2,680.7 666.4,678.3 667.6,683.5 668.8,684.9 670.0,682.9 671.2,683.2 672.4,683.5 673.6,679.2 674.8,676.9 676.0,679.8 677.2,682.1 678.4,681.4 679.6,683.1 680.8,681.4 682.0,681.9 683.2,674.8 684.4,678.2 685.6,678.8 686.8,681.4 688.0,685.8 689.2,680.0 690.4,675.6 691.6,681.2 692.8,681.2 694.0,673.9 695.2,682.5 696.4,677.5 697.6,674.5 698.8,675.0 700.0,678.6 701.2,679.2 702.4,680.9 703.6,678.7 704.8,678.6 706.0,680.6 707.2,677.7 708.4,681.7 709.6,684.7 710.8,682.0 712.0,682.0 713.2,681.6 714.4,681.9 715.6,678.7 716.8,677.9 718.0,679.0 719.2,680.8 720.4,673.5 721.6,676.6 722.8,678.1 724.0,681.0 725.2,680.6 726.4,676.9 727.6,674.7 728.8,674.9 730.0,678.2 731.2,682.5 732.4,683.7 733.6,680.8 734.8,677.0 736.0,676.7 737.2,679.9 738.4,679.7 739.6,678.8 740.8,675.2 742.0,676.5 743.2,676.9 744.4,677.7 745.6,678.2 746.8,677.8 748.0,677.6 749.2,679.4 750.4,674.6 751.6,677.9 752.8,681.1 754.0,680.8 755.2,677.0 756.4,673.9 757.6,673.0 758.8,676.3 760.0,685.0 761.2,681.3 762.4,676.7 763.6,678.6 764.8,675.1 766.0,675.8 767.2,675.6 768.4,675.6 769.6,680.5 770.8,676.7 772.0,679.9 773.2,675.3 774.4,671.6 775.6,674.5 776.8,673.6 778.0,677.9 779.2,677.0 780.4,675.6 781.6,677.6 782.8,674.9 784.0,669.1 785.2,665.4 786.4,669.3 787.6,675.2 788.8,666.8 790.0,669.4 791.2,672.2 792.4,672.0 793.6,668.0 794.8,669.8 796.0,674.7 797.2,674.9 798.4,671.9 799.6,671.0 800.8,672.8 802.0,674.2 803.2,677.5 804.4,678.9 805.6,674.1 806.8,673.7 808.0,676.4 809.2,676.8 810.4,674.1 811.6,671.1 812.8,673.9 814.0,672.8 815.2,667.7 816.4,674.1 817.6,670.3 818.8,665.6 820.0,669.1 821.2,672.7 822.4,673.0 823.6,668.0 824.8,667.7 826.0,665.6 827.2,668.0 828.4,674.9 829.6,664.8 830.8,655.6 832.0,666.2 833.2,666.3 834.4,671.3 835.6,668.8 836.8,671.4 838.0,669.8 839.2,667.5 840.4,674.9 841.6,666.1 842.8,660.0 844.0,666.1 845.2,662.3 846.4,654.6 847.6,662.9 848.8,662.5 850.0,660.5 851.2,662.0 852.4,659.8 853.6,659.7 854.8,664.2 856.0,658.1 857.2,652.4 858.4,659.0 859.6,650.7 860.8,653.3 862.0,656.9 863.2,653.8 864.4,653.9 865.6,653.3 866.8,650.9 868.0,654.9 869.2,654.9 870.4,664.4 871.6,659.4 872.8,654.4 874.0,657.2 875.2,659.9 876.4,661.3 877.6,662.3 878.8,659.2 880.0,648.0 881.2,656.2 882.4,653.6 883.6,642.1 884.8,641.6 886.0,652.0 887.2,648.5 888.4,650.5 889.6,643.5 890.8,643.7 892.0,649.4 893.2,651.1 894.4,649.5 895.6,645.8 896.8,642.9 898.0,640.8 899.2,647.7 900.4,641.1 901.6,634.3 902.8,641.7 904.0,635.8 905.2,637.5 906.4,640.5 907.6,656.2 908.8,655.6 910.0,644.8 911.2,629.7 912.4,629.5 913.6,630.1 914.8,641.7 916.0,654.9 917.2,652.8 918.4,631.7 919.6,636.3 920.8,637.0 922.0,632.1 923.2,641.9 924.4,628.6 925.6,624.0 926.8,637.1 928.0,636.7 929.2,619.4 930.4,628.7 931.6,626.4 932.8,630.7 934.0,619.1 935.2,617.0 936.4,623.4 937.6,620.6 938.8,619.9 940.0,639.2 941.2,639.4 942.4,633.5 943.6,618.3 944.8,613.0 946.0,617.1 947.2,609.8 948.4,629.4 949.6,609.5 950.8,601.5 952.0,610.8 953.2,621.0 954.4,615.2 955.6,612.6 956.8,610.4 958.0,599.6 959.2,597.4 960.4,606.7 961.6,605.9 962.8,607.3 964.0,601.1 965.2,602.5 966.4,609.0 967.6,602.8 968.8,587.9 970.0,597.7 971.2,598.8 972.4,579.2 973.6,602.4 974.8,605.4 976.0,596.2 977.2,604.8 978.4,600.1 979.6,597.6 980.8,609.0 982.0,618.1 983.2,589.0 984.4,605.7 985.6,596.1 986.8,604.6 988.0,581.4 989.2,580.6 990.4,596.5 991.6,581.5 992.8,581.6 994.0,596.5 995.2,602.5 996.4,591.6 997.6,576.6 998.8,560.2 1000.0,569.7 1001.2,571.4 1002.4,582.0 1003.6,588.3 1004.8,577.0 1006.0,587.1 1007.2,597.5 1008.4,564.4 1009.6,562.2 1010.8,564.0 1012.0,595.4 1013.2,594.9 1014.4,593.6 1015.6,592.5 1016.8,603.5 1018.0,605.8 1019.2,577.1 1020.4,586.2 1021.6,601.3 1022.8,601.1 1024.0,595.3 1025.2,570.7 1026.4,582.3 1027.6,603.9 1028.8,601.5 1030.0,586.1 1031.2,578.7 1032.4,564.0 1033.6,579.4 1034.8,576.0 1036.0,573.5 1037.2,587.7 1038.4,587.2 1039.6,566.4 1040.8,573.3 1042.0,576.7 1043.2,567.9 1044.4,561.4 1045.6,563.9 1046.8,542.7 1048.0,571.2 1049.2,600.2 1050.4,612.6 1051.6,640.1" fill="none" stroke="#68b3df" stroke-width="3" stroke-linejoin="round"/><polyline points="130.0,710.3 131.2,710.2 132.4,710.2 133.6,710.3 134.8,710.3 136.0,710.3 137.2,710.3 138.4,710.2 139.6,710.3 140.8,710.3 142.0,710.2 143.2,710.2 144.4,710.1 145.6,710.3 146.8,710.3 148.0,710.2 149.2,710.2 150.4,710.3 151.6,710.2 152.8,710.3 154.0,710.3 155.2,710.3 156.4,710.3 157.6,710.3 158.8,710.3 160.0,710.3 161.2,710.3 162.4,710.3 163.6,710.3 164.8,710.3 166.0,710.2 167.2,710.2 168.4,710.2 169.6,710.2 170.8,710.2 172.0,710.2 173.2,710.2 174.4,710.2 175.6,710.2 176.8,710.3 178.0,710.2 179.2,710.1 180.4,710.2 181.6,710.3 182.8,710.3 184.0,710.3 185.2,710.3 186.4,710.1 187.6,710.2 188.8,710.2 190.0,710.2 191.2,710.2 192.4,710.2 193.6,710.2 194.8,710.1 196.0,710.3 197.2,710.2 198.4,710.2 199.6,710.3 200.8,710.2 202.0,710.1 203.2,710.1 204.4,710.2 205.6,710.2 206.8,710.1 208.0,710.1 209.2,710.1 210.4,710.1 211.6,710.1 212.8,710.1 214.0,710.1 215.2,710.0 216.4,710.1 217.6,710.0 218.8,710.0 220.0,710.0 221.2,710.1 222.4,710.1 223.6,709.9 224.8,710.0 226.0,710.0 227.2,710.0 228.4,710.1 229.6,710.0 230.8,710.0 232.0,710.0 233.2,710.0 234.4,710.0 235.6,709.9 236.8,709.8 238.0,709.8 239.2,709.9 240.4,710.0 241.6,709.9 242.8,709.8 244.0,709.8 245.2,709.9 246.4,709.6 247.6,709.8 248.8,709.9 250.0,709.8 251.2,709.8 252.4,709.7 253.6,709.8 254.8,709.9 256.0,710.0 257.2,709.9 258.4,709.7 259.6,709.7 260.8,709.9 262.0,709.7 263.2,709.6 264.4,709.7 265.6,709.7 266.8,709.8 268.0,709.9 269.2,709.7 270.4,709.6 271.6,709.7 272.8,709.8 274.0,709.7 275.2,709.8 276.4,709.7 277.6,709.7 278.8,709.6 280.0,709.5 281.2,709.6 282.4,709.6 283.6,709.5 284.8,709.5 286.0,709.8 287.2,709.9 288.4,709.6 289.6,709.5 290.8,709.5 292.0,709.5 293.2,709.4 294.4,709.4 295.6,709.5 296.8,709.5 298.0,709.6 299.2,709.6 300.4,709.5 301.6,709.5 302.8,709.1 304.0,709.3 305.2,709.3 306.4,709.4 307.6,709.4 308.8,709.2 310.0,709.0 311.2,708.8 312.4,708.9 313.6,709.1 314.8,709.0 316.0,708.5 317.2,708.6 318.4,708.4 319.6,708.7 320.8,709.0 322.0,708.7 323.2,708.6 324.4,708.7 325.6,708.7 326.8,708.6 328.0,708.5 329.2,708.7 330.4,708.5 331.6,708.1 332.8,708.1 334.0,708.1 335.2,707.9 336.4,708.1 337.6,708.0 338.8,707.7 340.0,708.1 341.2,708.2 342.4,708.2 343.6,707.9 344.8,707.9 346.0,708.0 347.2,707.7 348.4,707.6 349.6,707.5 350.8,707.6 352.0,707.8 353.2,707.9 354.4,707.9 355.6,707.5 356.8,707.4 358.0,707.8 359.2,707.3 360.4,707.3 361.6,707.7 362.8,707.8 364.0,707.8 365.2,707.6 366.4,707.2 367.6,707.9 368.8,707.5 370.0,707.1 371.2,707.4 372.4,706.9 373.6,706.6 374.8,706.7 376.0,706.7 377.2,706.7 378.4,706.9 379.6,707.0 380.8,707.0 382.0,707.0 383.2,706.9 384.4,706.5 385.6,706.5 386.8,706.6 388.0,706.8 389.2,706.4 390.4,706.4 391.6,706.4 392.8,706.6 394.0,706.6 395.2,706.3 396.4,706.6 397.6,706.9 398.8,706.6 400.0,706.4 401.2,706.8 402.4,706.8 403.6,706.8 404.8,706.6 406.0,706.1 407.2,705.6 408.4,705.3 409.6,705.4 410.8,705.6 412.0,706.5 413.2,705.9 414.4,705.6 415.6,705.7 416.8,705.6 418.0,704.3 419.2,705.7 420.4,705.9 421.6,705.5 422.8,705.3 424.0,705.2 425.2,704.2 426.4,703.8 427.6,705.1 428.8,704.7 430.0,704.2 431.2,704.3 432.4,704.5 433.6,703.9 434.8,704.5 436.0,703.7 437.2,704.3 438.4,704.8 439.6,703.9 440.8,703.3 442.0,703.2 443.2,703.5 444.4,703.2 445.6,704.3 446.8,704.3 448.0,704.0 449.2,704.0 450.4,703.5 451.6,703.3 452.8,703.5 454.0,703.0 455.2,703.5 456.4,704.4 457.6,703.7 458.8,703.4 460.0,702.8 461.2,702.5 462.4,702.3 463.6,701.9 464.8,702.7 466.0,702.3 467.2,701.3 468.4,701.2 469.6,702.2 470.8,701.8 472.0,701.8 473.2,700.9 474.4,701.6 475.6,701.7 476.8,700.7 478.0,700.2 479.2,701.6 480.4,702.8 481.6,701.5 482.8,701.4 484.0,700.4 485.2,700.7 486.4,702.3 487.6,701.5 488.8,701.4 490.0,699.5 491.2,701.1 492.4,699.6 493.6,696.2 494.8,699.7 496.0,699.2 497.2,700.0 498.4,700.3 499.6,701.1 500.8,700.2 502.0,698.5 503.2,698.1 504.4,697.6 505.6,699.8 506.8,698.5 508.0,695.0 509.2,698.7 510.4,700.0 511.6,698.2 512.8,698.2 514.0,697.9 515.2,697.3 516.4,698.6 517.6,696.9 518.8,694.7 520.0,696.4 521.2,698.0 522.4,697.3 523.6,697.3 524.8,697.1 526.0,696.6 527.2,695.5 528.4,695.6 529.6,695.5 530.8,696.6 532.0,696.6 533.2,695.1 534.4,694.0 535.6,693.8 536.8,694.3 538.0,693.3 539.2,694.3 540.4,695.3 541.6,695.5 542.8,695.9 544.0,696.0 545.2,695.7 546.4,693.3 547.6,694.9 548.8,695.1 550.0,693.3 551.2,691.7 552.4,692.9 553.6,696.1 554.8,695.1 556.0,692.9 557.2,690.7 558.4,689.7 559.6,690.6 560.8,695.4 562.0,697.5 563.2,694.3 564.4,691.9 565.6,687.3 566.8,694.5 568.0,693.6 569.2,693.5 570.4,694.2 571.6,692.7 572.8,691.7 574.0,693.3 575.2,692.3 576.4,690.9 577.6,690.4 578.8,689.5 580.0,689.3 581.2,692.3 582.4,689.1 583.6,687.8 584.8,690.1 586.0,690.1 587.2,689.9 588.4,691.1 589.6,688.7 590.8,688.9 592.0,688.6 593.2,688.7 594.4,690.0 595.6,688.8 596.8,688.2 598.0,686.6 599.2,690.2 600.4,689.6 601.6,688.2 602.8,683.0 604.0,687.6 605.2,684.6 606.4,683.3 607.6,684.9 608.8,686.5 610.0,684.8 611.2,684.1 612.4,683.9 613.6,681.5 614.8,683.4 616.0,684.0 617.2,683.1 618.4,681.5 619.6,683.1 620.8,682.3 622.0,680.1 623.2,676.8 624.4,678.9 625.6,679.3 626.8,682.3 628.0,680.4 629.2,683.1 630.4,682.2 631.6,682.2 632.8,682.8 634.0,683.4 635.2,681.6 636.4,676.5 637.6,680.8 638.8,681.3 640.0,681.5 641.2,681.8 642.4,682.4 643.6,676.0 644.8,673.9 646.0,681.2 647.2,677.8 648.4,679.9 649.6,680.5 650.8,680.4 652.0,680.7 653.2,674.1 654.4,673.6 655.6,678.8 656.8,681.0 658.0,681.8 659.2,676.0 660.4,676.7 661.6,680.1 662.8,679.1 664.0,677.3 665.2,674.1 666.4,670.7 667.6,675.4 668.8,677.1 670.0,677.2 671.2,676.6 672.4,676.9 673.6,672.9 674.8,669.8 676.0,674.1 677.2,676.1 678.4,673.0 679.6,674.7 680.8,672.8 682.0,673.5 683.2,667.8 684.4,669.9 685.6,670.7 686.8,673.1 688.0,677.1 689.2,671.8 690.4,668.3 691.6,673.7 692.8,673.1 694.0,665.9 695.2,676.2 696.4,669.4 697.6,666.6 698.8,665.2 700.0,669.0 701.2,669.5 702.4,671.3 703.6,669.0 704.8,669.5 706.0,672.0 707.2,668.2 708.4,676.8 709.6,679.8 710.8,674.5 712.0,674.6 713.2,673.6 714.4,673.0 715.6,669.7 716.8,668.7 718.0,671.1 719.2,672.9 720.4,666.3 721.6,670.6 722.8,672.4 724.0,674.0 725.2,673.7 726.4,670.1 727.6,668.2 728.8,667.3 730.0,667.4 731.2,673.8 732.4,677.1 733.6,673.3 734.8,669.4 736.0,669.7 737.2,671.4 738.4,671.9 739.6,670.5 740.8,667.6 742.0,668.1 743.2,665.6 744.4,669.5 745.6,672.0 746.8,671.0 748.0,670.2 749.2,670.1 750.4,665.9 751.6,670.1 752.8,671.3 754.0,672.6 755.2,669.8 756.4,664.5 757.6,663.8 758.8,669.2 760.0,678.3 761.2,673.8 762.4,668.9 763.6,669.7 764.8,666.6 766.0,669.0 767.2,668.9 768.4,667.3 769.6,670.8 770.8,668.1 772.0,671.1 773.2,667.0 774.4,662.9 775.6,666.1 776.8,664.9 778.0,670.3 779.2,668.7 780.4,664.4 781.6,667.4 782.8,666.7 784.0,659.3 785.2,655.7 786.4,659.3 787.6,667.4 788.8,658.6 790.0,661.2 791.2,664.7 792.4,663.9 793.6,657.0 794.8,660.1 796.0,666.6 797.2,667.5 798.4,661.5 799.6,659.9 800.8,663.8 802.0,666.4 803.2,668.0 804.4,669.8 805.6,665.6 806.8,661.7 808.0,665.3 809.2,668.4 810.4,665.5 811.6,660.1 812.8,661.8 814.0,661.3 815.2,656.9 816.4,663.4 817.6,657.6 818.8,654.8 820.0,658.5 821.2,661.9 822.4,662.5 823.6,655.9 824.8,655.7 826.0,657.5 827.2,653.9 828.4,661.8 829.6,651.6 830.8,644.5 832.0,654.5 833.2,654.8 834.4,660.4 835.6,658.2 836.8,658.6 838.0,651.8 839.2,653.2 840.4,662.4 841.6,653.9 842.8,645.2 844.0,649.2 845.2,649.5 846.4,638.1 847.6,649.2 848.8,653.0 850.0,652.9 851.2,649.3 852.4,644.6 853.6,644.4 854.8,649.2 856.0,644.0 857.2,640.1 858.4,645.8 859.6,640.1 860.8,644.0 862.0,646.2 863.2,644.0 864.4,644.0 865.6,642.3 866.8,638.8 868.0,642.2 869.2,643.7 870.4,653.7 871.6,646.4 872.8,640.3 874.0,642.0 875.2,644.2 876.4,646.2 877.6,646.8 878.8,643.4 880.0,633.2 881.2,642.0 882.4,640.5 883.6,626.9 884.8,625.1 886.0,636.8 887.2,631.5 888.4,634.7 889.6,625.1 890.8,623.8 892.0,632.4 893.2,635.7 894.4,633.2 895.6,630.9 896.8,627.8 898.0,624.2 899.2,634.0 900.4,624.5 901.6,618.0 902.8,623.8 904.0,617.9 905.2,617.0 906.4,624.7 907.6,642.2 908.8,633.0 910.0,625.0 911.2,612.2 912.4,612.0 913.6,612.5 914.8,618.1 916.0,636.3 917.2,630.1 918.4,612.4 919.6,615.3 920.8,614.1 922.0,605.8 923.2,620.9 924.4,610.6 925.6,608.1 926.8,620.8 928.0,613.6 929.2,596.2 930.4,608.9 931.6,604.8 932.8,611.4 934.0,598.0 935.2,595.8 936.4,606.8 937.6,599.8 938.8,600.1 940.0,621.5 941.2,609.8 942.4,609.7 943.6,595.1 944.8,591.8 946.0,598.3 947.2,592.0 948.4,607.1 949.6,590.5 950.8,580.5 952.0,585.9 953.2,594.2 954.4,589.1 955.6,584.0 956.8,586.0 958.0,571.4 959.2,568.8 960.4,583.1 961.6,584.3 962.8,586.6 964.0,578.7 965.2,576.9 966.4,576.0 967.6,572.0 968.8,564.4 970.0,571.1 971.2,574.7 972.4,559.2 973.6,578.1 974.8,580.8 976.0,568.8 977.2,576.7 978.4,573.2 979.6,565.9 980.8,580.6 982.0,595.6 983.2,566.0 984.4,573.1 985.6,568.7 986.8,577.3 988.0,551.3 989.2,550.6 990.4,575.5 991.6,564.1 992.8,557.8 994.0,574.0 995.2,574.2 996.4,556.0 997.6,546.6 998.8,530.8 1000.0,540.2 1001.2,532.3 1002.4,549.6 1003.6,557.9 1004.8,548.2 1006.0,558.6 1007.2,564.4 1008.4,535.1 1009.6,536.8 1010.8,537.5 1012.0,566.9 1013.2,564.2 1014.4,563.4 1015.6,565.6 1016.8,573.0 1018.0,567.1 1019.2,542.3 1020.4,550.1 1021.6,569.4 1022.8,569.7 1024.0,568.7 1025.2,549.2 1026.4,554.4 1027.6,567.0 1028.8,560.9 1030.0,548.0 1031.2,547.6 1032.4,535.4 1033.6,551.9 1034.8,542.4 1036.0,536.0 1037.2,553.4 1038.4,556.3 1039.6,532.0 1040.8,537.8 1042.0,540.5 1043.2,533.4 1044.4,527.2 1045.6,533.5 1046.8,516.7 1048.0,549.0 1049.2,549.5 1050.4,540.5 1051.6,563.4" fill="none" stroke="#5aa4d5" stroke-width="3" stroke-linejoin="round"/><line x1="130" y1="711.2" x2="1052" y2="711.2" stroke="#6e7682" stroke-width="1.4"/></svg>
<div class="t" style="left:49.00px;width:60px;text-align:right;top:502.66px;font-size:18px;font-weight:400;letter-spacing:0px;color:#1b2430;">400</div>
<div class="t" style="left:49.00px;width:60px;text-align:right;top:602.41px;font-size:18px;font-weight:400;letter-spacing:0px;color:#1b2430;">200</div>
<div class="t" style="left:49.00px;width:60px;text-align:right;top:702.16px;font-size:18px;font-weight:400;letter-spacing:0px;color:#1b2430;">0</div>
<div class="t" style="left:91.50px;width:160px;text-align:center;top:726.36px;font-size:18px;font-weight:400;letter-spacing:0px;color:#1b2430;">Jan 01, 2023</div>
<div class="t" style="left:261.00px;width:160px;text-align:center;top:726.36px;font-size:18px;font-weight:400;letter-spacing:0px;color:#1b2430;">Jul 01, 2023</div>
<div class="t" style="left:432.20px;width:160px;text-align:center;top:726.36px;font-size:18px;font-weight:400;letter-spacing:0px;color:#1b2430;">Jan 01, 2024</div>
<div class="t" style="left:601.80px;width:160px;text-align:center;top:726.36px;font-size:18px;font-weight:400;letter-spacing:0px;color:#1b2430;">Jul 01, 2024</div>
<div class="t" style="left:773.50px;width:160px;text-align:center;top:726.36px;font-size:18px;font-weight:400;letter-spacing:0px;color:#1b2430;">Jan 01, 2025</div>
<div class="t" style="left:942.30px;width:160px;text-align:center;top:726.36px;font-size:18px;font-weight:400;letter-spacing:0px;color:#1b2430;">Jul 01, 2025</div>
<div class="t" style="left:491.90px;width:200px;text-align:center;top:749.79px;font-size:19.5px;font-weight:700;letter-spacing:0px;color:#1b2430;">Booking Date</div>
<div class="t" style="left:-38.5px;top:600px;width:200px;height:20px;text-align:center;font-size:19.5px;font-weight:700;color:#1b2430;transform:rotate(-90deg);line-height:20px">Count of Records</div>
<div class="t" style="left:1083.60px;top:498.89px;font-size:19.5px;font-weight:700;letter-spacing:0px;color:#1b2430;">Booking Status</div>
<div class="a" style="left:1083.5px;top:530.7px;width:18px;height:10.2px;background:#a8cde6;border-top:2px solid #3f8fcf"></div>
<div class="t" style="left:1108.40px;top:526.16px;font-size:18px;font-weight:400;letter-spacing:0px;color:#1b2430;">cancelled</div>
<div class="a" style="left:1083.5px;top:557.8px;width:18px;height:10.2px;background:#b0d5ec;border-top:2px solid #4ea1da"></div>
<div class="t" style="left:1108.40px;top:553.23px;font-size:18px;font-weight:400;letter-spacing:0px;color:#1b2430;">completed</div>
<div class="a" style="left:1083.5px;top:584.8px;width:18px;height:10.2px;background:#bfdff0;border-top:2px solid #5cb2e0"></div>
<div class="t" style="left:1108.40px;top:580.30px;font-size:18px;font-weight:400;letter-spacing:0px;color:#1b2430;">confirmed</div>
<div class="a" style="left:1083.5px;top:611.9px;width:18px;height:10.2px;background:#cfe8f3;border-top:2px solid #80c8e8"></div>
<div class="t" style="left:1108.40px;top:607.37px;font-size:18px;font-weight:400;letter-spacing:0px;color:#1b2430;">pending</div>
<svg width="1919" height="1077"><path d="M1415.00,527.40 A120.8,120.8 0 0 1 1430.77,528.43 L1422.90,588.22 A60.5,60.5 0 0 0 1415.00,587.70 Z" fill="#a6daee" stroke="#a6daee" stroke-width="0.6"/><path d="M1430.77,528.43 A120.8,120.8 0 0 1 1535.34,637.67 L1475.27,642.93 A60.5,60.5 0 0 0 1422.90,588.22 Z" fill="#8ccbe9" stroke="#8ccbe9" stroke-width="0.6"/><path d="M1535.34,637.67 A120.8,120.8 0 0 1 1415.84,769.00 L1415.42,708.70 A60.5,60.5 0 0 0 1475.27,642.93 Z" fill="#72bbe3" stroke="#72bbe3" stroke-width="0.6"/><path d="M1415.84,769.00 A120.8,120.8 0 1 1 1415.00,527.40 L1415.00,587.70 A60.5,60.5 0 1 0 1415.42,708.70 Z" fill="#60a7d4" stroke="#60a7d4" stroke-width="0.6"/><path d="M1724.00,527.40 A120.8,120.8 0 0 1 1724.00,769.00 L1724.00,708.70 A60.5,60.5 0 0 0 1724.00,587.70 Z" fill="#72bbe3" stroke="#72bbe3" stroke-width="0.6"/><path d="M1724.00,769.00 A120.8,120.8 0 0 1 1724.00,527.40 L1724.00,587.70 A60.5,60.5 0 0 0 1724.00,708.70 Z" fill="#60a7d4" stroke="#60a7d4" stroke-width="0.6"/></svg>
<div class="t" style="left:1275.00px;width:280px;text-align:center;top:501.89px;font-size:19.5px;font-weight:700;letter-spacing:0px;color:#1b2430;">Total Num Active Hosts</div>
<div class="t" style="left:1584.00px;width:280px;text-align:center;top:501.89px;font-size:19.5px;font-weight:700;letter-spacing:0px;color:#1b2430;">Total Revenue</div>
<svg width="1919" height="1077"><line x1="110.4" y1="871.5" x2="1099" y2="871.5" stroke="#dcdce2" stroke-width="1.2"/><line x1="91" y1="871.5" x2="97.5" y2="871.5" stroke="#9aa0a8" stroke-width="1.2"/><line x1="110.4" y1="938.0" x2="1099" y2="938.0" stroke="#dcdce2" stroke-width="1.2"/><line x1="91" y1="938.0" x2="97.5" y2="938.0" stroke="#9aa0a8" stroke-width="1.2"/><line x1="110.4" y1="1004.5" x2="1099" y2="1004.5" stroke="#dcdce2" stroke-width="1.2"/><line x1="91" y1="1004.5" x2="97.5" y2="1004.5" stroke="#9aa0a8" stroke-width="1.2"/><line x1="91" y1="1071.0" x2="97.5" y2="1071.0" stroke="#9aa0a8" stroke-width="1.2"/><line x1="110.4" y1="871.5" x2="110.4" y2="1080" stroke="#dcdce2" stroke-width="1.2"/><line x1="335.3" y1="871.5" x2="335.3" y2="1080" stroke="#dcdce2" stroke-width="1.2"/><line x1="559" y1="871.5" x2="559" y2="1080" stroke="#dcdce2" stroke-width="1.2"/><line x1="783.8" y1="871.5" x2="783.8" y2="1080" stroke="#dcdce2" stroke-width="1.2"/><line x1="1007.4" y1="871.5" x2="1007.4" y2="1080" stroke="#dcdce2" stroke-width="1.2"/><polyline points="110.4,1004.6 151.2,937.3 165.5,903.8 179.8,971.0 186.4,937.0 194.0,950.0 200.7,954.0 208.4,947.9 215.0,907.0 221.6,937.0 228.2,937.0 235.5,920.0 242.5,960.0 249.1,960.0 256.8,961.0 263.4,954.5 270.7,941.7 277.7,967.2 284.8,952.0 292.0,916.0 298.6,949.0 305.2,943.5 313.0,928.0 320.0,922.5 327.3,928.0 330.0,935.0 333.3,950.0 340.8,942.5 348.3,956.7 355.0,947.5 361.7,930.0 369.2,937.5 375.8,942.5 383.3,950.8 389.2,934.2 396.7,945.8 403.3,952.5 410.0,935.0 417.5,936.7 425.0,936.7 431.7,936.7 439.2,934.2 445.8,935.8 453.3,933.3 460.0,945.0 466.7,945.8 473.3,949.2 480.8,937.5 488.3,942.5 495.0,937.5 501.7,945.0 509.2,928.3 515.8,938.3 523.3,926.7 530.0,941.7 536.7,925.8 544.2,939.2 550.8,943.3 557.5,944.2 565.0,930.0 571.7,941.7 579.2,936.7 585.8,938.3 593.3,936.7 600.0,938.3 607.5,937.5 614.2,938.3 621.7,935.8 628.3,937.5 635.0,935.8 640.0,938.8 642.5,938.3 648.8,935.0 656.2,940.6 670.0,941.2 677.5,943.1 683.8,941.2 697.5,939.4 712.5,943.1 720.0,941.9 726.0,947.5 732.5,940.0 740.0,946.2 753.8,941.2 768.0,949.4 775.6,933.1 781.2,937.5 789.4,943.0 796.2,938.1 810.0,942.5 823.8,945.0 830.0,941.9 838.0,946.2 845.0,940.6 860.0,940.6 873.0,950.0 880.0,943.8 894.4,939.4 901.2,941.9 913.8,940.0 922.5,941.2 928.8,946.2 936.2,938.8 957.5,941.2 967.5,939.4 980.0,941.2 998.8,938.1 1013.8,943.8 1020.0,939.4 1035.0,941.9 1048.8,943.1 1056.2,942.5 1062.5,945.6 1076.2,948.1 1083.8,952.5 1091.2,970.0 1097.5,1012.0" fill="none" stroke="#5ab4df" stroke-width="2.6" stroke-linejoin="round"/><polyline points="164.8,937.3 194.0,937.0 200.7,903.8 208.0,937.0 215.0,904.0 221.6,920.0 228.6,897.7 235.9,961.0 242.5,920.0 249.6,971.0 256.8,936.9 263.9,924.7 270.7,925.8 277.7,945.7 284.8,946.8 292.0,932.5 298.6,948.0 305.9,948.0 313.0,926.5 320.0,948.0 327.3,939.0 330.0,941.7 340.8,926.7 348.3,935.8 355.0,955.8 361.7,938.3 369.2,940.0 375.8,923.3 383.3,934.2 389.2,936.7 396.7,948.3 403.3,933.3 410.0,940.0 417.5,935.8 425.0,941.7 431.7,930.8 439.2,945.8 445.8,952.5 453.3,934.2 460.0,947.5 466.7,950.0 473.3,950.0 480.8,945.0 488.3,939.2 495.0,940.8 501.7,939.2 509.2,947.5 515.8,944.2 523.3,937.5 530.0,945.8 536.7,945.8 544.2,937.5 550.8,935.8 557.5,947.5 565.0,941.7 571.7,938.3 579.2,940.8 585.8,940.0 593.3,935.8 600.0,939.2 607.5,935.0 614.2,940.0 621.7,935.0 628.3,937.5 635.0,935.8 640.0,941.9 642.5,942.5 648.8,938.8 656.2,936.9 662.5,937.5 670.0,943.8 683.8,935.0 691.2,943.0 704.4,938.8 712.5,943.8 719.4,938.8 732.5,940.6 740.0,946.2 753.8,942.5 760.0,943.8 768.0,949.4 775.6,940.6 781.2,938.0 796.2,939.4 810.0,943.0 823.8,940.6 830.0,941.9 838.0,948.8 845.0,941.2 860.0,941.9 873.0,950.6 880.0,943.8 894.4,938.1 901.2,943.1 913.8,938.1 922.5,942.5 928.8,940.6 936.2,938.8 957.5,940.0 967.5,941.2 980.0,939.4 998.8,939.4 1013.8,945.6 1020.0,938.1 1035.0,943.1 1048.8,941.9 1056.2,943.1 1062.5,946.2 1076.2,949.4 1083.8,953.8 1091.2,971.2 1097.5,1013.8" fill="none" stroke="#4b9fd3" stroke-width="2.6" stroke-linejoin="round"/></svg>
<div class="t" style="left:48.00px;width:40px;text-align:right;top:862.66px;font-size:18px;font-weight:400;letter-spacing:0px;color:#1b2430;">6</div>
<div class="t" style="left:48.00px;width:40px;text-align:right;top:929.16px;font-size:18px;font-weight:400;letter-spacing:0px;color:#1b2430;">4</div>
<div class="t" style="left:48.00px;width:40px;text-align:right;top:995.66px;font-size:18px;font-weight:400;letter-spacing:0px;color:#1b2430;">2</div>
<div class="t" style="left:48.00px;width:40px;text-align:right;top:1062.16px;font-size:18px;font-weight:400;letter-spacing:0px;color:#1b2430;">0</div>
<div class="t" style="left:-39.8px;top:961px;width:200px;height:20px;text-align:center;font-size:19.5px;font-weight:700;color:#1b2430;transform:rotate(-90deg);line-height:20px">Avg Duration of Stay</div>
<div class="t" style="left:1126.80px;top:857.99px;font-size:19.5px;font-weight:700;letter-spacing:0px;color:#1b2430;">User Type</div>
<div class="a" style="left:1127px;top:893.4px;width:18px;height:3px;background:#4b9fd3"></div>
<div class="a" style="left:1127px;top:920.4px;width:18px;height:3px;background:#5ab4df"></div>
<div class="t" style="left:1152.00px;top:885.76px;font-size:18px;font-weight:400;letter-spacing:0px;color:#1b2430;">business</div>
<div class="t" style="left:1152.00px;top:912.56px;font-size:18px;font-weight:400;letter-spacing:0px;color:#1b2430;">individual</div>
<div class="a" style="left:880px;top:972px;width:159px;height:50px;border-radius:8px;padding:2px;background:linear-gradient(135deg,#1e88e0 0%,#9b3ee0 45%,#e83a8a 70%,#f4401e 100%)"><div style="width:100%;height:100%;border-radius:6px;background:linear-gradient(160deg,#e6eef8 0%,#ece8f8 40%,#fbe6ef 55%,#fce7ef 100%)"></div></div>
<svg width="1919" height="1077"><defs><linearGradient id="ag" x1="0" y1="0" x2="1" y2="1"><stop offset="0" stop-color="#1a7ad8"/><stop offset="0.45" stop-color="#a828d8"/><stop offset="0.75" stop-color="#f02a2a"/><stop offset="1" stop-color="#f53a1e"/></linearGradient></defs><path d="M910.7,988.8 L899.9,988.8 L899.9,1004.8 L921.8,1004.8 L921.8,1000.4" fill="none" stroke="url(#ag)" stroke-width="2.1"/><path d="M917.3,987.9 C918.2,991.6 919,992.5 922.9,993.4 C919,994.3 918.2,995.2 917.2,998.9 C916.3,995.2 915.5,994.3 911.6,993.4 C915.5,992.5 916.3,991.6 917.3,987.9 Z" fill="#d030c4"/></svg>
<div class="t" style="left:929.60px;top:988.37px;font-size:20.0px;font-weight:400;letter-spacing:-0.3px;color:#0e1419;">Ask Genie</div>
<svg width="1919" height="1077"><line x1="1345" y1="905.4" x2="1853.5" y2="905.4" stroke="#dcdce2" stroke-width="1.2"/><line x1="1336.5" y1="905.4" x2="1342" y2="905.4" stroke="#9aa0a8" stroke-width="1.2"/><line x1="1345" y1="997.1" x2="1853.5" y2="997.1" stroke="#dcdce2" stroke-width="1.2"/><line x1="1336.5" y1="997.1" x2="1342" y2="997.1" stroke="#9aa0a8" stroke-width="1.2"/><line x1="1368.5" y1="905.4" x2="1368.5" y2="1088.8" stroke="#1c2533" stroke-width="1.6"/><line x1="1346.0" y1="905.4" x2="1391.0" y2="905.4" stroke="#5d6978" stroke-width="2"/><rect x="1345.9" y="1052.1" width="45.2" height="17.5" fill="#61a8d5"/><line x1="1346.0" y1="1069.6" x2="1391.0" y2="1069.6" stroke="#5d6978" stroke-width="2"/><line x1="1419.5" y1="868.7" x2="1419.5" y2="1070.5" stroke="#1c2533" stroke-width="1.6"/><line x1="1397.0" y1="868.7" x2="1442.0" y2="868.7" stroke="#5d6978" stroke-width="2"/><rect x="1396.9" y="1033.8" width="45.2" height="17.5" fill="#61a8d5"/><line x1="1397.0" y1="1069.6" x2="1442.0" y2="1069.6" stroke="#5d6978" stroke-width="2"/><line x1="1470.5" y1="905.4" x2="1470.5" y2="1070.5" stroke="#1c2533" stroke-width="1.6"/><line x1="1448.0" y1="905.4" x2="1493.0" y2="905.4" stroke="#5d6978" stroke-width="2"/><rect x="1447.9" y="1015.4" width="45.2" height="17.5" fill="#61a8d5"/><line x1="1448.0" y1="1069.6" x2="1493.0" y2="1069.6" stroke="#5d6978" stroke-width="2"/><line x1="1521.5" y1="868.7" x2="1521.5" y2="1070.5" stroke="#1c2533" stroke-width="1.6"/><line x1="1499.0" y1="868.7" x2="1544.0" y2="868.7" stroke="#5d6978" stroke-width="2"/><rect x="1498.9" y="997.1" width="45.2" height="17.5" fill="#61a8d5"/><line x1="1499.0" y1="1069.6" x2="1544.0" y2="1069.6" stroke="#5d6978" stroke-width="2"/><line x1="1572.5" y1="905.4" x2="1572.5" y2="1052.1" stroke="#1c2533" stroke-width="1.6"/><line x1="1550.0" y1="905.4" x2="1595.0" y2="905.4" stroke="#5d6978" stroke-width="2"/><rect x="1549.9" y="978.8" width="45.2" height="17.5" fill="#61a8d5"/><line x1="1550.0" y1="1052.1" x2="1595.0" y2="1052.1" stroke="#5d6978" stroke-width="2"/><line x1="1623.5" y1="905.4" x2="1623.5" y2="1033.8" stroke="#1c2533" stroke-width="1.6"/><line x1="1601.0" y1="905.4" x2="1646.0" y2="905.4" stroke="#5d6978" stroke-width="2"/><rect x="1600.9" y="960.4" width="45.2" height="17.5" fill="#61a8d5"/><line x1="1601.0" y1="1033.8" x2="1646.0" y2="1033.8" stroke="#5d6978" stroke-width="2"/><line x1="1674.5" y1="905.4" x2="1674.5" y2="1015.4" stroke="#1c2533" stroke-width="1.6"/><line x1="1652.0" y1="905.4" x2="1697.0" y2="905.4" stroke="#5d6978" stroke-width="2"/><rect x="1651.9" y="942.1" width="45.2" height="17.5" fill="#61a8d5"/><line x1="1652.0" y1="1015.4" x2="1697.0" y2="1015.4" stroke="#5d6978" stroke-width="2"/><line x1="1725.5" y1="905.4" x2="1725.5" y2="978.8" stroke="#1c2533" stroke-width="1.6"/><line x1="1703.0" y1="905.4" x2="1748.0" y2="905.4" stroke="#5d6978" stroke-width="2"/><rect x="1702.9" y="923.7" width="45.2" height="17.5" fill="#61a8d5"/><line x1="1703.0" y1="978.8" x2="1748.0" y2="978.8" stroke="#5d6978" stroke-width="2"/><line x1="1776.5" y1="905.4" x2="1776.5" y2="960.4" stroke="#1c2533" stroke-width="1.6"/><line x1="1754.0" y1="905.4" x2="1799.0" y2="905.4" stroke="#5d6978" stroke-width="2"/><rect x="1753.9" y="923.7" width="45.2" height="17.5" fill="#61a8d5"/><line x1="1754.0" y1="960.4" x2="1799.0" y2="960.4" stroke="#5d6978" stroke-width="2"/><line x1="1827.5" y1="868.7" x2="1827.5" y2="942.1" stroke="#1c2533" stroke-width="1.6"/><line x1="1805.0" y1="868.7" x2="1850.0" y2="868.7" stroke="#5d6978" stroke-width="2"/><rect x="1804.9" y="905.4" width="45.2" height="12.0" fill="#61a8d5"/><line x1="1805.0" y1="942.1" x2="1850.0" y2="942.1" stroke="#5d6978" stroke-width="2"/></svg>
<div class="t" style="left:1293.00px;width:40px;text-align:right;top:896.56px;font-size:18px;font-weight:400;letter-spacing:0px;color:#1b2430;">10</div>
<div class="t" style="left:1293.00px;width:40px;text-align:right;top:988.26px;font-size:18px;font-weight:400;letter-spacing:0px;color:#1b2430;">5</div>
<div class="t" style="left:1196px;top:959px;width:200px;height:20px;text-align:center;font-size:19.5px;font-weight:700;color:#1b2430;transform:rotate(-90deg);line-height:20px">Property Max Guests</div>
</div></div>
<svg width="1919" height="1077"><path d="M1656.1,385.2 L1656.1,409.9 L1661.8,404.4 L1667.4,416.3 L1671.9,414.3 L1666.4,403 L1673.9,402.6 Z" fill="#05070a" stroke="#ffffff" stroke-width="1" stroke-linejoin="round"/></svg>
</body></html>
